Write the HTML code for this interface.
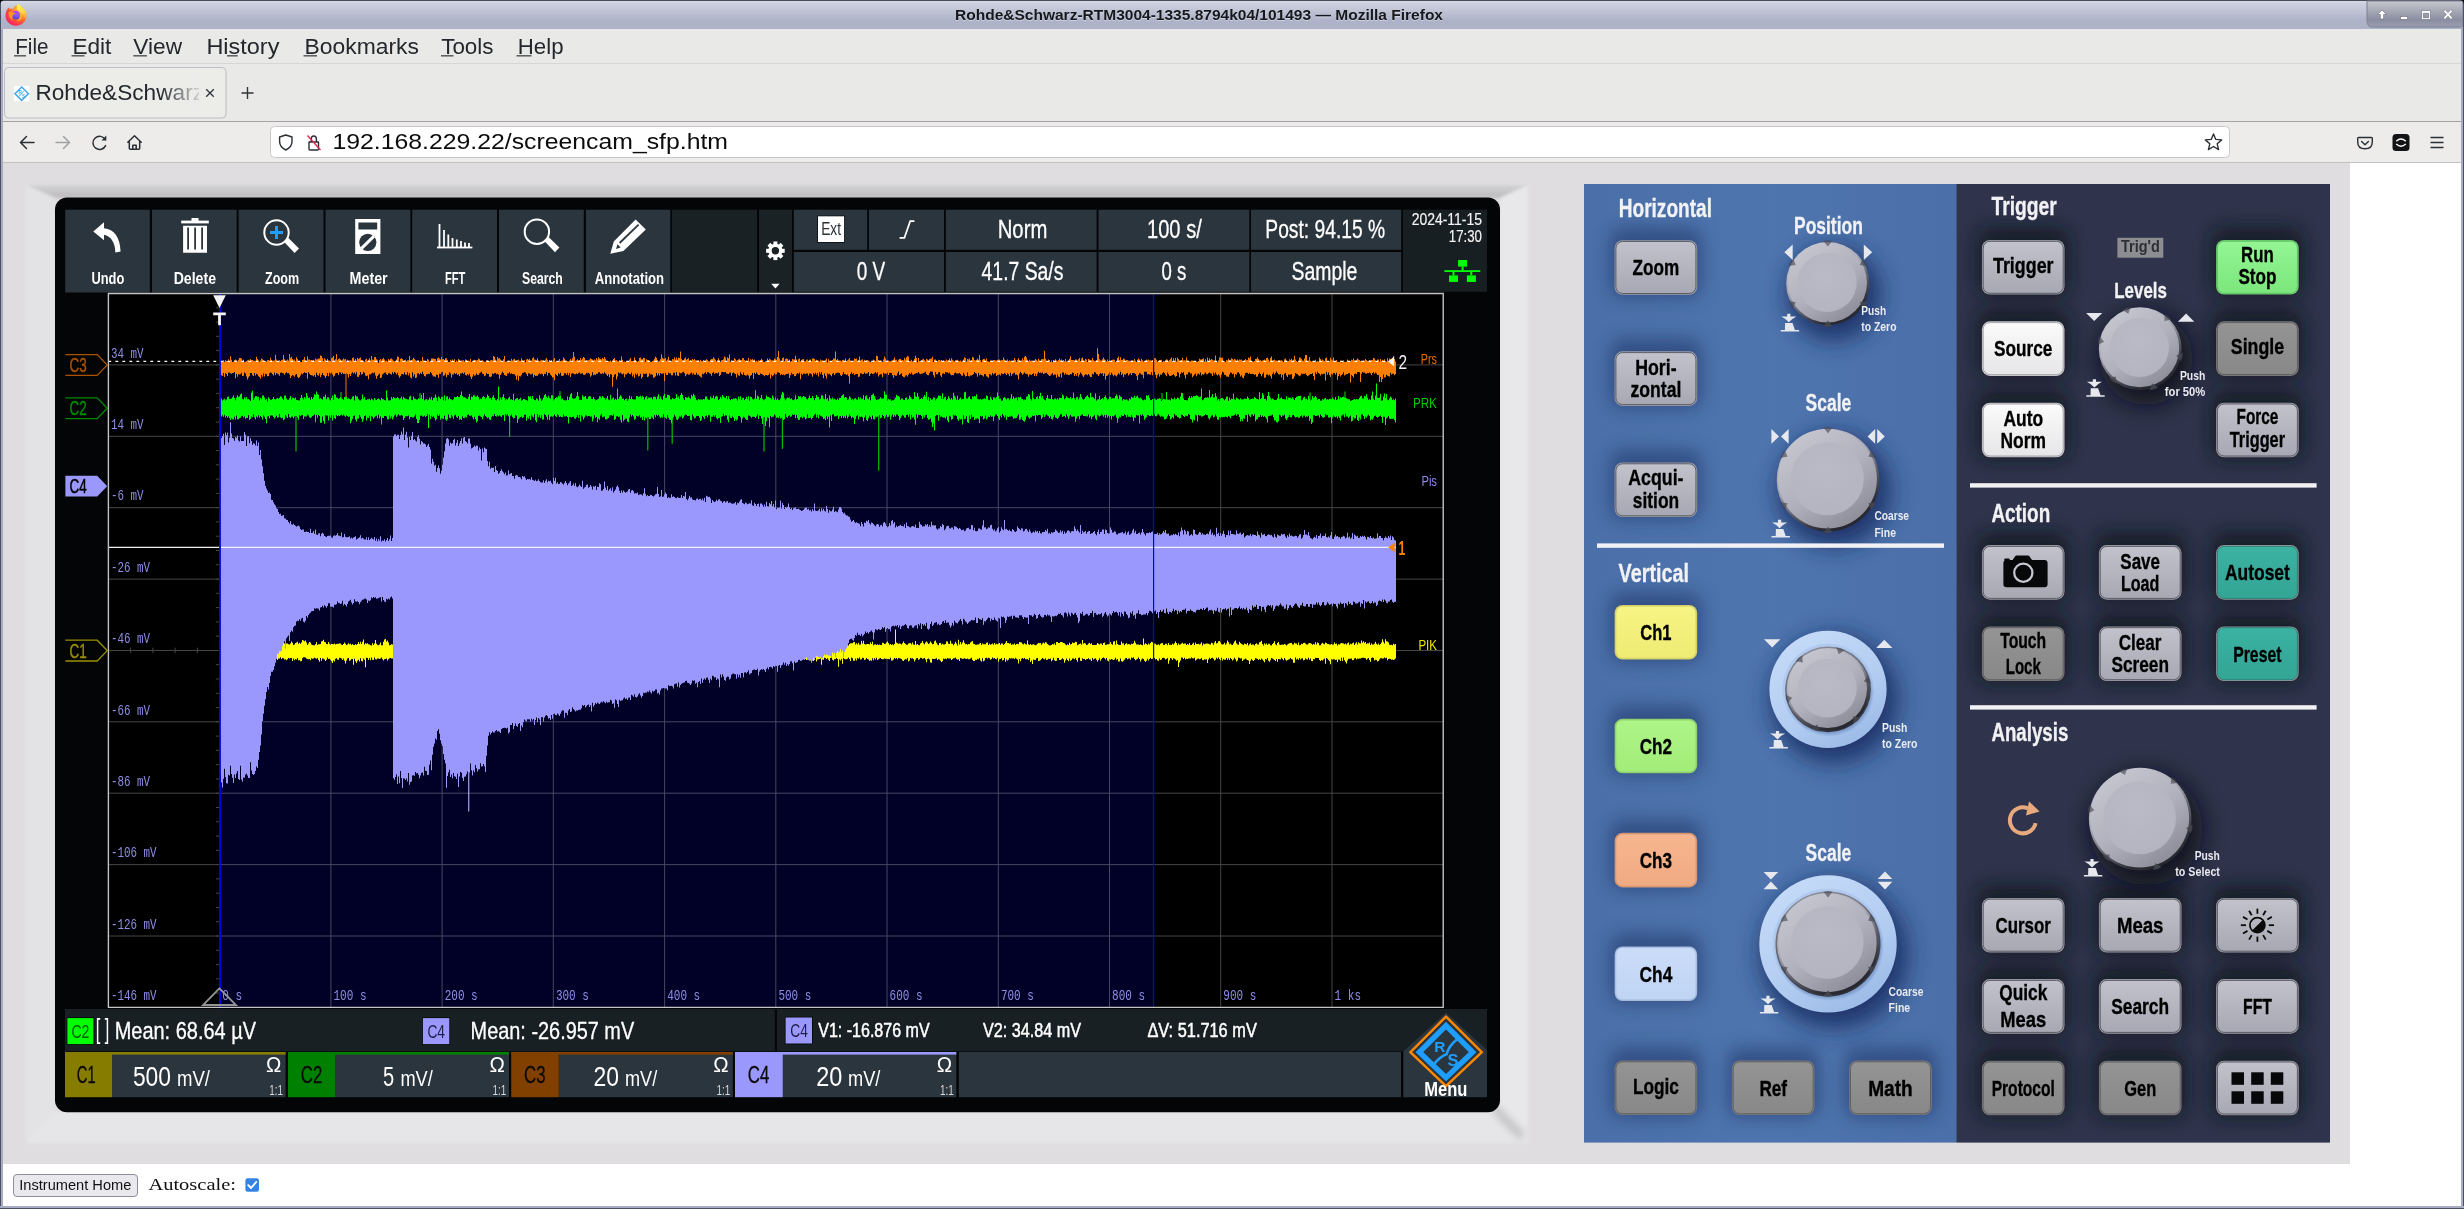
<!DOCTYPE html>
<html lang="en"><head><meta charset="utf-8"><title>Rohde&amp;Schwarz-RTM3004-1335.8794k04/101493</title>
<style>
html,body{margin:0;padding:0;background:#fff;}
body{width:2464px;height:1209px;overflow:hidden;font-family:"Liberation Sans",sans-serif;}
svg{display:block;font-family:"Liberation Sans",sans-serif;will-change:transform;-webkit-font-smoothing:antialiased;}
text{white-space:pre;}
</style></head><body>
<svg width="2464" height="1209" viewBox="0 0 2464 1209">
<defs>
<linearGradient id="gTitle" x1="0" y1="0" x2="0" y2="1"><stop offset="0" stop-color="#d4d7e3"/><stop offset="0.7" stop-color="#aeb3c9"/><stop offset="1" stop-color="#adb2c8"/></linearGradient>
<linearGradient id="gWB" x1="0" y1="0" x2="0" y2="1"><stop offset="0" stop-color="#c6c7ce"/><stop offset="0.72" stop-color="#8b8ea0"/><stop offset="1" stop-color="#9b9eb0"/></linearGradient>
<linearGradient id="gFade" x1="0" y1="0" x2="1" y2="0"><stop offset="0" stop-color="#ebebe9" stop-opacity="0"/><stop offset="1" stop-color="#ebebe9" stop-opacity="1"/></linearGradient>
<radialGradient id="gFx" cx="0.78" cy="0.2" r="1.0"><stop offset="0" stop-color="#ffe14a"/><stop offset="0.3" stop-color="#ffa726"/><stop offset="0.58" stop-color="#ff5a34"/><stop offset="0.8" stop-color="#ff3350"/><stop offset="1" stop-color="#e3107e"/></radialGradient>
<linearGradient id="gFxY" x1="0.3" y1="0" x2="0.7" y2="1"><stop offset="0" stop-color="#fff44f"/><stop offset="0.6" stop-color="#ffd43c"/><stop offset="1" stop-color="#ff9a30"/></linearGradient>
<linearGradient id="gFx2" x1="0.6" y1="0" x2="0.4" y2="1"><stop offset="0" stop-color="#c03ae0"/><stop offset="0.45" stop-color="#8f5af8"/><stop offset="1" stop-color="#5240c4"/></linearGradient>
<filter id="fxb" x="-10%" y="-10%" width="120%" height="120%"><feGaussianBlur stdDeviation="0.35"/></filter>
</defs>
<rect x="0.0" y="0.0" width="2464.0" height="1209.0" fill="#ffffff"/>
<rect x="0.0" y="0.0" width="2464.0" height="29.0" fill="url(#gTitle)"/>
<rect x="0.0" y="0.0" width="2464.0" height="1.2" fill="#4a4d5a"/>
<rect x="3.0" y="1.2" width="2461.0" height="1.0" fill="#dde0ea"/>
<path d="M2367 1 H2463 V27 H2373 Q2367 27 2367 21 Z" fill="url(#gWB)" stroke="#7d8192" stroke-width="1"/>
<path d="M2382 10 L2386.5 14.5 H2383.6 V19 H2380.4 V14.5 H2377.5 Z" fill="#fff" stroke="#6a6d7c" stroke-width="0.6"/>
<rect x="2400.5" y="16.5" width="7.0" height="2.8" fill="#fff" stroke="#6a6d7c" stroke-width="0.6"/>
<path d="M2421.5 10.5 H2430.5 V19.5 H2421.5 Z M2423.3 13.3 V17.7 H2428.7 V13.3 Z" fill="#fff" stroke="#6a6d7c" stroke-width="0.6" fill-rule="evenodd"/>
<path d="M2443.3 11.2 L2445 9.6 L2448 12.7 L2451 9.6 L2452.7 11.2 L2449.6 14.5 L2452.7 17.8 L2451 19.4 L2448 16.3 L2445 19.4 L2443.3 17.8 L2446.4 14.5 Z" fill="#fff" stroke="#6a6d7c" stroke-width="0.6"/>
<g filter="url(#fxb)">
<path d="M16 5.6 C21.8 5.6 26.4 10.2 26.4 15.8 C26.4 21.4 21.8 25.7 16 25.7 C10.2 25.7 5.5 21.4 5.5 15.8 C5.5 12.6 6.6 9.6 8.6 7.4 L9.8 9.4 L11.2 8 L12.4 9.6 C13.4 8.6 14.6 5.6 16 5.6 Z" fill="url(#gFx)"/>
<path d="M18.6 3.8 C20 6.4 24.6 8.6 26 12.6 C26.8 15.4 26.4 18 25.2 20.2 C24.8 14.8 21.6 12.6 19 11.2 C16.6 9.8 15.8 6.6 18.6 3.8 Z" fill="url(#gFxY)"/>
<circle cx="15.9" cy="15.2" r="4.4" fill="url(#gFx2)"/>
<path d="M8.6 12.4 C10.4 11.6 12.2 12 13 12.8 C14.2 12.4 15.4 12.8 15.8 13.6 C14.4 13.8 13.2 14.4 12.6 15.6 C11.8 17.2 12.2 18.8 13.2 19.8 C10.6 19.2 8.4 16.4 8.6 12.4 Z" fill="#ff9a1f"/>
<path d="M19.6 11.4 C22 13 22.6 16.4 21 19 C20 20.6 18 21.4 16.4 21 C19 20.2 20.4 17.6 20 15 C19.8 13.6 19.4 12.4 19.6 11.4 Z" fill="#ffb52e" opacity="0.85"/>
</g>
<text x="955.0" y="21.2" font-size="13.95" font-weight="bold" textLength="488.0" lengthAdjust="spacingAndGlyphs" fill="#e8eaf2" opacity="0.55">Rohde&amp;Schwarz-RTM3004-1335.8794k04/101493 — Mozilla Firefox</text>
<text x="955.0" y="20.2" font-size="13.95" font-weight="bold" textLength="488.0" lengthAdjust="spacingAndGlyphs" fill="#16181c">Rohde&amp;Schwarz-RTM3004-1335.8794k04/101493 — Mozilla Firefox</text>
<rect x="3.0" y="29.0" width="2458.0" height="35.0" fill="#e9e9e7"/>
<rect x="3.0" y="64.0" width="2458.0" height="57.0" fill="#e9e9e7"/>
<rect x="3.0" y="63.0" width="2458.0" height="1.0" fill="#d6d6d4"/>
<rect x="3.0" y="121.0" width="2458.0" height="1.0" fill="#a2a2a2"/>
<rect x="3.0" y="122.0" width="2458.0" height="40.0" fill="#edecea"/>
<rect x="3.0" y="162.0" width="2458.0" height="1.0" fill="#c2c1c1"/>
<text x="15.2" y="53.9" font-size="21.37" textLength="33.3" lengthAdjust="spacingAndGlyphs" fill="#24282d">File</text>
<rect x="14.0" y="55.3" width="12.0" height="1.1" fill="#24282d"/>
<text x="72.4" y="53.9" font-size="21.37" textLength="39.0" lengthAdjust="spacingAndGlyphs" fill="#24282d">Edit</text>
<rect x="71.5" y="55.3" width="13.0" height="1.1" fill="#24282d"/>
<text x="133.3" y="53.9" font-size="21.37" textLength="48.7" lengthAdjust="spacingAndGlyphs" fill="#24282d">View</text>
<rect x="133.3" y="55.3" width="13.7" height="1.1" fill="#24282d"/>
<text x="206.4" y="53.9" font-size="21.37" textLength="73.0" lengthAdjust="spacingAndGlyphs" fill="#24282d">History</text>
<rect x="227.0" y="55.3" width="10.7" height="1.1" fill="#24282d"/>
<text x="304.5" y="53.9" font-size="21.37" textLength="114.5" lengthAdjust="spacingAndGlyphs" fill="#24282d">Bookmarks</text>
<rect x="303.5" y="55.3" width="13.5" height="1.1" fill="#24282d"/>
<text x="441.2" y="53.9" font-size="21.37" textLength="52.3" lengthAdjust="spacingAndGlyphs" fill="#24282d">Tools</text>
<rect x="441.0" y="55.3" width="12.5" height="1.1" fill="#24282d"/>
<text x="517.8" y="53.9" font-size="21.37" textLength="45.7" lengthAdjust="spacingAndGlyphs" fill="#24282d">Help</text>
<rect x="516.5" y="55.3" width="15.0" height="1.1" fill="#24282d"/>
<rect x="4.5" y="67.5" width="221.5" height="50.5" rx="4" fill="#ecece9" stroke="#bdbdc6" stroke-width="1"/>
<rect x="14.0" y="86.0" width="15.4" height="15.4" fill="#ffffff"/>
<path d="M21.7 87 L28.4 93.7 L21.7 100.4 L15 93.7 Z" fill="none" stroke="#3fa9ee" stroke-width="1.5"/>
<path d="M24.2 90.6 Q21.8 92.2 21.6 94 Q20 94.6 18.8 96.6" fill="none" stroke="#3fa9ee" stroke-width="0.9"/>
<text x="18.4" y="94.4" font-size="4.60" font-weight="bold" fill="#3fa9ee">R</text>
<text x="21.9" y="97.6" font-size="4.60" font-weight="bold" fill="#3fa9ee">S</text>
<text x="35.4" y="99.8" font-size="21.22" textLength="168.6" lengthAdjust="spacingAndGlyphs" fill="#24282d">Rohde&amp;Schwarz</text>
<rect x="160.0" y="72.0" width="45.0" height="42.0" fill="url(#gFade)"/>
<rect x="199.0" y="72.0" width="25.0" height="42.0" fill="#ecece9"/>
<path d="M206.2 89.2 L213.8 96.8 M213.8 89.2 L206.2 96.8" fill="none" stroke="#30343a" stroke-width="1.3"/>
<path d="M241.5 93 H253.5 M247.5 87 V99" fill="none" stroke="#30343a" stroke-width="1.4"/>
<path d="M34 142.5 H20.5 M26.5 136.5 L20.5 142.5 L26.5 148.5" fill="none" stroke="#2b2f35" stroke-width="1.5" stroke-linecap="round" stroke-linejoin="round"/>
<path d="M56 142.5 H69.5 M63.5 136.5 L69.5 142.5 L63.5 148.5" fill="none" stroke="#a0a2a5" stroke-width="1.5" stroke-linecap="round" stroke-linejoin="round"/>
<path d="M105.3 139.6 A6.6 6.6 0 1 0 105.6 145.6" fill="none" stroke="#2b2f35" stroke-width="1.5" stroke-linecap="round"/>
<path d="M106.3 135.6 V140.4 H101.5 Z" fill="#2b2f35"/>
<path d="M127.8 142.3 L134.5 135.8 L141.2 142.3 M129.3 141.5 V148.3 Q129.3 149.3 130.3 149.3 H138.7 Q139.7 149.3 139.7 148.3 V141.5 M132.8 149.3 V145.2 H136.2 V149.3" fill="none" stroke="#2b2f35" stroke-width="1.5" stroke-linecap="round" stroke-linejoin="round"/>
<rect x="270.5" y="126.5" width="1959.0" height="31.0" rx="4" fill="#ffffff" stroke="#c9c9cd" stroke-width="1"/>
<path d="M285.8 135 L292 137 V141.5 Q292 147 285.8 150 Q279.6 147 279.6 141.5 V137 Z" fill="none" stroke="#2b2f35" stroke-width="1.4" stroke-linejoin="round"/>
<path d="M309 142 H318.5 V149 Q318.5 150 317.5 150 H310 Q309 150 309 149 Z M311.2 142 V139.5 Q311.2 136 313.8 136 Q316.4 136 316.4 139.5 V142" fill="none" stroke="#2b2f35" stroke-width="1.4" stroke-linejoin="round"/>
<path d="M307.5 135.5 L320.5 150" fill="none" stroke="#e22850" stroke-width="1.4"/>
<text x="332.5" y="148.6" font-size="21.51" textLength="395.5" lengthAdjust="spacingAndGlyphs" fill="#0c0c0d">192.168.229.22/screencam_sfp.htm</text>
<path d="M2213.5 134.0 L2215.8 139.4 L2221.7 139.9 L2217.2 143.8 L2218.6 149.6 L2213.5 146.5 L2208.4 149.6 L2209.8 143.8 L2205.3 139.9 L2211.2 139.4 Z" fill="none" stroke="#2b2f35" stroke-width="1.4" stroke-linejoin="round"/>
<path d="M2358.5 137.5 H2371.5 Q2372.3 137.5 2372.3 138.5 V142 Q2372.3 148.8 2365 148.8 Q2357.7 148.8 2357.7 142 V138.5 Q2357.7 137.5 2358.5 137.5 Z" fill="none" stroke="#2b2f35" stroke-width="1.4"/>
<path d="M2361.6 141.6 L2365 144.8 L2368.4 141.6" fill="none" stroke="#2b2f35" stroke-width="1.4" stroke-linecap="round" stroke-linejoin="round"/>
<rect x="2392.5" y="134.0" width="17.0" height="17.0" rx="3.5" fill="#111315"/>
<path d="M2396.2 141.2 Q2401 136.8 2405.8 141.2 M2396.2 144 Q2401 148.4 2405.8 144" fill="none" stroke="#fff" stroke-width="1.3"/>
<path d="M2430.5 137.5 H2443.5 M2430.5 142.5 H2443.5 M2430.5 147.5 H2443.5" fill="none" stroke="#2b2f35" stroke-width="1.5"/>
<rect x="3.0" y="163.0" width="2347.0" height="1001.0" fill="#dfdde0"/>
<defs>
<filter id="fBlur6" x="-5%" y="-5%" width="110%" height="110%"><feGaussianBlur stdDeviation="3"/></filter>
<filter id="fBlurC" x="-100%" y="-100%" width="300%" height="300%"><feGaussianBlur stdDeviation="3.5"/></filter>
<filter id="fBlurB" x="-5%" y="-5%" width="110%" height="110%"><feGaussianBlur stdDeviation="1.8"/></filter>
<filter id="fBlur2" x="-5%" y="-5%" width="110%" height="110%"><feGaussianBlur stdDeviation="1.2"/></filter>
<linearGradient id="gBezT" x1="0" y1="0" x2="0" y2="1"><stop offset="0" stop-color="#d3d2d5"/><stop offset="1" stop-color="#bbbabd"/></linearGradient>
</defs>
<g filter="url(#fBlurB)"><path d="M26 185 L1528 185 L1500 198 L55 198 Z" fill="url(#gBezT)"/><path d="M26 185 L55 198 L55 1112 L26 1143 Z" fill="#e3e2e5"/><path d="M1528 185 L1528 1143 L1500 1112 L1500 198 Z" fill="#e8e7e9"/><path d="M26 1143 L55 1112 L1500 1112 L1528 1143 Z" fill="#e6e5e7"/></g>
<g filter="url(#fBlurC)" opacity="0.48"><path d="M1498 1112 L1520 1134" fill="none" stroke="#a2a1a4" stroke-width="9" stroke-linecap="round"/></g>
<rect x="55.0" y="197.5" width="1445.0" height="914.8" rx="12" fill="#030507"/>
<rect x="65.2" y="209.7" width="84.6" height="82.8" fill="#2b353d"/>
<text x="91.4" y="284.0" font-size="17.30" font-weight="bold" textLength="32.9" lengthAdjust="spacingAndGlyphs" fill="#ffffff">Undo</text>
<rect x="152.0" y="209.7" width="84.7" height="82.8" fill="#2b353d"/>
<text x="173.7" y="284.0" font-size="17.30" font-weight="bold" textLength="42.3" lengthAdjust="spacingAndGlyphs" fill="#ffffff">Delete</text>
<rect x="238.6" y="209.7" width="84.9" height="82.8" fill="#2b353d"/>
<text x="265.0" y="284.0" font-size="17.30" font-weight="bold" textLength="34.2" lengthAdjust="spacingAndGlyphs" fill="#ffffff">Zoom</text>
<rect x="325.5" y="209.7" width="84.9" height="82.8" fill="#2b353d"/>
<text x="349.5" y="284.0" font-size="17.30" font-weight="bold" textLength="38.2" lengthAdjust="spacingAndGlyphs" fill="#ffffff">Meter</text>
<rect x="412.2" y="209.7" width="84.8" height="82.8" fill="#2b353d"/>
<text x="445.0" y="284.0" font-size="17.30" font-weight="bold" textLength="20.4" lengthAdjust="spacingAndGlyphs" fill="#ffffff">FFT</text>
<rect x="499.0" y="209.7" width="84.8" height="82.8" fill="#2b353d"/>
<text x="522.0" y="284.0" font-size="17.30" font-weight="bold" textLength="40.8" lengthAdjust="spacingAndGlyphs" fill="#ffffff">Search</text>
<rect x="585.9" y="209.7" width="84.4" height="82.8" fill="#2b353d"/>
<text x="594.8" y="284.0" font-size="17.30" font-weight="bold" textLength="69.3" lengthAdjust="spacingAndGlyphs" fill="#ffffff">Annotation</text>
<rect x="672.0" y="209.7" width="85.1" height="82.8" fill="#1a2125"/>
<rect x="759.0" y="209.7" width="33.0" height="82.8" fill="#1a2226"/>
<path d="M93.3 231.4 L104 222.3 V228.3 Q119.5 230 120.6 251.5 L115.4 252.6 Q114.6 237 104 234.8 V240.2 Z" fill="#ffffff"/>
<rect x="181.2" y="220.6" width="27.6" height="2.8" fill="#fff"/>
<rect x="191.5" y="218.0" width="7.0" height="3.0" fill="#fff"/>
<path d="M183.1 225.7 H207 V252.7 H183.1 Z M187.2 227.6 V249.4 H189 V227.6 Z M194.2 227.6 V249.4 H196 V227.6 Z M201.2 227.6 V249.4 H203 V227.6 Z" fill="#fff" fill-rule="evenodd"/>
<circle cx="276.5" cy="232.5" r="12.2" fill="none" stroke="#fff" stroke-width="2"/>
<path d="M284.2 242 L288.4 238 L299 248.4 L294.6 253 Z" fill="#fff"/>
<path d="M270 232.5 H283 M276.5 226 V239" fill="none" stroke="#1e9eff" stroke-width="3"/>
<path d="M355.2 218.9 H380.4 V254.1 H355.2 Z M358.4 222.4 V229.6 H377.2 V222.4 Z" fill="#fff" fill-rule="evenodd"/>
<circle cx="367.8" cy="242.3" r="8.6" fill="#2b353d"/>
<path d="M361.5 248.3 L374 236.2" fill="none" stroke="#fff" stroke-width="3"/>
<rect x="437.0" y="246.6" width="35.4" height="1.8" fill="#fff"/>
<rect x="438.6" y="224.0" width="1.8" height="23.0" fill="#fff"/>
<rect x="443.1" y="230.0" width="1.8" height="17.0" fill="#fff"/>
<rect x="447.4" y="234.5" width="1.8" height="12.5" fill="#fff"/>
<rect x="451.6" y="238.0" width="1.8" height="9.0" fill="#fff"/>
<rect x="455.9" y="239.5" width="1.8" height="7.5" fill="#fff"/>
<rect x="460.1" y="241.0" width="1.8" height="6.0" fill="#fff"/>
<rect x="464.1" y="242.5" width="1.8" height="4.5" fill="#fff"/>
<rect x="468.1" y="243.0" width="1.8" height="4.0" fill="#fff"/>
<circle cx="536.9" cy="231.7" r="12.2" fill="none" stroke="#fff" stroke-width="2"/>
<path d="M544.6 241.2 L548.8 237.2 L559.4 247.6 L555 252.2 Z" fill="#fff"/>
<path d="M610.3 253.8 L613.8 241.4 L635.6 219.4 L645.8 229.6 L623.4 251 Z" fill="#fff"/>
<path d="M617.6 244.2 L616 249 L620.6 247.6 Z" fill="#2b353d"/>
<path d="M619.6 243 L638.6 224.6" fill="none" stroke="#2b353d" stroke-width="1.8"/>
<rect x="-2" y="-9.3" width="4" height="5" fill="#fff" transform="translate(775.4 250.8) rotate(0.0)"/><rect x="-2" y="-9.3" width="4" height="5" fill="#fff" transform="translate(775.4 250.8) rotate(45.0)"/><rect x="-2" y="-9.3" width="4" height="5" fill="#fff" transform="translate(775.4 250.8) rotate(90.0)"/><rect x="-2" y="-9.3" width="4" height="5" fill="#fff" transform="translate(775.4 250.8) rotate(135.0)"/><rect x="-2" y="-9.3" width="4" height="5" fill="#fff" transform="translate(775.4 250.8) rotate(180.0)"/><rect x="-2" y="-9.3" width="4" height="5" fill="#fff" transform="translate(775.4 250.8) rotate(225.0)"/><rect x="-2" y="-9.3" width="4" height="5" fill="#fff" transform="translate(775.4 250.8) rotate(270.0)"/><rect x="-2" y="-9.3" width="4" height="5" fill="#fff" transform="translate(775.4 250.8) rotate(315.0)"/>
<circle cx="775.4" cy="250.8" r="5.4" fill="none" stroke="#fff" stroke-width="3.4"/>
<path d="M771.2 283.8 H779.6 L775.4 288.4 Z" fill="#fff"/>
<rect x="793.8" y="209.7" width="73.4" height="40.1" fill="#2b353d"/>
<rect x="869.0" y="209.7" width="75.0" height="40.1" fill="#2b353d"/>
<rect x="945.8" y="209.7" width="150.8" height="40.1" fill="#2b353d"/>
<rect x="1098.5" y="209.7" width="150.8" height="40.1" fill="#2b353d"/>
<rect x="1251.0" y="209.7" width="150.2" height="40.1" fill="#2b353d"/>
<rect x="793.8" y="252.0" width="150.2" height="39.8" fill="#2b353d"/>
<rect x="945.8" y="252.0" width="150.8" height="39.8" fill="#2b353d"/>
<rect x="1098.5" y="252.0" width="150.8" height="39.8" fill="#2b353d"/>
<rect x="1251.0" y="252.0" width="150.2" height="39.8" fill="#2b353d"/>
<rect x="1403.0" y="209.7" width="84.0" height="82.1" fill="#181f23"/>
<rect x="817.3" y="215.6" width="27.5" height="27.1" fill="#05080a"/>
<rect x="818.0" y="216.3" width="26.1" height="25.7" fill="#ffffff"/>
<text x="821.2" y="235.2" font-size="17.44" textLength="19.8" lengthAdjust="spacingAndGlyphs" fill="#2a3036">Ext</text>
<path d="M899.6 237.8 H904.4 L910.2 221.2 H914.4" fill="none" stroke="#fff" stroke-width="1.7"/>
<text x="997.7" y="237.7" font-size="25.29" textLength="49.6" lengthAdjust="spacingAndGlyphs" fill="#fff" stroke="#fff" stroke-width="0.3">Norm</text>
<text x="1147.0" y="237.7" font-size="25.29" textLength="54.8" lengthAdjust="spacingAndGlyphs" fill="#fff" stroke="#fff" stroke-width="0.3">100 s/</text>
<text x="1265.3" y="237.7" font-size="25.29" textLength="119.8" lengthAdjust="spacingAndGlyphs" fill="#fff" stroke="#fff" stroke-width="0.3">Post: 94.15 %</text>
<text x="856.7" y="279.7" font-size="25.00" textLength="28.5" lengthAdjust="spacingAndGlyphs" fill="#fff" stroke="#fff" stroke-width="0.3">0 V</text>
<text x="981.6" y="279.7" font-size="25.00" textLength="81.8" lengthAdjust="spacingAndGlyphs" fill="#fff" stroke="#fff" stroke-width="0.3">41.7 Sa/s</text>
<text x="1161.6" y="279.7" font-size="25.00" textLength="24.8" lengthAdjust="spacingAndGlyphs" fill="#fff" stroke="#fff" stroke-width="0.3">0 s</text>
<text x="1291.6" y="279.7" font-size="25.00" textLength="65.8" lengthAdjust="spacingAndGlyphs" fill="#fff" stroke="#fff" stroke-width="0.3">Sample</text>
<text x="1411.7" y="224.9" font-size="17.30" textLength="70.3" lengthAdjust="spacingAndGlyphs" fill="#f4f4f4" stroke="#f4f4f4" stroke-width="0.2">2024-11-15</text>
<text x="1448.8" y="242.1" font-size="17.30" textLength="33.2" lengthAdjust="spacingAndGlyphs" fill="#f4f4f4" stroke="#f4f4f4" stroke-width="0.2">17:30</text>
<rect x="1458.1" y="260.0" width="8.9" height="6.6" fill="#00ff00"/>
<rect x="1461.6" y="266.6" width="2.0" height="3.6" fill="#00ff00"/>
<rect x="1444.4" y="270.2" width="35.9" height="1.8" fill="#00ff00"/>
<rect x="1452.5" y="272.0" width="2.0" height="3.4" fill="#00ff00"/>
<rect x="1470.3" y="272.0" width="2.0" height="3.4" fill="#00ff00"/>
<rect x="1449.0" y="275.4" width="9.0" height="6.5" fill="#00ff00"/>
<rect x="1466.9" y="275.4" width="9.0" height="6.5" fill="#00ff00"/>
<rect x="108.4" y="293.5" width="1334.8" height="713.9" fill="#000000"/>
<rect x="220.0" y="293.5" width="933.5" height="713.9" fill="#010127"/>
<g opacity="0.27"><line x1="219.6" y1="293.5" x2="219.6" y2="1007.4" stroke="#fff" stroke-width="1"/><line x1="330.9" y1="293.5" x2="330.9" y2="1007.4" stroke="#fff" stroke-width="1"/><line x1="442.1" y1="293.5" x2="442.1" y2="1007.4" stroke="#fff" stroke-width="1"/><line x1="553.3" y1="293.5" x2="553.3" y2="1007.4" stroke="#fff" stroke-width="1"/><line x1="664.6" y1="293.5" x2="664.6" y2="1007.4" stroke="#fff" stroke-width="1"/><line x1="775.8" y1="293.5" x2="775.8" y2="1007.4" stroke="#fff" stroke-width="1"/><line x1="887.0" y1="293.5" x2="887.0" y2="1007.4" stroke="#fff" stroke-width="1"/><line x1="998.3" y1="293.5" x2="998.3" y2="1007.4" stroke="#fff" stroke-width="1"/><line x1="1109.5" y1="293.5" x2="1109.5" y2="1007.4" stroke="#fff" stroke-width="1"/><line x1="1220.7" y1="293.5" x2="1220.7" y2="1007.4" stroke="#fff" stroke-width="1"/><line x1="1332.0" y1="293.5" x2="1332.0" y2="1007.4" stroke="#fff" stroke-width="1"/><line x1="108.4" y1="364.9" x2="1443.2" y2="364.9" stroke="#fff" stroke-width="1"/><line x1="108.4" y1="436.3" x2="1443.2" y2="436.3" stroke="#fff" stroke-width="1"/><line x1="108.4" y1="507.7" x2="1443.2" y2="507.7" stroke="#fff" stroke-width="1"/><line x1="108.4" y1="579.1" x2="1443.2" y2="579.1" stroke="#fff" stroke-width="1"/><line x1="108.4" y1="650.5" x2="1443.2" y2="650.5" stroke="#fff" stroke-width="1"/><line x1="108.4" y1="721.8" x2="1443.2" y2="721.8" stroke="#fff" stroke-width="1"/><line x1="108.4" y1="793.2" x2="1443.2" y2="793.2" stroke="#fff" stroke-width="1"/><line x1="108.4" y1="864.6" x2="1443.2" y2="864.6" stroke="#fff" stroke-width="1"/><line x1="108.4" y1="936.0" x2="1443.2" y2="936.0" stroke="#fff" stroke-width="1"/><line x1="216.0" y1="293.5" x2="219.0" y2="293.5" stroke="#fff" stroke-width="1"/><line x1="216.0" y1="307.8" x2="219.0" y2="307.8" stroke="#fff" stroke-width="1"/><line x1="216.0" y1="322.1" x2="219.0" y2="322.1" stroke="#fff" stroke-width="1"/><line x1="216.0" y1="336.3" x2="219.0" y2="336.3" stroke="#fff" stroke-width="1"/><line x1="216.0" y1="350.6" x2="219.0" y2="350.6" stroke="#fff" stroke-width="1"/><line x1="216.0" y1="364.9" x2="219.0" y2="364.9" stroke="#fff" stroke-width="1"/><line x1="216.0" y1="379.2" x2="219.0" y2="379.2" stroke="#fff" stroke-width="1"/><line x1="216.0" y1="393.4" x2="219.0" y2="393.4" stroke="#fff" stroke-width="1"/><line x1="216.0" y1="407.7" x2="219.0" y2="407.7" stroke="#fff" stroke-width="1"/><line x1="216.0" y1="422.0" x2="219.0" y2="422.0" stroke="#fff" stroke-width="1"/><line x1="216.0" y1="436.3" x2="219.0" y2="436.3" stroke="#fff" stroke-width="1"/><line x1="216.0" y1="450.6" x2="219.0" y2="450.6" stroke="#fff" stroke-width="1"/><line x1="216.0" y1="464.8" x2="219.0" y2="464.8" stroke="#fff" stroke-width="1"/><line x1="216.0" y1="479.1" x2="219.0" y2="479.1" stroke="#fff" stroke-width="1"/><line x1="216.0" y1="493.4" x2="219.0" y2="493.4" stroke="#fff" stroke-width="1"/><line x1="216.0" y1="507.7" x2="219.0" y2="507.7" stroke="#fff" stroke-width="1"/><line x1="216.0" y1="521.9" x2="219.0" y2="521.9" stroke="#fff" stroke-width="1"/><line x1="216.0" y1="536.2" x2="219.0" y2="536.2" stroke="#fff" stroke-width="1"/><line x1="216.0" y1="550.5" x2="219.0" y2="550.5" stroke="#fff" stroke-width="1"/><line x1="216.0" y1="564.8" x2="219.0" y2="564.8" stroke="#fff" stroke-width="1"/><line x1="216.0" y1="579.1" x2="219.0" y2="579.1" stroke="#fff" stroke-width="1"/><line x1="216.0" y1="593.3" x2="219.0" y2="593.3" stroke="#fff" stroke-width="1"/><line x1="216.0" y1="607.6" x2="219.0" y2="607.6" stroke="#fff" stroke-width="1"/><line x1="216.0" y1="621.9" x2="219.0" y2="621.9" stroke="#fff" stroke-width="1"/><line x1="216.0" y1="636.2" x2="219.0" y2="636.2" stroke="#fff" stroke-width="1"/><line x1="216.0" y1="650.5" x2="219.0" y2="650.5" stroke="#fff" stroke-width="1"/><line x1="216.0" y1="664.7" x2="219.0" y2="664.7" stroke="#fff" stroke-width="1"/><line x1="216.0" y1="679.0" x2="219.0" y2="679.0" stroke="#fff" stroke-width="1"/><line x1="216.0" y1="693.3" x2="219.0" y2="693.3" stroke="#fff" stroke-width="1"/><line x1="216.0" y1="707.6" x2="219.0" y2="707.6" stroke="#fff" stroke-width="1"/><line x1="216.0" y1="721.8" x2="219.0" y2="721.8" stroke="#fff" stroke-width="1"/><line x1="216.0" y1="736.1" x2="219.0" y2="736.1" stroke="#fff" stroke-width="1"/><line x1="216.0" y1="750.4" x2="219.0" y2="750.4" stroke="#fff" stroke-width="1"/><line x1="216.0" y1="764.7" x2="219.0" y2="764.7" stroke="#fff" stroke-width="1"/><line x1="216.0" y1="779.0" x2="219.0" y2="779.0" stroke="#fff" stroke-width="1"/><line x1="216.0" y1="793.2" x2="219.0" y2="793.2" stroke="#fff" stroke-width="1"/><line x1="216.0" y1="807.5" x2="219.0" y2="807.5" stroke="#fff" stroke-width="1"/><line x1="216.0" y1="821.8" x2="219.0" y2="821.8" stroke="#fff" stroke-width="1"/><line x1="216.0" y1="836.1" x2="219.0" y2="836.1" stroke="#fff" stroke-width="1"/><line x1="216.0" y1="850.3" x2="219.0" y2="850.3" stroke="#fff" stroke-width="1"/><line x1="216.0" y1="864.6" x2="219.0" y2="864.6" stroke="#fff" stroke-width="1"/><line x1="216.0" y1="878.9" x2="219.0" y2="878.9" stroke="#fff" stroke-width="1"/><line x1="216.0" y1="893.2" x2="219.0" y2="893.2" stroke="#fff" stroke-width="1"/><line x1="216.0" y1="907.5" x2="219.0" y2="907.5" stroke="#fff" stroke-width="1"/><line x1="216.0" y1="921.7" x2="219.0" y2="921.7" stroke="#fff" stroke-width="1"/><line x1="216.0" y1="936.0" x2="219.0" y2="936.0" stroke="#fff" stroke-width="1"/><line x1="216.0" y1="950.3" x2="219.0" y2="950.3" stroke="#fff" stroke-width="1"/><line x1="216.0" y1="964.6" x2="219.0" y2="964.6" stroke="#fff" stroke-width="1"/><line x1="216.0" y1="978.8" x2="219.0" y2="978.8" stroke="#fff" stroke-width="1"/><line x1="216.0" y1="993.1" x2="219.0" y2="993.1" stroke="#fff" stroke-width="1"/><line x1="130.6" y1="647.7" x2="130.6" y2="653.2" stroke="#fff" stroke-width="1"/><line x1="152.9" y1="647.7" x2="152.9" y2="653.2" stroke="#fff" stroke-width="1"/><line x1="175.1" y1="647.7" x2="175.1" y2="653.2" stroke="#fff" stroke-width="1"/><line x1="197.4" y1="647.7" x2="197.4" y2="653.2" stroke="#fff" stroke-width="1"/></g>
<path d="M220 641.4h1V644.1h1V645.1h1V644.5h1V644.4h1V644.3h1V643.0h1V642.0h1V644.2h1V644.3h1V644.2h1V643.7h1V643.6h1V643.4h1V643.7h1V641.6h1V640.3h1V642.5h1V641.9h1V644.2h1V643.7h1V644.2h1V644.4h1V645.3h1V644.9h1V645.2h1V641.5h1V642.6h1V645.0h1V643.9h1V643.3h1V642.7h1V644.1h1V641.6h1V644.0h1V643.7h1V643.6h1V644.0h1V643.8h1V643.5h1V644.5h1V644.0h1V641.4h1V642.6h1V638.5h1V640.7h1V642.0h1V645.1h1V645.2h1V645.1h1V645.0h1V642.8h1V644.0h1V644.8h1V642.8h1V643.6h1V642.1h1V643.0h1V643.3h1V641.9h1V644.1h1V644.5h1V644.4h1V642.3h1V643.6h1V645.1h1V643.4h1V643.5h1V644.3h1V644.5h1V643.4h1V641.5h1V642.8h1V644.9h1V644.4h1V643.0h1V642.5h1V641.7h1V643.8h1V642.8h1V643.8h1V642.4h1V639.9h1V640.4h1V641.3h1V640.4h1V642.5h1V645.1h1V643.5h1V642.0h1V642.6h1V644.6h1V644.9h1V645.3h1V645.3h1V644.2h1V642.0h1V644.9h1V644.3h1V644.3h1V644.1h1V641.6h1V641.0h1V639.8h1V641.9h1V642.3h1V644.1h1V644.2h1V642.1h1V643.7h1V644.8h1V644.0h1V644.1h1V644.2h1V643.6h1V644.4h1V644.1h1V643.8h1V643.7h1V643.6h1V643.4h1V644.8h1V645.0h1V644.1h1V642.6h1V643.8h1V645.1h1V644.5h1V643.3h1V644.2h1V643.7h1V645.1h1V644.0h1V645.0h1V644.9h1V644.2h1V644.7h1V643.9h1V642.0h1V644.1h1V641.8h1V644.0h1V641.8h1V639.6h1V644.5h1V643.3h1V643.7h1V643.2h1V644.3h1V644.5h1V645.2h1V645.4h1V643.3h1V644.9h1V643.6h1V640.0h1V643.7h1V645.0h1V645.2h1V644.6h1V642.6h1V645.3h1V645.2h1V641.7h1V639.5h1V639.1h1V641.6h1V640.5h1V642.6h1V645.2h1V645.0h1V644.2h1V644.4h1V644.8h1V645.0h1V645.1h1V644.0h1V644.8h1V643.3h1V644.1h1V644.8h1V643.6h1V644.2h1V644.6h1V644.5h1V642.8h1V643.9h1V644.7h1V644.7h1V644.2h1V643.6h1V644.7h1V644.2h1V644.7h1V644.9h1V644.4h1V644.2h1V644.9h1V641.9h1V641.4h1V642.8h1V642.4h1V643.3h1V644.5h1V645.3h1V643.7h1V642.7h1V642.1h1V641.7h1V644.3h1V644.1h1V643.5h1V643.3h1V643.7h1V641.2h1V640.5h1V642.6h1V645.3h1V644.6h1V643.7h1V642.3h1V641.1h1V642.5h1V644.3h1V641.2h1V642.0h1V642.3h1V643.4h1V642.4h1V644.6h1V642.6h1V644.5h1V643.4h1V644.1h1V643.5h1V644.1h1V643.6h1V643.7h1V644.7h1V644.2h1V642.7h1V643.7h1V644.8h1V644.2h1V645.1h1V645.0h1V642.1h1V644.7h1V640.1h1V643.2h1V643.7h1V644.3h1V644.8h1V644.6h1V643.3h1V642.6h1V641.5h1V644.8h1V642.1h1V644.2h1V641.9h1V641.6h1V644.6h1V642.3h1V643.3h1V644.4h1V645.0h1V642.2h1V640.7h1V641.6h1V645.4h1V643.3h1V644.7h1V644.9h1V644.6h1V644.8h1V644.9h1V643.7h1V643.8h1V644.6h1V643.8h1V644.4h1V643.7h1V642.8h1V642.1h1V643.3h1V644.7h1V643.6h1V643.7h1V644.8h1V643.0h1V643.9h1V644.6h1V644.5h1V644.9h1V641.9h1V643.0h1V642.3h1V643.2h1V644.5h1V644.2h1V644.7h1V643.6h1V643.5h1V642.7h1V643.9h1V644.7h1V644.2h1V643.2h1V644.1h1V643.7h1V644.3h1V645.1h1V644.9h1V644.0h1V643.4h1V644.4h1V644.1h1V644.0h1V640.8h1V643.3h1V642.8h1V643.8h1V642.5h1V644.5h1V645.1h1V645.3h1V643.9h1V644.6h1V642.9h1V645.1h1V645.0h1V641.0h1V642.7h1V643.9h1V644.1h1V644.1h1V643.6h1V642.3h1V642.4h1V644.0h1V644.0h1V644.9h1V644.2h1V643.4h1V642.5h1V643.7h1V642.8h1V642.1h1V643.2h1V644.8h1V643.6h1V643.0h1V642.7h1V641.6h1V643.9h1V643.9h1V645.2h1V643.5h1V644.9h1V643.5h1V643.7h1V644.0h1V644.6h1V644.8h1V644.3h1V641.4h1V643.9h1V643.0h1V642.5h1V643.5h1V644.2h1V644.5h1V644.1h1V643.9h1V642.5h1V645.0h1V642.7h1V644.0h1V644.1h1V642.0h1V645.0h1V644.1h1V643.0h1V643.5h1V644.9h1V644.0h1V644.3h1V644.6h1V645.5h1V643.9h1V644.6h1V644.3h1V643.3h1V642.4h1V643.3h1V642.3h1V644.1h1V645.1h1V644.5h1V642.8h1V644.0h1V643.9h1V644.6h1V640.4h1V639.6h1V644.9h1V643.3h1V643.9h1V644.1h1V643.6h1V644.4h1V644.7h1V644.5h1V642.8h1V645.0h1V641.5h1V644.2h1V641.8h1V642.4h1V642.6h1V641.6h1V643.0h1V642.5h1V641.4h1V643.9h1V644.7h1V642.1h1V642.8h1V643.3h1V644.6h1V643.1h1V644.5h1V642.5h1V641.2h1V644.5h1V642.4h1V643.8h1V642.3h1V644.9h1V643.3h1V644.2h1V643.7h1V644.5h1V643.2h1V644.5h1V643.3h1V643.1h1V644.3h1V643.4h1V643.6h1V643.9h1V642.4h1V642.7h1V644.4h1V645.2h1V644.3h1V644.0h1V644.8h1V644.4h1V643.9h1V644.9h1V644.0h1V644.8h1V644.8h1V645.0h1V644.2h1V645.4h1V643.6h1V643.0h1V642.6h1V641.4h1V643.8h1V642.9h1V642.9h1V643.9h1V644.5h1V644.8h1V645.1h1V642.5h1V643.8h1V644.6h1V644.8h1V644.7h1V643.0h1V641.6h1V644.3h1V644.9h1V642.9h1V642.8h1V642.8h1V643.9h1V644.8h1V642.3h1V641.3h1V643.2h1V644.4h1V640.2h1V643.0h1V645.2h1V641.9h1V642.0h1V642.8h1V641.5h1V639.3h1V641.4h1V643.5h1V644.9h1V642.2h1V642.2h1V642.6h1V645.2h1V644.1h1V645.5h1V641.9h1V642.1h1V643.9h1V644.5h1V643.6h1V643.7h1V644.1h1V643.5h1V645.4h1V642.7h1V641.4h1V642.5h1V644.5h1V644.1h1V642.6h1V643.2h1V644.5h1V644.6h1V644.2h1V643.8h1V643.5h1V644.0h1V643.3h1V644.1h1V638.3h1V640.9h1V642.9h1V644.4h1V645.1h1V645.5h1V644.1h1V643.9h1V644.4h1V644.6h1V643.6h1V642.1h1V642.9h1V644.3h1V644.2h1V643.4h1V644.2h1V645.2h1V644.8h1V642.3h1V643.6h1V642.5h1V640.8h1V641.3h1V642.4h1V643.4h1V643.8h1V643.5h1V644.5h1V645.5h1V644.3h1V644.8h1V643.6h1V643.6h1V643.2h1V644.8h1V643.2h1V642.3h1V643.2h1V644.3h1V643.9h1V636.4h1V643.5h1V644.2h1V644.9h1V645.0h1V643.8h1V644.4h1V643.0h1V643.9h1V643.9h1V643.5h1V642.8h1V644.0h1V644.6h1V642.1h1V642.7h1V645.0h1V644.3h1V642.6h1V640.4h1V643.8h1V644.1h1V643.0h1V643.4h1V642.5h1V644.8h1V643.1h1V641.5h1V644.5h1V645.0h1V642.8h1V643.1h1V644.0h1V645.2h1V643.1h1V644.3h1V645.1h1V642.3h1V640.2h1V643.2h1V643.7h1V643.0h1V645.5h1V642.6h1V642.2h1V642.5h1V645.3h1V645.5h1V643.0h1V645.5h1V643.9h1V643.2h1V643.2h1V643.2h1V642.3h1V642.0h1V644.5h1V643.3h1V644.5h1V642.8h1V644.8h1V644.4h1V640.7h1V643.5h1V640.7h1V644.1h1V644.6h1V644.2h1V644.1h1V644.1h1V644.5h1V642.2h1V644.0h1V641.7h1V645.2h1V644.6h1V644.2h1V644.9h1V644.3h1V645.1h1V644.5h1V645.1h1V645.0h1V642.8h1V643.1h1V644.0h1V643.7h1V642.5h1V641.5h1V643.1h1V644.7h1V644.1h1V644.9h1V644.2h1V645.3h1V644.0h1V629.6h1V642.6h1V643.3h1V643.7h1V643.6h1V643.7h1V644.6h1V643.2h1V641.4h1V643.1h1V643.9h1V644.8h1V644.7h1V643.4h1V643.2h1V643.1h1V644.5h1V642.6h1V644.6h1V644.8h1V641.1h1V644.8h1V643.9h1V645.0h1V645.2h1V643.5h1V642.8h1V640.9h1V643.3h1V644.3h1V642.5h1V641.5h1V642.6h1V644.0h1V643.3h1V641.5h1V642.8h1V644.3h1V643.9h1V641.3h1V640.6h1V642.8h1V644.6h1V645.3h1V643.0h1V642.9h1V644.7h1V643.8h1V644.5h1V644.6h1V644.1h1V641.4h1V641.5h1V643.8h1V643.9h1V640.8h1V643.5h1V643.8h1V645.2h1V643.8h1V641.8h1V643.6h1V645.4h1V639.7h1V644.5h1V642.1h1V644.3h1V642.4h1V640.2h1V642.8h1V644.2h1V643.9h1V644.7h1V643.9h1V644.2h1V642.6h1V641.7h1V641.1h1V643.7h1V644.1h1V644.8h1V644.8h1V644.4h1V644.4h1V643.7h1V643.1h1V645.0h1V643.5h1V644.2h1V644.2h1V644.3h1V642.8h1V642.6h1V645.0h1V643.8h1V644.7h1V644.2h1V643.5h1V644.7h1V643.0h1V644.6h1V643.8h1V644.3h1V643.7h1V642.9h1V644.7h1V643.6h1V643.5h1V645.1h1V643.9h1V642.8h1V641.1h1V643.0h1V643.1h1V643.7h1V643.3h1V645.1h1V644.3h1V644.6h1V643.5h1V644.9h1V643.9h1V643.7h1V644.3h1V642.1h1V642.2h1V642.5h1V643.8h1V644.5h1V643.3h1V644.2h1V644.4h1V640.5h1V644.3h1V645.0h1V644.0h1V644.9h1V644.5h1V644.2h1V644.7h1V645.3h1V644.7h1V643.8h1V643.0h1V643.2h1V643.1h1V644.7h1V643.5h1V642.6h1V643.5h1V642.2h1V642.6h1V644.0h1V644.7h1V645.4h1V645.2h1V645.0h1V643.9h1V644.4h1V643.2h1V644.9h1V642.0h1V642.1h1V642.9h1V643.1h1V641.9h1V642.0h1V642.3h1V643.1h1V643.3h1V644.5h1V645.2h1V644.3h1V644.9h1V642.7h1V644.5h1V643.9h1V642.4h1V643.1h1V642.8h1V641.7h1V641.9h1V645.2h1V644.6h1V644.1h1V643.6h1V644.8h1V640.0h1V643.7h1V643.1h1V643.6h1V644.9h1V644.7h1V643.4h1V642.7h1V643.9h1V643.3h1V644.9h1V645.1h1V645.1h1V645.0h1V644.8h1V642.9h1V643.7h1V644.4h1V643.4h1V643.4h1V645.0h1V643.0h1V642.5h1V645.1h1V644.7h1V644.3h1V644.2h1V644.0h1V642.1h1V644.1h1V644.8h1V641.6h1V641.2h1V644.7h1V640.6h1V644.0h1V644.7h1V645.0h1V645.0h1V641.4h1V643.5h1V643.3h1V645.3h1V643.9h1V642.9h1V644.4h1V644.1h1V644.2h1V644.8h1V643.8h1V643.9h1V643.2h1V640.7h1V642.7h1V644.6h1V644.5h1V644.5h1V645.0h1V644.2h1V645.0h1V645.3h1V638.5h1V644.5h1V643.2h1V643.9h1V645.1h1V643.4h1V644.4h1V642.9h1V641.7h1V642.2h1V644.6h1V643.6h1V643.8h1V645.1h1V644.8h1V644.2h1V645.2h1V643.7h1V643.3h1V643.1h1V645.1h1V644.9h1V643.7h1V643.7h1V645.2h1V643.1h1V645.1h1V644.7h1V645.1h1V643.8h1V644.5h1V643.3h1V641.5h1V642.9h1V645.2h1V643.5h1V644.7h1V644.3h1V643.6h1V642.8h1V643.9h1V643.5h1V643.6h1V645.1h1V644.0h1V644.7h1V643.0h1V645.1h1V645.0h1V643.8h1V642.7h1V644.9h1V642.5h1V644.1h1V643.9h1V643.7h1V644.6h1V643.8h1V642.2h1V645.5h1V643.4h1V644.3h1V643.8h1V643.4h1V643.4h1V643.7h1V644.3h1V644.4h1V642.7h1V643.2h1V644.8h1V642.4h1V640.9h1V643.5h1V643.0h1V641.3h1V641.1h1V642.6h1V644.3h1V644.5h1V644.3h1V642.8h1V644.7h1V643.6h1V640.4h1V642.0h1V644.2h1V643.6h1V644.8h1V645.0h1V643.6h1V641.4h1V640.5h1V643.2h1V644.6h1V644.7h1V641.7h1V643.1h1V644.0h1V644.6h1V644.9h1V643.4h1V644.0h1V644.5h1V642.9h1V645.5h1V644.3h1V643.3h1V645.0h1V644.4h1V644.5h1V645.4h1V644.1h1V643.2h1V644.4h1V644.4h1V642.3h1V641.7h1V640.7h1V644.0h1V645.4h1V643.2h1V644.6h1V643.4h1V645.0h1V643.8h1V643.7h1V645.3h1V645.4h1V643.9h1V642.9h1V641.3h1V644.2h1V645.2h1V643.0h1V641.9h1V644.6h1V645.1h1V644.7h1V644.4h1V644.8h1V644.0h1V644.4h1V645.4h1V644.4h1V643.7h1V643.3h1V643.0h1V642.9h1V644.5h1V644.6h1V642.8h1V643.4h1V643.5h1V644.9h1V642.5h1V645.2h1V644.9h1V643.7h1V644.0h1V643.0h1V642.8h1V643.4h1V644.4h1V644.5h1V643.6h1V643.0h1V643.3h1V643.8h1V644.7h1V644.0h1V644.4h1V642.2h1V644.6h1V642.4h1V643.1h1V645.3h1V645.2h1V643.7h1V642.8h1V643.8h1V644.2h1V642.6h1V643.0h1V644.0h1V644.1h1V644.4h1V644.4h1V643.9h1V644.8h1V644.5h1V642.6h1V644.1h1V643.5h1V645.4h1V644.2h1V644.5h1V643.5h1V642.9h1V643.2h1V643.5h1V644.3h1V643.6h1V644.6h1V643.2h1V642.6h1V645.0h1V643.8h1V644.2h1V643.2h1V642.5h1V644.9h1V643.5h1V642.2h1V644.6h1V642.2h1V643.3h1V643.6h1V640.6h1V642.7h1V641.3h1V642.8h1V642.0h1V644.1h1V643.2h1V643.5h1V642.4h1V645.0h1V643.4h1V644.4h1V644.6h1V643.8h1V641.8h1V643.8h1V644.8h1V643.4h1V645.0h1V643.9h1V642.6h1V639.3h1V641.8h1V643.6h1V639.2h1V641.3h1V641.6h1V642.4h1V644.8h1V645.1h1V644.8h1V645.3h1V643.8h1V644.4h1V644.0h1V658.6h-1V659.5h-1V660.1h-1V659.6h-1V659.8h-1V659.0h-1V658.8h-1V658.9h-1V660.2h-1V657.7h-1V658.2h-1V657.5h-1V658.6h-1V658.6h-1V658.3h-1V658.2h-1V659.5h-1V660.9h-1V661.6h-1V660.1h-1V659.7h-1V660.4h-1V658.0h-1V657.4h-1V658.1h-1V661.7h-1V660.0h-1V658.0h-1V658.8h-1V659.7h-1V658.2h-1V658.1h-1V657.8h-1V657.8h-1V657.9h-1V658.5h-1V658.5h-1V658.7h-1V658.6h-1V659.5h-1V658.1h-1V658.5h-1V659.9h-1V660.2h-1V658.5h-1V658.7h-1V658.7h-1V658.7h-1V660.5h-1V663.5h-1V661.7h-1V660.2h-1V657.6h-1V660.9h-1V657.7h-1V661.0h-1V659.8h-1V659.6h-1V662.1h-1V659.8h-1V660.0h-1V659.5h-1V659.3h-1V659.4h-1V659.2h-1V664.3h-1V661.3h-1V660.1h-1V658.8h-1V658.0h-1V663.7h-1V658.4h-1V659.6h-1V660.5h-1V660.1h-1V661.0h-1V659.9h-1V658.0h-1V657.9h-1V658.0h-1V657.8h-1V659.2h-1V659.1h-1V661.2h-1V661.1h-1V658.5h-1V659.7h-1V657.8h-1V659.4h-1V659.2h-1V658.2h-1V660.1h-1V660.2h-1V658.2h-1V658.4h-1V659.5h-1V658.0h-1V659.7h-1V658.7h-1V659.6h-1V657.5h-1V662.7h-1V662.7h-1V659.6h-1V659.3h-1V658.0h-1V659.3h-1V659.4h-1V659.9h-1V660.8h-1V659.4h-1V658.0h-1V660.3h-1V659.0h-1V657.7h-1V659.4h-1V659.2h-1V659.0h-1V661.7h-1V659.0h-1V661.1h-1V660.0h-1V659.3h-1V658.4h-1V657.9h-1V660.3h-1V661.7h-1V660.7h-1V658.1h-1V659.6h-1V658.9h-1V662.3h-1V660.7h-1V659.4h-1V658.4h-1V660.0h-1V659.1h-1V659.9h-1V659.1h-1V658.4h-1V658.2h-1V660.1h-1V660.9h-1V660.2h-1V659.1h-1V660.7h-1V664.1h-1V660.6h-1V660.1h-1V659.6h-1V658.5h-1V659.3h-1V659.7h-1V661.0h-1V658.3h-1V658.4h-1V658.0h-1V657.4h-1V660.6h-1V661.6h-1V659.3h-1V657.8h-1V659.5h-1V660.5h-1V659.1h-1V658.0h-1V660.1h-1V658.2h-1V659.7h-1V658.3h-1V659.7h-1V659.7h-1V659.1h-1V660.6h-1V657.8h-1V660.3h-1V659.3h-1V657.5h-1V658.8h-1V657.8h-1V659.7h-1V660.4h-1V658.8h-1V657.8h-1V658.0h-1V659.0h-1V657.7h-1V659.4h-1V662.9h-1V659.2h-1V659.6h-1V659.2h-1V660.3h-1V660.1h-1V657.9h-1V659.0h-1V659.3h-1V658.4h-1V658.8h-1V659.7h-1V660.6h-1V657.7h-1V658.4h-1V658.2h-1V657.4h-1V658.5h-1V658.5h-1V658.5h-1V659.0h-1V658.8h-1V659.5h-1V657.8h-1V659.0h-1V657.8h-1V657.4h-1V660.5h-1V662.4h-1V667.1h-1V659.9h-1V660.7h-1V659.6h-1V658.8h-1V658.2h-1V660.1h-1V658.5h-1V658.1h-1V660.6h-1V663.7h-1V658.1h-1V659.1h-1V659.5h-1V658.2h-1V657.8h-1V658.0h-1V659.5h-1V659.9h-1V658.6h-1V660.7h-1V660.5h-1V659.0h-1V659.5h-1V658.0h-1V658.0h-1V658.7h-1V659.1h-1V658.0h-1V659.0h-1V660.5h-1V658.8h-1V660.8h-1V661.7h-1V660.8h-1V659.0h-1V658.6h-1V659.5h-1V661.6h-1V659.0h-1V657.4h-1V658.8h-1V659.5h-1V660.2h-1V659.0h-1V657.3h-1V657.9h-1V657.4h-1V659.8h-1V658.4h-1V658.4h-1V659.3h-1V658.0h-1V658.3h-1V659.8h-1V660.8h-1V661.8h-1V661.2h-1V658.6h-1V661.6h-1V661.4h-1V658.9h-1V659.8h-1V657.7h-1V659.6h-1V660.0h-1V659.4h-1V659.1h-1V659.7h-1V659.0h-1V661.3h-1V660.4h-1V658.1h-1V659.4h-1V658.2h-1V657.6h-1V658.0h-1V659.1h-1V660.7h-1V658.3h-1V660.1h-1V661.4h-1V659.8h-1V658.2h-1V658.7h-1V659.4h-1V658.1h-1V660.9h-1V659.6h-1V659.6h-1V658.2h-1V659.1h-1V659.2h-1V659.9h-1V659.1h-1V658.9h-1V658.2h-1V661.1h-1V660.7h-1V657.6h-1V658.1h-1V661.8h-1V660.0h-1V657.9h-1V659.2h-1V658.4h-1V658.4h-1V659.9h-1V660.8h-1V658.6h-1V661.2h-1V660.0h-1V658.5h-1V660.4h-1V662.8h-1V659.3h-1V658.3h-1V659.3h-1V660.1h-1V660.1h-1V658.1h-1V657.9h-1V660.8h-1V661.1h-1V660.2h-1V657.7h-1V660.0h-1V661.3h-1V658.4h-1V659.1h-1V658.7h-1V659.7h-1V659.9h-1V658.2h-1V659.4h-1V658.8h-1V658.0h-1V659.1h-1V660.2h-1V660.8h-1V661.1h-1V657.9h-1V658.3h-1V659.9h-1V660.1h-1V659.6h-1V664.0h-1V660.6h-1V662.0h-1V658.0h-1V660.1h-1V659.0h-1V659.3h-1V659.2h-1V658.0h-1V658.7h-1V658.1h-1V658.8h-1V661.2h-1V659.1h-1V663.4h-1V659.5h-1V658.7h-1V657.8h-1V658.9h-1V658.2h-1V658.5h-1V658.3h-1V658.4h-1V658.0h-1V659.8h-1V660.4h-1V659.4h-1V661.7h-1V658.1h-1V659.9h-1V660.6h-1V658.1h-1V658.9h-1V659.3h-1V661.8h-1V657.8h-1V659.3h-1V658.9h-1V658.1h-1V658.5h-1V657.5h-1V659.1h-1V659.8h-1V658.3h-1V657.7h-1V658.6h-1V657.7h-1V658.0h-1V660.5h-1V661.2h-1V658.2h-1V661.5h-1V660.6h-1V658.1h-1V659.3h-1V658.7h-1V659.9h-1V659.7h-1V660.9h-1V660.9h-1V659.9h-1V657.8h-1V658.6h-1V659.3h-1V659.2h-1V658.5h-1V658.9h-1V658.8h-1V658.2h-1V658.7h-1V658.7h-1V658.6h-1V657.9h-1V661.1h-1V659.2h-1V659.8h-1V658.9h-1V657.4h-1V658.2h-1V658.3h-1V659.2h-1V660.0h-1V658.6h-1V658.6h-1V658.6h-1V658.1h-1V659.2h-1V658.6h-1V659.1h-1V658.4h-1V661.3h-1V662.1h-1V660.7h-1V659.4h-1V659.3h-1V660.0h-1V658.2h-1V658.7h-1V659.0h-1V659.1h-1V658.7h-1V662.7h-1V662.4h-1V659.5h-1V658.4h-1V659.1h-1V662.2h-1V659.6h-1V657.9h-1V658.6h-1V658.7h-1V658.0h-1V657.8h-1V659.3h-1V659.8h-1V658.0h-1V658.2h-1V659.7h-1V661.4h-1V659.1h-1V658.3h-1V658.5h-1V658.1h-1V660.4h-1V661.5h-1V658.1h-1V659.5h-1V659.0h-1V659.7h-1V660.9h-1V660.5h-1V658.9h-1V658.4h-1V658.3h-1V658.1h-1V659.3h-1V657.9h-1V658.7h-1V658.0h-1V659.6h-1V660.5h-1V660.6h-1V657.8h-1V659.3h-1V659.1h-1V659.1h-1V658.8h-1V658.8h-1V658.4h-1V659.3h-1V659.3h-1V659.0h-1V658.0h-1V658.6h-1V659.3h-1V660.0h-1V657.8h-1V659.4h-1V658.3h-1V660.2h-1V658.2h-1V660.7h-1V660.2h-1V660.8h-1V659.5h-1V658.9h-1V658.1h-1V659.5h-1V660.0h-1V658.0h-1V657.7h-1V659.2h-1V659.6h-1V657.5h-1V658.7h-1V658.0h-1V660.6h-1V658.6h-1V660.8h-1V660.7h-1V658.3h-1V657.4h-1V661.0h-1V658.9h-1V657.6h-1V658.8h-1V659.2h-1V659.3h-1V659.0h-1V658.1h-1V663.8h-1V659.0h-1V660.5h-1V659.2h-1V666.7h-1V659.1h-1V657.9h-1V659.0h-1V659.3h-1V660.5h-1V659.8h-1V657.4h-1V657.9h-1V661.0h-1V659.8h-1V658.3h-1V659.2h-1V657.9h-1V657.7h-1V659.8h-1V659.4h-1V664.7h-1V658.5h-1V659.1h-1V659.3h-1V659.4h-1V661.6h-1V658.0h-1V660.0h-1V661.1h-1V660.3h-1V658.4h-1V660.5h-1V660.6h-1V659.3h-1V659.7h-1V660.0h-1V659.1h-1V660.0h-1V658.2h-1V658.6h-1V658.0h-1V658.2h-1V659.6h-1V659.8h-1V661.7h-1V659.5h-1V657.9h-1V658.3h-1V659.4h-1V659.2h-1V658.5h-1V657.6h-1V658.9h-1V660.4h-1V659.4h-1V658.0h-1V657.8h-1V660.6h-1V660.6h-1V658.0h-1V660.1h-1V662.1h-1V660.8h-1V660.3h-1V660.5h-1V659.4h-1V658.9h-1V660.1h-1V659.5h-1V660.3h-1V659.1h-1V658.2h-1V657.5h-1V658.1h-1V659.8h-1V657.6h-1V658.3h-1V658.4h-1V659.9h-1V658.3h-1V658.3h-1V659.2h-1V660.1h-1V659.5h-1V658.3h-1V658.9h-1V659.8h-1V660.7h-1V659.5h-1V660.8h-1V659.9h-1V657.4h-1V657.6h-1V658.2h-1V660.0h-1V657.6h-1V663.4h-1V659.3h-1V658.6h-1V658.2h-1V657.8h-1V658.5h-1V657.9h-1V659.7h-1V658.1h-1V657.9h-1V658.2h-1V659.6h-1V659.1h-1V658.7h-1V660.1h-1V658.2h-1V658.6h-1V657.5h-1V659.9h-1V657.6h-1V661.3h-1V660.7h-1V658.7h-1V657.8h-1V658.8h-1V659.5h-1V657.9h-1V660.6h-1V660.5h-1V658.3h-1V657.2h-1V659.6h-1V660.4h-1V657.6h-1V658.5h-1V659.7h-1V658.3h-1V660.2h-1V659.1h-1V660.2h-1V660.1h-1V657.9h-1V657.7h-1V657.7h-1V658.5h-1V657.5h-1V661.0h-1V661.0h-1V660.6h-1V660.7h-1V659.6h-1V660.4h-1V659.5h-1V658.9h-1V658.5h-1V658.4h-1V657.8h-1V658.5h-1V657.7h-1V658.9h-1V658.8h-1V659.1h-1V658.5h-1V660.4h-1V660.3h-1V658.4h-1V658.0h-1V658.2h-1V661.4h-1V657.5h-1V657.9h-1V658.0h-1V659.6h-1V658.8h-1V657.8h-1V658.4h-1V658.9h-1V658.5h-1V658.3h-1V658.8h-1V658.0h-1V659.4h-1V660.0h-1V661.6h-1V657.6h-1V659.5h-1V657.9h-1V658.2h-1V657.9h-1V658.1h-1V660.1h-1V660.3h-1V657.5h-1V659.6h-1V659.6h-1V658.2h-1V659.0h-1V660.4h-1V658.1h-1V658.1h-1V657.8h-1V658.4h-1V658.1h-1V657.9h-1V658.8h-1V661.0h-1V660.9h-1V659.8h-1V659.9h-1V657.7h-1V659.5h-1V658.4h-1V661.3h-1V663.3h-1V663.2h-1V661.6h-1V661.5h-1V659.3h-1V659.3h-1V659.9h-1V662.0h-1V660.4h-1V661.2h-1V657.8h-1V659.7h-1V660.3h-1V658.7h-1V657.9h-1V659.0h-1V660.4h-1V662.0h-1V664.4h-1V658.0h-1V657.6h-1V658.7h-1V657.5h-1V659.6h-1V659.8h-1V659.1h-1V660.4h-1V661.4h-1V658.8h-1V658.9h-1V658.4h-1V659.3h-1V659.5h-1V658.4h-1V658.0h-1V657.4h-1V660.2h-1V660.9h-1V660.3h-1V658.9h-1V658.9h-1V659.8h-1V659.2h-1V658.9h-1V661.6h-1V660.8h-1V659.4h-1V658.5h-1V657.7h-1V658.2h-1V657.8h-1V658.2h-1V661.0h-1V660.1h-1V661.8h-1V658.4h-1V658.7h-1V659.0h-1V658.1h-1V660.7h-1V657.9h-1V660.3h-1V659.6h-1V659.2h-1V658.7h-1V657.5h-1V659.7h-1V659.7h-1V659.6h-1V658.0h-1V658.2h-1V658.8h-1V660.3h-1V658.6h-1V658.7h-1V659.1h-1V658.9h-1V659.0h-1V659.4h-1V660.0h-1V657.8h-1V660.2h-1V660.9h-1V658.5h-1V659.9h-1V658.8h-1V659.5h-1V659.4h-1V661.0h-1V664.2h-1V659.3h-1V658.6h-1V660.2h-1V660.2h-1V659.8h-1V658.0h-1V659.6h-1V659.4h-1V659.4h-1V661.1h-1V659.5h-1V659.1h-1V658.0h-1V658.6h-1V660.8h-1V661.7h-1V661.2h-1V660.5h-1V660.2h-1V658.5h-1V659.2h-1V659.1h-1V658.9h-1V658.2h-1V658.0h-1V658.5h-1V658.8h-1V658.9h-1V657.9h-1V658.2h-1V658.2h-1V657.7h-1V659.4h-1V658.4h-1V658.5h-1V659.7h-1V658.6h-1V658.8h-1V659.0h-1V658.4h-1V657.8h-1V657.9h-1V658.3h-1V659.1h-1V660.8h-1V659.7h-1V664.8h-1V659.3h-1V661.0h-1V659.2h-1V665.9h-1V660.6h-1V658.5h-1V659.8h-1V659.4h-1V658.9h-1V658.1h-1V661.0h-1V658.9h-1V658.2h-1V664.2h-1V658.2h-1V659.4h-1V658.6h-1V658.4h-1V660.6h-1V660.7h-1V658.0h-1V659.0h-1V659.6h-1V660.1h-1V659.3h-1V658.2h-1V659.5h-1V658.7h-1V658.5h-1V658.5h-1V658.1h-1V659.7h-1V660.3h-1V659.5h-1V658.8h-1V658.6h-1V658.6h-1V658.3h-1V659.2h-1V657.6h-1V658.3h-1V659.9h-1V658.4h-1V658.6h-1V657.9h-1V659.3h-1V659.4h-1V659.1h-1V658.8h-1V658.4h-1V657.9h-1V658.1h-1V659.0h-1V658.0h-1V658.6h-1V660.5h-1V658.6h-1V659.0h-1V659.2h-1V657.9h-1V659.5h-1V662.2h-1V659.1h-1V658.6h-1V659.3h-1V658.1h-1V658.5h-1V658.5h-1V659.3h-1V658.1h-1V658.7h-1V658.2h-1V657.9h-1V658.3h-1V658.2h-1V660.7h-1V659.4h-1V659.6h-1V661.8h-1V661.4h-1V659.2h-1V659.6h-1V660.1h-1V659.3h-1V660.0h-1V659.1h-1V658.2h-1V658.9h-1V659.7h-1V660.7h-1V659.6h-1V659.9h-1V660.7h-1V658.5h-1V658.2h-1V658.1h-1V664.4h-1V659.3h-1V658.3h-1V658.2h-1V658.1h-1V657.6h-1V659.1h-1V658.5h-1V658.5h-1V658.1h-1V658.3h-1V659.3h-1V660.4h-1V658.5h-1V659.1h-1V659.3h-1V660.6h-1V659.3h-1V657.4h-1V658.6h-1V659.1h-1V658.5h-1V658.5h-1V659.5h-1V659.3h-1V657.6h-1V660.1h-1V659.7h-1V657.5h-1V660.3h-1V658.1h-1V660.1h-1V657.9h-1V657.8h-1V667.3h-1V659.8h-1V658.6h-1V661.4h-1V661.0h-1V658.2h-1V661.5h-1V659.7h-1V660.7h-1V662.9h-1V661.2h-1V658.8h-1V664.7h-1V659.1h-1V659.0h-1V660.2h-1V660.7h-1V658.0h-1V658.5h-1V660.4h-1V663.4h-1V660.8h-1V658.4h-1V659.9h-1V658.5h-1V658.1h-1V657.7h-1V659.7h-1V659.6h-1V658.3h-1V658.7h-1V661.6h-1V660.4h-1V662.9h-1V661.2h-1V659.8h-1V658.8h-1V659.1h-1V657.5h-1V659.7h-1V661.1h-1V659.5h-1V658.8h-1V658.4h-1V660.7h-1V657.9h-1V661.8h-1V659.9h-1V658.0h-1V658.8h-1V658.2h-1V657.7h-1V658.5h-1V658.7h-1V658.3h-1V660.3h-1V658.9h-1V659.2h-1V658.9h-1V658.4h-1V657.6h-1V657.3h-1V657.3h-1V658.2h-1V660.9h-1V661.2h-1V660.0h-1V660.3h-1V658.1h-1V659.5h-1V658.9h-1V660.3h-1V658.6h-1V661.0h-1V658.1h-1V658.0h-1V658.4h-1V658.1h-1V659.2h-1V660.2h-1V659.2h-1V659.4h-1V658.3h-1V658.1h-1V659.1h-1V657.3h-1V658.4h-1V658.5h-1V660.1h-1V658.0h-1V658.8h-1V660.3h-1V660.5h-1V660.1h-1V658.8h-1V658.7h-1V658.6h-1V658.7h-1V657.9h-1V659.1h-1V657.6h-1V660.7h-1V659.9h-1V660.7h-1V660.3h-1V658.3h-1V659.1h-1V657.6h-1V658.6h-1V661.6h-1V658.8h-1V657.9h-1V657.8h-1V658.5h-1V658.2h-1V658.0h-1V659.5h-1V659.6h-1V660.0h-1V658.3h-1V659.6h-1V659.4h-1V659.6h-1V658.1h-1V659.3h-1V659.5h-1V660.1h-1V660.4h-1V657.6h-1V658.8h-1V661.7h-1V659.9h-1V658.5h-1V658.9h-1V659.3h-1V661.9h-1V661.5h-1V660.1h-1V659.5h-1V659.9h-1V659.9h-1V658.2h-1V657.7h-1V659.4h-1V658.5h-1V658.8h-1Z" fill="#ffff00"/>
<path d="M220 435.9h1V437.9h1V436.0h1V433.8h1V444.9h1V432.4h1V435.3h1V432.6h1V442.4h1V437.7h1V422.2h1V433.5h1V437.9h1V438.5h1V440.8h1V436.9h1V437.7h1V435.6h1V440.6h1V441.4h1V436.2h1V441.1h1V441.0h1V441.0h1V432.1h1V434.7h1V446.1h1V436.6h1V436.1h1V443.3h1V438.3h1V441.0h1V444.8h1V443.2h1V443.8h1V445.4h1V440.5h1V445.9h1V442.6h1V455.1h1V450.1h1V459.4h1V466.3h1V473.3h1V480.7h1V485.9h1V488.4h1V490.4h1V493.0h1V492.5h1V494.1h1V499.8h1V500.0h1V502.3h1V504.3h1V505.5h1V508.3h1V509.1h1V512.1h1V513.9h1V513.8h1V515.9h1V515.6h1V515.1h1V518.3h1V518.4h1V519.8h1V520.0h1V521.9h1V523.4h1V520.9h1V524.2h1V524.7h1V523.8h1V524.9h1V525.8h1V526.7h1V525.9h1V525.4h1V526.5h1V529.0h1V530.0h1V529.4h1V529.4h1V531.9h1V531.7h1V531.5h1V532.0h1V532.0h1V533.0h1V528.7h1V532.9h1V532.8h1V531.0h1V533.7h1V529.5h1V534.6h1V534.9h1V533.5h1V533.2h1V536.3h1V533.8h1V532.7h1V533.7h1V536.0h1V536.4h1V537.0h1V536.0h1V535.7h1V535.7h1V535.4h1V537.5h1V537.8h1V535.8h1V535.3h1V535.8h1V535.1h1V533.1h1V535.5h1V535.7h1V536.3h1V532.6h1V537.4h1V537.1h1V533.9h1V536.8h1V537.2h1V537.2h1V537.0h1V536.3h1V538.6h1V537.4h1V538.5h1V537.6h1V536.9h1V536.3h1V539.4h1V538.8h1V538.0h1V537.3h1V535.2h1V538.6h1V537.7h1V538.6h1V539.6h1V539.4h1V537.3h1V540.1h1V537.3h1V539.9h1V538.9h1V537.8h1V538.7h1V539.5h1V537.1h1V540.8h1V538.4h1V541.2h1V539.0h1V540.4h1V536.3h1V541.4h1V540.4h1V540.7h1V539.3h1V541.4h1V540.1h1V538.1h1V541.0h1V539.2h1V535.5h1V541.1h1V538.1h1V436.3h1V434.4h1V434.3h1V436.1h1V434.8h1V434.8h1V439.0h1V435.1h1V431.4h1V434.6h1V427.5h1V440.0h1V434.7h1V431.8h1V437.5h1V447.5h1V436.9h1V439.9h1V435.8h1V432.1h1V440.1h1V439.1h1V440.4h1V441.6h1V436.9h1V435.3h1V438.7h1V444.6h1V441.1h1V442.1h1V443.6h1V443.6h1V444.2h1V446.9h1V445.4h1V443.8h1V446.9h1V449.4h1V463.4h1V458.8h1V461.7h1V465.6h1V464.8h1V471.8h1V468.0h1V465.5h1V468.2h1V473.7h1V470.8h1V464.8h1V457.8h1V451.2h1V443.4h1V438.8h1V438.0h1V439.2h1V445.8h1V442.6h1V443.7h1V443.2h1V439.9h1V438.7h1V445.5h1V442.7h1V439.9h1V445.9h1V443.2h1V441.0h1V438.3h1V443.4h1V437.7h1V437.1h1V441.0h1V442.0h1V443.6h1V438.4h1V438.5h1V443.8h1V448.5h1V447.8h1V447.0h1V445.5h1V446.5h1V445.5h1V445.7h1V450.4h1V447.4h1V448.9h1V460.5h1V448.4h1V452.2h1V447.6h1V448.5h1V449.1h1V461.1h1V466.2h1V461.8h1V468.7h1V467.5h1V468.0h1V467.6h1V471.9h1V466.1h1V469.9h1V471.1h1V473.8h1V472.8h1V471.0h1V469.2h1V471.3h1V472.5h1V474.2h1V472.4h1V475.5h1V475.2h1V470.6h1V474.2h1V473.5h1V473.0h1V475.9h1V476.0h1V478.7h1V475.5h1V475.1h1V475.6h1V477.1h1V476.9h1V477.4h1V479.3h1V476.0h1V476.7h1V476.2h1V478.3h1V480.1h1V479.0h1V479.3h1V478.9h1V479.7h1V477.3h1V479.7h1V480.2h1V481.1h1V479.7h1V481.2h1V480.8h1V479.3h1V481.1h1V482.2h1V482.5h1V482.4h1V480.3h1V482.8h1V480.7h1V479.2h1V482.2h1V480.7h1V481.3h1V480.7h1V482.7h1V484.3h1V477.7h1V480.7h1V477.8h1V483.6h1V482.2h1V483.9h1V483.7h1V482.1h1V482.6h1V483.8h1V484.6h1V483.0h1V481.1h1V482.9h1V485.3h1V483.6h1V482.5h1V480.9h1V485.9h1V485.3h1V483.5h1V485.8h1V483.1h1V486.4h1V487.2h1V486.2h1V484.6h1V486.1h1V487.1h1V480.8h1V488.8h1V487.4h1V486.7h1V484.8h1V484.5h1V487.7h1V487.1h1V484.9h1V486.5h1V489.5h1V486.2h1V486.7h1V485.7h1V490.1h1V486.7h1V487.1h1V483.2h1V484.3h1V490.7h1V490.5h1V488.9h1V481.4h1V487.6h1V490.1h1V486.0h1V490.7h1V489.2h1V488.2h1V490.8h1V487.2h1V492.6h1V491.0h1V489.4h1V486.7h1V485.5h1V487.3h1V490.7h1V493.0h1V490.2h1V492.4h1V490.5h1V491.8h1V492.7h1V492.1h1V491.4h1V489.5h1V489.1h1V492.7h1V490.4h1V490.0h1V491.3h1V493.6h1V493.3h1V493.2h1V492.6h1V495.0h1V494.4h1V494.2h1V494.4h1V495.5h1V493.2h1V488.2h1V493.7h1V496.2h1V494.9h1V496.1h1V496.1h1V494.8h1V494.9h1V496.1h1V496.6h1V495.5h1V494.2h1V493.7h1V487.0h1V494.0h1V497.1h1V496.3h1V490.0h1V496.9h1V496.6h1V494.5h1V492.5h1V493.9h1V497.9h1V497.2h1V497.7h1V497.7h1V494.2h1V497.1h1V496.3h1V497.1h1V498.1h1V498.2h1V496.9h1V497.7h1V498.1h1V497.7h1V495.0h1V498.0h1V495.9h1V496.4h1V492.1h1V499.0h1V500.2h1V498.4h1V495.7h1V497.4h1V497.3h1V499.2h1V499.9h1V500.0h1V500.4h1V498.8h1V498.5h1V499.7h1V498.9h1V498.8h1V500.3h1V498.6h1V500.6h1V497.8h1V502.0h1V495.8h1V496.5h1V497.0h1V496.8h1V498.5h1V503.1h1V500.1h1V501.3h1V501.9h1V501.4h1V499.7h1V500.9h1V499.6h1V499.2h1V500.8h1V501.2h1V502.9h1V501.5h1V501.0h1V502.6h1V501.5h1V500.9h1V502.9h1V502.5h1V502.7h1V503.6h1V503.7h1V503.6h1V503.3h1V502.1h1V504.8h1V502.8h1V503.2h1V501.4h1V499.7h1V499.2h1V503.0h1V503.4h1V504.2h1V502.5h1V503.3h1V504.2h1V503.8h1V503.3h1V503.6h1V500.2h1V505.3h1V506.0h1V502.8h1V504.0h1V506.0h1V503.9h1V503.6h1V506.8h1V503.5h1V503.4h1V504.8h1V506.7h1V504.4h1V506.6h1V501.7h1V506.3h1V506.6h1V503.1h1V504.2h1V501.1h1V506.2h1V504.1h1V507.3h1V500.4h1V509.2h1V507.8h1V508.0h1V507.5h1V500.6h1V508.5h1V502.9h1V504.9h1V508.9h1V506.9h1V507.5h1V506.8h1V503.4h1V507.2h1V509.1h1V508.0h1V510.1h1V508.2h1V507.7h1V507.6h1V509.1h1V509.0h1V508.8h1V509.5h1V510.0h1V511.0h1V510.6h1V509.7h1V508.4h1V507.7h1V507.5h1V509.4h1V508.7h1V510.6h1V509.8h1V511.5h1V509.2h1V510.8h1V503.4h1V510.5h1V510.9h1V510.9h1V510.2h1V508.7h1V511.4h1V508.2h1V510.6h1V508.7h1V510.8h1V511.4h1V506.1h1V508.9h1V512.7h1V509.9h1V511.3h1V511.2h1V509.6h1V506.7h1V512.0h1V511.0h1V511.4h1V512.3h1V509.5h1V506.9h1V507.0h1V508.4h1V512.1h1V513.4h1V512.8h1V514.6h1V515.4h1V515.4h1V516.4h1V517.0h1V519.6h1V521.7h1V521.1h1V519.9h1V521.8h1V523.0h1V522.2h1V523.0h1V523.3h1V523.8h1V526.3h1V521.9h1V524.2h1V526.4h1V522.5h1V522.9h1V520.7h1V521.5h1V520.0h1V523.3h1V524.5h1V522.5h1V522.9h1V523.9h1V525.2h1V526.3h1V524.6h1V523.9h1V524.5h1V526.8h1V525.2h1V524.7h1V526.4h1V522.8h1V522.0h1V523.5h1V526.0h1V527.2h1V526.2h1V523.1h1V525.6h1V521.0h1V520.1h1V523.6h1V522.1h1V527.4h1V525.6h1V526.9h1V526.0h1V525.7h1V524.7h1V525.9h1V526.1h1V526.4h1V524.2h1V528.0h1V522.5h1V526.1h1V526.3h1V527.3h1V527.4h1V526.4h1V526.1h1V526.3h1V527.0h1V524.5h1V528.1h1V527.8h1V527.9h1V521.8h1V524.2h1V525.0h1V526.5h1V526.2h1V526.3h1V524.3h1V525.3h1V524.1h1V526.7h1V525.1h1V526.7h1V521.8h1V525.2h1V525.2h1V525.6h1V525.2h1V528.5h1V529.8h1V528.5h1V528.6h1V525.9h1V527.1h1V524.1h1V524.9h1V530.3h1V528.8h1V526.6h1V525.7h1V525.9h1V528.3h1V528.6h1V527.5h1V527.4h1V529.6h1V526.1h1V526.5h1V526.9h1V528.0h1V528.9h1V527.9h1V528.8h1V530.2h1V530.0h1V529.5h1V531.3h1V530.5h1V528.6h1V527.9h1V527.8h1V529.2h1V529.2h1V525.0h1V525.2h1V530.3h1V527.8h1V530.9h1V531.3h1V530.9h1V528.4h1V528.5h1V529.3h1V529.8h1V525.4h1V520.3h1V527.4h1V527.2h1V529.2h1V528.6h1V527.2h1V527.8h1V525.2h1V524.8h1V528.7h1V530.4h1V529.3h1V531.6h1V530.5h1V528.2h1V527.0h1V532.4h1V530.9h1V527.2h1V529.2h1V530.2h1V520.1h1V529.2h1V528.7h1V530.0h1V530.7h1V529.7h1V530.9h1V531.5h1V529.1h1V530.0h1V531.4h1V532.1h1V531.0h1V526.4h1V528.0h1V529.1h1V530.3h1V528.3h1V528.5h1V531.4h1V530.7h1V528.9h1V528.8h1V530.4h1V532.1h1V529.6h1V531.4h1V533.3h1V532.6h1V531.6h1V532.5h1V530.4h1V531.7h1V530.9h1V532.9h1V531.1h1V533.2h1V533.6h1V532.0h1V532.1h1V532.0h1V530.1h1V531.2h1V528.7h1V533.4h1V532.8h1V534.0h1V532.2h1V532.8h1V532.3h1V532.1h1V529.6h1V530.4h1V531.6h1V532.9h1V532.5h1V530.3h1V532.2h1V530.7h1V534.1h1V531.5h1V533.4h1V532.6h1V530.6h1V530.4h1V531.2h1V532.7h1V531.3h1V531.0h1V531.3h1V526.2h1V528.8h1V531.1h1V529.5h1V531.3h1V532.5h1V525.0h1V534.1h1V530.8h1V532.5h1V531.7h1V531.0h1V533.7h1V532.1h1V531.3h1V531.0h1V533.9h1V533.2h1V533.3h1V532.0h1V531.1h1V533.8h1V535.3h1V531.9h1V529.6h1V534.0h1V532.0h1V531.8h1V529.5h1V529.4h1V534.1h1V529.4h1V529.9h1V532.9h1V533.4h1V533.6h1V527.4h1V529.7h1V532.4h1V532.6h1V531.3h1V531.7h1V534.2h1V534.4h1V533.2h1V533.3h1V532.8h1V532.4h1V532.0h1V533.5h1V533.2h1V531.5h1V534.8h1V532.4h1V531.3h1V534.7h1V534.2h1V533.3h1V530.4h1V528.7h1V532.7h1V530.7h1V533.9h1V533.9h1V533.0h1V532.5h1V534.4h1V532.4h1V528.9h1V532.2h1V533.8h1V535.5h1V533.1h1V533.0h1V533.3h1V532.2h1V532.9h1V532.0h1V531.6h1V532.2h1V534.0h1V533.9h1V533.9h1V532.7h1V535.0h1V533.3h1V534.4h1V534.0h1V532.7h1V530.9h1V532.4h1V530.0h1V533.6h1V533.7h1V533.4h1V535.8h1V535.5h1V534.8h1V535.2h1V533.9h1V534.8h1V533.8h1V534.7h1V535.3h1V532.5h1V536.2h1V531.5h1V527.4h1V530.3h1V534.5h1V529.7h1V531.2h1V534.2h1V530.9h1V531.5h1V535.7h1V535.1h1V534.0h1V535.5h1V529.4h1V530.0h1V534.0h1V534.4h1V535.1h1V533.6h1V532.0h1V532.6h1V534.8h1V533.3h1V534.5h1V534.6h1V535.1h1V534.0h1V533.4h1V534.2h1V531.5h1V529.5h1V534.5h1V532.8h1V535.2h1V534.6h1V536.5h1V527.8h1V533.9h1V532.7h1V536.0h1V533.0h1V535.8h1V533.7h1V530.8h1V533.9h1V537.2h1V534.9h1V534.9h1V530.5h1V535.6h1V530.7h1V534.1h1V534.1h1V534.3h1V534.5h1V534.7h1V530.5h1V533.4h1V534.1h1V533.3h1V532.4h1V534.7h1V533.9h1V532.8h1V537.4h1V536.3h1V535.4h1V535.0h1V535.6h1V535.5h1V534.1h1V536.3h1V534.4h1V534.5h1V534.9h1V535.0h1V536.0h1V531.6h1V534.6h1V535.2h1V537.7h1V532.8h1V534.7h1V534.5h1V534.1h1V535.9h1V536.3h1V534.9h1V534.3h1V534.8h1V535.3h1V534.7h1V536.4h1V537.5h1V534.0h1V536.8h1V537.8h1V534.6h1V535.3h1V535.7h1V535.7h1V533.8h1V534.4h1V534.2h1V534.1h1V536.5h1V537.9h1V535.2h1V536.7h1V533.6h1V535.8h1V535.6h1V536.3h1V536.5h1V536.2h1V535.8h1V535.9h1V537.8h1V536.2h1V534.5h1V534.1h1V538.8h1V537.6h1V534.9h1V529.9h1V534.5h1V534.4h1V535.3h1V531.9h1V535.8h1V537.9h1V538.5h1V539.2h1V537.7h1V536.7h1V537.7h1V535.0h1V538.6h1V536.0h1V535.8h1V533.5h1V537.8h1V536.1h1V535.8h1V536.0h1V533.5h1V536.9h1V537.6h1V536.5h1V537.5h1V535.3h1V531.9h1V538.8h1V539.1h1V536.8h1V534.5h1V536.6h1V536.1h1V537.3h1V537.1h1V538.8h1V537.0h1V536.8h1V535.7h1V536.5h1V538.5h1V537.5h1V532.8h1V537.5h1V536.4h1V538.7h1V537.4h1V533.0h1V538.9h1V534.6h1V535.4h1V536.4h1V535.8h1V537.9h1V537.7h1V536.1h1V537.1h1V535.7h1V536.7h1V535.7h1V537.2h1V539.4h1V536.8h1V536.9h1V537.7h1V536.0h1V538.0h1V538.3h1V537.6h1V538.7h1V538.4h1V538.2h1V533.2h1V537.8h1V536.1h1V536.0h1V538.1h1V538.0h1V540.3h1V538.1h1V536.6h1V537.8h1V538.3h1V536.0h1V537.6h1V535.4h1V539.9h1V536.3h1V537.6h1V540.0h1V540.6h1V601.8h-1V602.1h-1V602.8h-1V601.7h-1V599.6h-1V600.0h-1V601.6h-1V601.4h-1V603.2h-1V602.7h-1V600.8h-1V599.5h-1V601.9h-1V599.4h-1V601.8h-1V600.9h-1V600.6h-1V601.2h-1V604.8h-1V606.0h-1V602.5h-1V602.5h-1V603.5h-1V601.3h-1V603.0h-1V603.6h-1V602.9h-1V601.2h-1V601.8h-1V602.7h-1V601.4h-1V608.4h-1V599.9h-1V604.0h-1V603.3h-1V606.8h-1V601.8h-1V602.5h-1V603.6h-1V603.5h-1V603.4h-1V601.9h-1V601.4h-1V605.0h-1V604.9h-1V603.3h-1V603.9h-1V601.4h-1V605.4h-1V603.8h-1V603.1h-1V607.4h-1V603.3h-1V604.0h-1V603.8h-1V602.5h-1V604.5h-1V603.6h-1V608.6h-1V606.5h-1V604.1h-1V604.1h-1V603.5h-1V606.3h-1V603.7h-1V604.2h-1V605.0h-1V603.4h-1V602.2h-1V604.6h-1V605.4h-1V605.3h-1V602.1h-1V602.6h-1V605.0h-1V606.3h-1V605.0h-1V602.6h-1V604.6h-1V602.6h-1V604.5h-1V604.7h-1V604.4h-1V607.7h-1V604.1h-1V604.1h-1V606.7h-1V606.8h-1V603.9h-1V603.9h-1V606.2h-1V606.5h-1V606.0h-1V602.7h-1V605.3h-1V605.4h-1V608.1h-1V607.3h-1V605.7h-1V603.8h-1V603.4h-1V604.5h-1V606.1h-1V607.7h-1V607.2h-1V605.3h-1V605.6h-1V608.3h-1V610.0h-1V604.6h-1V608.5h-1V608.8h-1V606.3h-1V606.6h-1V605.3h-1V603.4h-1V604.9h-1V606.6h-1V605.8h-1V605.5h-1V606.4h-1V608.9h-1V610.9h-1V605.3h-1V607.4h-1V605.3h-1V606.0h-1V605.0h-1V605.6h-1V606.7h-1V611.9h-1V609.4h-1V606.8h-1V606.9h-1V611.3h-1V606.2h-1V606.0h-1V609.1h-1V609.0h-1V604.8h-1V607.0h-1V606.5h-1V607.8h-1V605.4h-1V610.4h-1V610.1h-1V609.1h-1V613.1h-1V610.4h-1V607.6h-1V609.4h-1V609.3h-1V608.1h-1V609.6h-1V608.0h-1V608.9h-1V606.5h-1V608.0h-1V609.1h-1V608.1h-1V608.1h-1V608.3h-1V609.5h-1V609.8h-1V614.9h-1V607.2h-1V616.5h-1V608.4h-1V609.1h-1V610.3h-1V608.3h-1V609.2h-1V608.9h-1V609.7h-1V612.4h-1V608.0h-1V612.6h-1V611.8h-1V607.7h-1V610.7h-1V611.2h-1V610.0h-1V613.7h-1V610.8h-1V609.7h-1V610.2h-1V609.9h-1V611.3h-1V607.5h-1V607.7h-1V608.9h-1V609.9h-1V607.9h-1V610.0h-1V609.1h-1V608.8h-1V609.9h-1V609.7h-1V609.8h-1V610.3h-1V612.5h-1V611.9h-1V612.3h-1V610.9h-1V610.7h-1V609.4h-1V610.9h-1V610.8h-1V611.0h-1V613.5h-1V608.4h-1V609.7h-1V609.8h-1V610.1h-1V611.9h-1V610.9h-1V612.5h-1V610.7h-1V614.2h-1V610.4h-1V609.9h-1V611.5h-1V608.7h-1V611.0h-1V612.7h-1V611.9h-1V611.8h-1V613.9h-1V612.3h-1V608.5h-1V613.2h-1V612.9h-1V609.5h-1V611.2h-1V612.1h-1V610.1h-1V611.9h-1V618.0h-1V612.3h-1V613.9h-1V610.5h-1V611.3h-1V610.7h-1V613.2h-1V611.8h-1V611.1h-1V610.7h-1V612.9h-1V615.2h-1V612.9h-1V614.6h-1V614.6h-1V614.4h-1V615.0h-1V615.2h-1V613.9h-1V614.1h-1V610.2h-1V613.3h-1V613.6h-1V618.7h-1V615.1h-1V615.8h-1V611.3h-1V613.7h-1V612.5h-1V617.5h-1V618.3h-1V615.2h-1V613.9h-1V611.7h-1V611.4h-1V616.2h-1V614.0h-1V612.6h-1V616.7h-1V612.1h-1V615.6h-1V613.0h-1V611.7h-1V612.0h-1V612.4h-1V610.9h-1V613.0h-1V615.4h-1V614.6h-1V613.3h-1V615.5h-1V616.4h-1V614.5h-1V612.1h-1V613.5h-1V615.7h-1V617.1h-1V612.9h-1V614.0h-1V614.6h-1V614.1h-1V615.1h-1V614.4h-1V612.7h-1V613.0h-1V616.9h-1V610.8h-1V613.2h-1V613.0h-1V615.2h-1V615.7h-1V614.3h-1V613.7h-1V614.6h-1V615.6h-1V615.7h-1V611.7h-1V614.0h-1V613.2h-1V621.2h-1V623.3h-1V617.6h-1V615.0h-1V612.7h-1V613.6h-1V614.9h-1V613.5h-1V612.7h-1V616.3h-1V614.4h-1V612.4h-1V616.4h-1V613.4h-1V612.5h-1V612.7h-1V617.6h-1V615.4h-1V615.0h-1V613.2h-1V614.1h-1V613.8h-1V614.9h-1V616.3h-1V615.8h-1V616.3h-1V616.6h-1V616.3h-1V622.1h-1V616.7h-1V615.2h-1V615.5h-1V614.6h-1V616.2h-1V614.9h-1V614.9h-1V617.3h-1V617.6h-1V616.9h-1V615.7h-1V614.0h-1V615.1h-1V617.9h-1V618.8h-1V614.9h-1V613.8h-1V615.8h-1V617.1h-1V615.5h-1V615.3h-1V615.0h-1V624.0h-1V617.5h-1V617.7h-1V617.6h-1V617.1h-1V619.1h-1V616.9h-1V615.2h-1V615.5h-1V615.3h-1V618.0h-1V617.6h-1V617.6h-1V617.2h-1V615.8h-1V615.7h-1V618.9h-1V615.7h-1V616.5h-1V616.5h-1V617.1h-1V616.6h-1V620.3h-1V623.0h-1V617.9h-1V616.7h-1V617.1h-1V616.6h-1V628.1h-1V618.5h-1V617.7h-1V621.5h-1V620.7h-1V619.8h-1V617.6h-1V620.1h-1V619.9h-1V618.8h-1V621.3h-1V618.0h-1V617.4h-1V618.7h-1V620.0h-1V621.5h-1V621.3h-1V624.8h-1V618.3h-1V620.1h-1V619.5h-1V619.2h-1V617.9h-1V623.0h-1V623.1h-1V617.6h-1V620.1h-1V620.4h-1V620.3h-1V620.0h-1V621.3h-1V621.4h-1V622.8h-1V624.0h-1V622.6h-1V621.4h-1V619.7h-1V618.8h-1V624.4h-1V621.0h-1V619.0h-1V620.6h-1V621.7h-1V623.6h-1V623.1h-1V622.6h-1V620.7h-1V625.6h-1V622.9h-1V625.7h-1V627.6h-1V625.3h-1V622.5h-1V622.5h-1V623.1h-1V620.2h-1V623.0h-1V621.1h-1V621.7h-1V624.0h-1V624.7h-1V625.3h-1V623.7h-1V624.8h-1V622.0h-1V622.6h-1V623.1h-1V624.7h-1V626.0h-1V621.7h-1V624.0h-1V628.4h-1V629.8h-1V628.7h-1V622.7h-1V625.9h-1V624.6h-1V625.4h-1V623.9h-1V629.0h-1V623.2h-1V625.5h-1V624.0h-1V628.6h-1V625.3h-1V625.4h-1V626.2h-1V627.7h-1V627.7h-1V625.6h-1V625.3h-1V625.7h-1V628.5h-1V628.0h-1V625.2h-1V624.1h-1V624.9h-1V625.7h-1V625.8h-1V626.4h-1V628.9h-1V625.6h-1V627.5h-1V625.1h-1V626.2h-1V625.6h-1V626.5h-1V625.8h-1V625.9h-1V626.8h-1V631.5h-1V629.0h-1V629.2h-1V627.9h-1V628.9h-1V631.8h-1V627.2h-1V628.2h-1V627.2h-1V629.3h-1V629.9h-1V629.5h-1V628.9h-1V630.2h-1V629.8h-1V629.2h-1V632.6h-1V639.4h-1V632.3h-1V630.6h-1V631.5h-1V632.2h-1V633.8h-1V632.2h-1V633.1h-1V631.4h-1V634.1h-1V635.3h-1V636.4h-1V633.9h-1V635.9h-1V634.8h-1V635.0h-1V632.8h-1V635.8h-1V635.0h-1V637.9h-1V640.8h-1V639.7h-1V638.4h-1V639.0h-1V639.8h-1V643.2h-1V646.0h-1V648.3h-1V649.7h-1V651.9h-1V656.9h-1V650.5h-1V652.3h-1V649.2h-1V651.7h-1V652.4h-1V651.0h-1V653.1h-1V657.3h-1V653.0h-1V654.4h-1V652.4h-1V657.8h-1V656.1h-1V655.4h-1V655.6h-1V654.9h-1V654.6h-1V655.4h-1V654.5h-1V656.3h-1V658.1h-1V658.3h-1V656.8h-1V657.4h-1V657.1h-1V655.7h-1V656.5h-1V657.8h-1V659.3h-1V657.7h-1V660.8h-1V662.7h-1V659.4h-1V659.9h-1V660.0h-1V659.1h-1V657.5h-1V658.2h-1V659.7h-1V659.6h-1V660.1h-1V660.7h-1V661.1h-1V659.3h-1V660.1h-1V661.4h-1V662.6h-1V663.1h-1V661.6h-1V670.5h-1V663.3h-1V661.3h-1V661.4h-1V664.0h-1V665.8h-1V664.3h-1V666.0h-1V662.8h-1V664.7h-1V662.4h-1V664.7h-1V665.4h-1V667.9h-1V665.0h-1V665.7h-1V671.8h-1V665.9h-1V665.7h-1V666.8h-1V666.2h-1V668.5h-1V667.2h-1V666.7h-1V667.1h-1V669.4h-1V667.5h-1V669.0h-1V672.1h-1V670.3h-1V669.0h-1V669.7h-1V669.2h-1V669.9h-1V671.5h-1V675.6h-1V668.8h-1V669.9h-1V669.9h-1V669.5h-1V669.8h-1V670.2h-1V673.0h-1V673.4h-1V674.5h-1V670.2h-1V672.1h-1V673.2h-1V672.2h-1V672.5h-1V677.3h-1V673.0h-1V672.9h-1V677.8h-1V674.7h-1V677.2h-1V674.3h-1V678.7h-1V674.2h-1V674.3h-1V673.4h-1V673.7h-1V674.8h-1V678.4h-1V679.6h-1V676.8h-1V676.4h-1V677.6h-1V680.7h-1V679.9h-1V676.5h-1V674.2h-1V677.4h-1V674.5h-1V687.2h-1V679.6h-1V678.6h-1V680.0h-1V677.3h-1V677.4h-1V676.3h-1V675.7h-1V680.2h-1V678.7h-1V682.9h-1V679.8h-1V677.4h-1V677.8h-1V679.7h-1V678.5h-1V679.7h-1V682.8h-1V678.6h-1V683.7h-1V681.0h-1V682.1h-1V687.3h-1V682.8h-1V683.7h-1V680.5h-1V680.7h-1V680.4h-1V683.4h-1V685.0h-1V683.8h-1V683.0h-1V682.8h-1V680.8h-1V681.1h-1V682.4h-1V682.7h-1V683.3h-1V683.7h-1V684.9h-1V687.5h-1V682.5h-1V686.8h-1V683.5h-1V683.7h-1V684.2h-1V688.4h-1V686.6h-1V685.8h-1V685.9h-1V686.1h-1V685.2h-1V690.2h-1V688.6h-1V688.4h-1V688.2h-1V688.1h-1V688.4h-1V688.6h-1V690.6h-1V694.6h-1V692.8h-1V693.6h-1V689.5h-1V689.4h-1V691.1h-1V691.7h-1V690.8h-1V693.5h-1V692.2h-1V690.5h-1V692.2h-1V691.6h-1V692.7h-1V692.6h-1V693.3h-1V692.8h-1V696.0h-1V697.7h-1V695.5h-1V693.3h-1V694.5h-1V696.4h-1V697.5h-1V697.0h-1V694.3h-1V696.7h-1V695.6h-1V694.8h-1V700.1h-1V697.6h-1V697.8h-1V699.9h-1V698.6h-1V699.0h-1V697.4h-1V698.5h-1V700.3h-1V700.5h-1V700.9h-1V699.8h-1V707.0h-1V704.1h-1V700.2h-1V699.6h-1V707.7h-1V703.3h-1V704.1h-1V700.4h-1V699.7h-1V702.2h-1V702.2h-1V702.8h-1V701.8h-1V703.3h-1V702.2h-1V701.3h-1V702.6h-1V701.7h-1V702.7h-1V704.0h-1V703.6h-1V702.6h-1V704.1h-1V703.1h-1V704.9h-1V706.6h-1V702.8h-1V711.5h-1V705.2h-1V707.1h-1V704.5h-1V705.0h-1V706.2h-1V707.4h-1V705.1h-1V705.9h-1V705.1h-1V708.3h-1V709.7h-1V709.8h-1V710.0h-1V710.6h-1V710.6h-1V711.6h-1V710.3h-1V709.0h-1V707.2h-1V711.5h-1V711.9h-1V709.1h-1V710.6h-1V715.2h-1V713.1h-1V712.8h-1V717.8h-1V710.6h-1V710.3h-1V711.6h-1V713.8h-1V716.1h-1V714.6h-1V713.5h-1V715.3h-1V715.0h-1V713.7h-1V714.1h-1V718.7h-1V715.0h-1V720.1h-1V718.1h-1V718.7h-1V716.2h-1V715.1h-1V715.8h-1V717.5h-1V721.5h-1V717.2h-1V717.3h-1V725.2h-1V719.6h-1V717.9h-1V722.1h-1V717.5h-1V720.1h-1V724.9h-1V719.0h-1V720.4h-1V718.7h-1V721.5h-1V719.5h-1V719.2h-1V719.2h-1V721.3h-1V720.8h-1V719.6h-1V721.9h-1V727.3h-1V725.5h-1V731.0h-1V723.1h-1V724.1h-1V726.8h-1V726.0h-1V723.6h-1V725.9h-1V728.9h-1V722.9h-1V724.9h-1V724.9h-1V732.3h-1V733.6h-1V727.8h-1V728.5h-1V728.1h-1V727.7h-1V728.1h-1V728.3h-1V729.1h-1V732.9h-1V731.8h-1V731.2h-1V731.6h-1V730.0h-1V730.9h-1V732.4h-1V732.6h-1V731.4h-1V733.1h-1V734.6h-1V732.2h-1V735.7h-1V745.4h-1V755.7h-1V771.9h-1V766.2h-1V764.0h-1V766.3h-1V766.4h-1V763.2h-1V769.2h-1V769.6h-1V771.6h-1V768.2h-1V764.9h-1V772.3h-1V770.5h-1V775.6h-1V770.2h-1V763.5h-1V772.4h-1V771.7h-1V771.6h-1V774.3h-1V776.6h-1V776.8h-1V781.0h-1V777.9h-1V772.8h-1V772.1h-1V776.4h-1V787.1h-1V773.7h-1V779.0h-1V776.7h-1V776.2h-1V772.9h-1V778.2h-1V774.4h-1V776.9h-1V769.8h-1V772.3h-1V775.9h-1V787.7h-1V763.5h-1V759.7h-1V754.0h-1V746.1h-1V743.5h-1V740.3h-1V733.8h-1V729.2h-1V730.9h-1V739.8h-1V738.4h-1V743.4h-1V746.8h-1V754.8h-1V770.2h-1V760.4h-1V764.7h-1V774.7h-1V775.1h-1V771.1h-1V770.8h-1V766.7h-1V775.4h-1V772.4h-1V773.0h-1V775.6h-1V778.3h-1V774.7h-1V773.1h-1V773.6h-1V772.1h-1V775.7h-1V775.3h-1V775.5h-1V781.5h-1V782.1h-1V784.7h-1V773.1h-1V781.6h-1V778.4h-1V780.0h-1V778.5h-1V778.4h-1V788.1h-1V778.0h-1V771.1h-1V783.2h-1V776.6h-1V783.9h-1V774.3h-1V777.1h-1V779.8h-1V778.2h-1V598.4h-1V596.4h-1V597.5h-1V599.4h-1V598.6h-1V599.6h-1V598.8h-1V601.9h-1V601.5h-1V600.1h-1V596.9h-1V601.6h-1V597.2h-1V597.5h-1V598.2h-1V598.4h-1V598.7h-1V597.2h-1V597.7h-1V597.1h-1V598.2h-1V597.5h-1V600.3h-1V601.2h-1V600.5h-1V603.1h-1V599.5h-1V598.4h-1V598.8h-1V599.4h-1V599.8h-1V600.8h-1V602.3h-1V604.2h-1V602.1h-1V601.2h-1V601.7h-1V601.4h-1V599.3h-1V603.1h-1V604.6h-1V602.6h-1V599.8h-1V600.8h-1V601.6h-1V604.1h-1V606.5h-1V604.9h-1V604.1h-1V605.6h-1V600.7h-1V603.6h-1V604.0h-1V603.3h-1V602.9h-1V601.6h-1V604.2h-1V604.7h-1V604.7h-1V607.5h-1V606.7h-1V606.8h-1V606.6h-1V603.2h-1V603.3h-1V605.9h-1V607.8h-1V606.3h-1V605.2h-1V607.5h-1V605.7h-1V606.9h-1V607.4h-1V610.5h-1V608.7h-1V608.4h-1V608.3h-1V608.8h-1V608.3h-1V611.0h-1V611.0h-1V611.2h-1V612.8h-1V613.5h-1V614.9h-1V617.7h-1V615.9h-1V620.7h-1V622.4h-1V621.7h-1V617.8h-1V618.4h-1V620.7h-1V619.2h-1V621.3h-1V620.8h-1V621.6h-1V625.4h-1V625.9h-1V627.2h-1V631.8h-1V630.5h-1V632.3h-1V641.0h-1V635.6h-1V636.8h-1V638.2h-1V648.5h-1V641.3h-1V643.3h-1V646.1h-1V650.7h-1V651.4h-1V651.3h-1V653.8h-1V653.8h-1V659.1h-1V662.7h-1V666.3h-1V670.1h-1V671.8h-1V671.7h-1V675.9h-1V682.9h-1V689.4h-1V687.0h-1V691.9h-1V699.2h-1V705.7h-1V713.8h-1V720.9h-1V734.4h-1V745.6h-1V752.0h-1V759.7h-1V767.9h-1V766.4h-1V770.9h-1V774.1h-1V774.8h-1V774.0h-1V770.5h-1V762.2h-1V778.1h-1V778.1h-1V775.5h-1V773.8h-1V774.4h-1V777.7h-1V777.4h-1V781.8h-1V779.4h-1V765.7h-1V780.1h-1V778.9h-1V771.1h-1V773.5h-1V778.0h-1V774.5h-1V783.0h-1V777.8h-1V774.1h-1V765.8h-1V775.6h-1V774.7h-1V783.4h-1V783.3h-1V777.0h-1V768.8h-1V778.8h-1V787.5h-1V782.4h-1V774.7h-1Z" fill="#9a98fc"/>
<rect x="468.2" y="770.0" width="1.1" height="41.5" fill="#b4b2ff"/>
<rect x="295.4" y="414.0" width="1.2" height="37.5" fill="#00c000"/>
<rect x="509.0" y="414.0" width="1.2" height="23.0" fill="#00c000"/>
<rect x="647.2" y="414.0" width="1.2" height="36.5" fill="#00c000"/>
<rect x="671.6" y="414.0" width="1.2" height="29.7" fill="#00c000"/>
<rect x="763.4" y="414.0" width="1.2" height="37.5" fill="#00c000"/>
<rect x="781.8" y="414.0" width="1.2" height="34.8" fill="#00c000"/>
<rect x="878.1" y="414.0" width="1.2" height="56.6" fill="#00c000"/>
<rect x="340.4" y="392.0" width="1.2" height="8.0" fill="#00c000"/>
<rect x="559.4" y="391.0" width="1.2" height="9.0" fill="#00c000"/>
<rect x="1344.4" y="391.5" width="1.2" height="8.5" fill="#00c000"/>
<rect x="1309.4" y="392.5" width="1.2" height="7.5" fill="#00c000"/>
<rect x="1161.4" y="393.0" width="1.2" height="7.0" fill="#00c000"/>
<rect x="419.4" y="393.0" width="1.2" height="7.0" fill="#00c000"/>
<path d="M220 397.9h1V398.5h1V400.5h1V399.4h1V398.8h1V400.5h1V399.5h1V397.0h1V396.6h1V399.1h1V398.7h1V398.4h1V397.3h1V395.5h1V398.1h1V400.2h1V397.6h1V395.3h1V396.8h1V396.5h1V394.3h1V393.6h1V398.7h1V399.4h1V397.3h1V398.6h1V397.1h1V399.2h1V398.9h1V399.9h1V401.1h1V392.4h1V390.8h1V400.1h1V397.8h1V396.3h1V396.1h1V397.2h1V396.7h1V400.4h1V397.7h1V399.3h1V395.6h1V395.6h1V397.5h1V399.9h1V399.1h1V401.4h1V397.2h1V398.7h1V399.7h1V399.7h1V398.9h1V396.9h1V399.1h1V399.5h1V398.4h1V398.0h1V398.8h1V397.8h1V396.2h1V396.7h1V398.6h1V400.1h1V395.7h1V395.5h1V398.4h1V400.0h1V399.8h1V398.3h1V396.0h1V399.4h1V397.8h1V397.7h1V398.5h1V397.5h1V400.1h1V399.9h1V400.4h1V400.4h1V398.1h1V394.9h1V397.8h1V399.6h1V397.1h1V398.6h1V393.1h1V395.8h1V397.9h1V397.4h1V399.8h1V397.1h1V398.9h1V397.2h1V394.2h1V395.0h1V391.5h1V394.1h1V394.8h1V398.7h1V398.3h1V398.7h1V399.4h1V396.4h1V396.9h1V394.8h1V399.3h1V397.3h1V397.3h1V399.6h1V400.4h1V398.0h1V395.5h1V399.7h1V394.3h1V394.7h1V397.5h1V397.8h1V398.8h1V398.3h1V397.0h1V398.3h1V398.8h1V400.0h1V397.1h1V397.3h1V396.4h1V399.1h1V398.2h1V398.8h1V399.5h1V398.7h1V396.6h1V396.3h1V400.5h1V395.3h1V396.4h1V396.6h1V398.9h1V400.2h1V400.4h1V399.3h1V394.6h1V398.7h1V397.0h1V399.7h1V400.0h1V399.2h1V399.3h1V398.7h1V400.2h1V398.6h1V399.5h1V400.6h1V398.0h1V399.4h1V400.1h1V399.0h1V398.6h1V399.2h1V400.5h1V398.1h1V399.1h1V399.3h1V400.0h1V400.6h1V390.5h1V397.5h1V400.5h1V400.4h1V400.2h1V397.1h1V398.8h1V397.1h1V397.8h1V398.5h1V398.1h1V396.9h1V398.0h1V399.5h1V398.2h1V396.6h1V399.5h1V396.8h1V398.1h1V398.7h1V399.0h1V399.5h1V399.5h1V396.7h1V395.8h1V400.1h1V400.2h1V396.5h1V398.5h1V398.7h1V399.6h1V399.6h1V398.2h1V399.1h1V398.1h1V394.9h1V398.9h1V392.9h1V400.5h1V399.5h1V399.1h1V400.6h1V399.7h1V397.6h1V399.3h1V397.1h1V400.3h1V398.1h1V397.4h1V394.5h1V397.5h1V400.9h1V396.3h1V397.4h1V399.1h1V397.2h1V396.8h1V400.2h1V395.2h1V400.4h1V396.6h1V396.2h1V399.3h1V397.4h1V399.1h1V399.3h1V400.3h1V399.2h1V397.0h1V397.2h1V397.0h1V396.1h1V397.0h1V397.2h1V394.9h1V391.6h1V395.9h1V397.6h1V397.3h1V397.8h1V398.6h1V399.1h1V396.8h1V394.0h1V399.7h1V396.4h1V397.0h1V395.3h1V395.4h1V397.1h1V396.4h1V395.6h1V397.1h1V399.6h1V398.6h1V399.1h1V397.0h1V396.2h1V397.1h1V399.0h1V397.6h1V394.5h1V395.9h1V398.3h1V397.9h1V399.7h1V397.1h1V395.2h1V397.9h1V399.9h1V400.5h1V399.1h1V386.6h1V400.6h1V397.4h1V399.5h1V396.9h1V394.2h1V397.9h1V400.2h1V399.1h1V400.0h1V397.7h1V396.8h1V399.6h1V399.2h1V400.0h1V393.8h1V400.7h1V399.0h1V398.3h1V398.0h1V399.7h1V399.0h1V397.8h1V400.8h1V400.1h1V399.1h1V399.1h1V400.1h1V400.0h1V401.0h1V396.0h1V397.2h1V396.2h1V398.8h1V396.1h1V399.1h1V400.1h1V400.2h1V398.2h1V398.7h1V400.6h1V395.6h1V398.3h1V401.0h1V399.6h1V397.4h1V395.1h1V394.1h1V396.7h1V398.0h1V395.7h1V398.0h1V398.6h1V395.3h1V395.2h1V400.4h1V399.2h1V397.9h1V397.2h1V397.8h1V395.7h1V397.2h1V396.1h1V399.2h1V398.5h1V399.9h1V400.3h1V400.4h1V400.2h1V396.4h1V400.1h1V397.1h1V394.3h1V393.0h1V398.0h1V399.1h1V398.4h1V398.3h1V396.2h1V391.9h1V396.2h1V400.1h1V399.8h1V400.0h1V395.3h1V396.8h1V396.7h1V396.0h1V398.8h1V399.0h1V396.4h1V396.0h1V396.4h1V398.9h1V399.0h1V397.1h1V399.1h1V400.4h1V400.1h1V399.3h1V398.7h1V396.2h1V396.6h1V398.2h1V396.1h1V397.3h1V397.9h1V399.8h1V398.3h1V396.1h1V399.4h1V400.2h1V395.0h1V399.8h1V398.2h1V397.4h1V399.8h1V398.8h1V399.7h1V388.4h1V398.9h1V396.8h1V395.3h1V396.4h1V398.8h1V398.6h1V400.3h1V399.0h1V398.5h1V400.9h1V399.2h1V395.7h1V399.0h1V396.4h1V398.9h1V399.6h1V399.5h1V399.6h1V396.0h1V396.0h1V397.2h1V396.5h1V395.7h1V397.7h1V395.7h1V397.1h1V399.6h1V397.3h1V396.0h1V399.1h1V397.4h1V397.7h1V397.4h1V397.6h1V399.2h1V396.7h1V396.4h1V397.1h1V399.3h1V396.4h1V394.2h1V398.7h1V396.6h1V398.7h1V399.8h1V395.8h1V394.1h1V398.0h1V397.8h1V394.7h1V394.9h1V395.4h1V399.2h1V399.5h1V398.1h1V399.0h1V399.0h1V398.3h1V394.2h1V397.7h1V396.5h1V398.7h1V394.9h1V392.9h1V394.8h1V398.3h1V399.9h1V397.0h1V397.4h1V397.9h1V396.4h1V398.0h1V398.7h1V394.7h1V396.2h1V393.8h1V395.3h1V397.8h1V400.0h1V400.6h1V398.9h1V400.1h1V399.3h1V399.6h1V399.7h1V399.0h1V399.3h1V396.6h1V396.6h1V399.1h1V399.7h1V399.7h1V396.6h1V398.2h1V398.0h1V395.5h1V398.7h1V396.5h1V395.8h1V396.7h1V399.9h1V399.0h1V396.7h1V398.4h1V394.9h1V396.5h1V397.5h1V398.2h1V395.9h1V399.3h1V396.2h1V399.1h1V400.2h1V399.1h1V399.3h1V398.4h1V398.4h1V398.3h1V398.7h1V400.5h1V396.6h1V399.1h1V396.3h1V399.9h1V398.3h1V397.8h1V399.9h1V398.7h1V396.7h1V399.1h1V396.2h1V400.7h1V396.7h1V397.0h1V398.7h1V399.8h1V398.5h1V390.3h1V398.9h1V395.5h1V396.4h1V400.1h1V397.9h1V395.0h1V398.7h1V400.3h1V399.5h1V398.7h1V395.5h1V397.0h1V397.1h1V397.6h1V398.0h1V399.5h1V395.5h1V397.5h1V399.7h1V397.5h1V399.9h1V398.5h1V399.8h1V400.2h1V398.6h1V394.4h1V391.8h1V393.1h1V398.2h1V400.2h1V398.4h1V397.6h1V398.0h1V397.5h1V398.9h1V398.2h1V399.8h1V400.2h1V399.2h1V395.2h1V399.5h1V399.0h1V396.0h1V397.1h1V396.2h1V398.3h1V397.1h1V396.1h1V396.7h1V396.9h1V398.8h1V399.5h1V397.8h1V395.6h1V398.1h1V398.3h1V395.9h1V397.9h1V400.2h1V398.0h1V394.9h1V397.0h1V396.8h1V399.4h1V398.7h1V395.2h1V395.6h1V398.4h1V399.3h1V393.9h1V399.3h1V398.1h1V400.9h1V395.4h1V398.5h1V399.6h1V397.4h1V399.6h1V398.8h1V399.4h1V400.1h1V398.5h1V399.8h1V398.1h1V398.0h1V396.3h1V395.1h1V394.2h1V397.4h1V396.9h1V397.5h1V400.0h1V399.2h1V396.3h1V397.4h1V400.0h1V399.1h1V400.2h1V398.5h1V398.3h1V399.5h1V399.9h1V397.0h1V399.3h1V397.6h1V399.2h1V398.8h1V395.2h1V399.9h1V396.2h1V395.2h1V398.6h1V399.2h1V397.1h1V400.6h1V395.2h1V394.6h1V393.6h1V395.9h1V398.4h1V400.1h1V399.5h1V399.5h1V398.7h1V397.2h1V398.8h1V398.5h1V398.6h1V391.3h1V394.7h1V394.8h1V400.5h1V399.1h1V400.1h1V399.2h1V400.9h1V400.2h1V400.3h1V399.2h1V397.8h1V394.7h1V396.3h1V396.1h1V397.1h1V399.7h1V398.4h1V398.6h1V400.1h1V399.9h1V398.1h1V397.5h1V400.0h1V399.0h1V395.5h1V397.0h1V398.6h1V399.2h1V399.1h1V392.3h1V396.3h1V396.9h1V393.1h1V396.6h1V399.4h1V399.0h1V397.9h1V398.7h1V396.7h1V394.9h1V396.9h1V391.7h1V399.4h1V397.0h1V401.0h1V398.3h1V400.0h1V399.2h1V397.4h1V397.6h1V400.3h1V398.7h1V397.8h1V395.4h1V395.7h1V395.7h1V398.8h1V393.3h1V399.1h1V397.3h1V396.8h1V400.2h1V399.0h1V396.2h1V398.1h1V399.5h1V398.1h1V399.6h1V392.8h1V395.8h1V397.6h1V399.7h1V395.7h1V399.9h1V398.8h1V397.5h1V399.8h1V399.1h1V398.9h1V392.2h1V391.8h1V398.4h1V398.8h1V397.3h1V396.3h1V399.0h1V399.4h1V396.3h1V397.2h1V396.0h1V396.8h1V394.3h1V398.7h1V399.2h1V399.5h1V399.0h1V399.9h1V399.3h1V398.8h1V398.2h1V399.1h1V395.6h1V396.1h1V399.7h1V400.2h1V396.8h1V398.5h1V399.9h1V397.4h1V397.4h1V398.4h1V397.0h1V392.4h1V396.1h1V398.7h1V398.5h1V401.1h1V400.5h1V397.9h1V397.1h1V398.3h1V399.4h1V398.3h1V398.2h1V400.3h1V398.3h1V394.2h1V399.0h1V396.4h1V398.6h1V397.8h1V397.5h1V400.3h1V396.9h1V398.1h1V396.8h1V398.6h1V399.0h1V400.2h1V399.4h1V400.0h1V396.7h1V396.2h1V394.1h1V394.6h1V398.7h1V400.5h1V391.1h1V398.1h1V399.3h1V399.0h1V396.9h1V396.2h1V398.7h1V396.1h1V392.8h1V397.2h1V395.8h1V398.7h1V399.7h1V400.6h1V398.0h1V395.1h1V398.5h1V398.8h1V399.1h1V395.0h1V399.1h1V399.9h1V398.4h1V398.5h1V399.6h1V398.2h1V399.5h1V397.7h1V397.9h1V398.1h1V394.5h1V395.7h1V399.3h1V398.2h1V396.2h1V397.5h1V397.9h1V398.5h1V396.9h1V399.1h1V398.0h1V392.6h1V398.3h1V399.9h1V397.2h1V397.0h1V399.2h1V397.5h1V394.1h1V397.1h1V398.7h1V400.0h1V398.7h1V397.2h1V396.1h1V395.3h1V397.1h1V398.2h1V392.8h1V397.2h1V396.9h1V397.6h1V398.7h1V393.5h1V400.8h1V399.5h1V399.3h1V396.1h1V399.8h1V398.9h1V398.0h1V399.4h1V396.9h1V395.6h1V397.9h1V400.2h1V399.0h1V397.1h1V397.0h1V398.9h1V398.2h1V398.3h1V398.3h1V396.1h1V394.5h1V396.3h1V398.9h1V395.2h1V396.5h1V397.0h1V400.4h1V399.0h1V399.5h1V399.7h1V399.6h1V400.2h1V400.8h1V398.6h1V399.3h1V396.7h1V397.7h1V397.6h1V395.7h1V397.9h1V396.6h1V395.8h1V397.7h1V398.8h1V397.6h1V398.8h1V399.7h1V400.4h1V399.5h1V399.9h1V395.3h1V396.1h1V395.3h1V397.9h1V400.2h1V400.1h1V398.9h1V397.2h1V398.2h1V399.3h1V400.1h1V398.7h1V398.8h1V398.3h1V398.7h1V401.1h1V399.9h1V398.7h1V399.2h1V399.6h1V392.1h1V399.4h1V399.8h1V399.4h1V400.4h1V398.0h1V399.0h1V399.4h1V397.4h1V399.5h1V398.9h1V397.5h1V398.1h1V399.4h1V396.4h1V392.7h1V393.3h1V398.3h1V399.9h1V399.9h1V400.3h1V400.5h1V397.8h1V396.0h1V398.0h1V396.3h1V397.3h1V396.1h1V396.3h1V396.1h1V395.2h1V395.8h1V396.4h1V397.3h1V396.4h1V388.4h1V400.2h1V399.6h1V398.0h1V397.6h1V397.7h1V397.2h1V397.7h1V389.9h1V397.6h1V396.4h1V394.0h1V397.7h1V397.2h1V393.3h1V396.6h1V400.2h1V399.0h1V400.7h1V398.7h1V397.9h1V398.0h1V398.9h1V400.2h1V398.9h1V396.8h1V396.4h1V400.9h1V397.6h1V399.8h1V398.4h1V399.1h1V393.5h1V399.3h1V400.0h1V397.6h1V398.2h1V398.9h1V400.0h1V398.2h1V399.6h1V399.5h1V399.2h1V398.6h1V398.8h1V399.0h1V396.5h1V397.9h1V399.9h1V399.3h1V399.0h1V398.6h1V398.9h1V396.9h1V398.1h1V398.8h1V399.0h1V399.5h1V392.3h1V398.9h1V398.1h1V392.9h1V395.0h1V398.9h1V398.7h1V400.7h1V396.0h1V391.9h1V396.1h1V397.7h1V399.5h1V398.5h1V399.2h1V399.9h1V400.1h1V399.8h1V398.3h1V394.1h1V398.9h1V398.3h1V397.5h1V398.9h1V399.1h1V399.2h1V399.7h1V396.2h1V399.5h1V397.4h1V397.8h1V397.8h1V398.9h1V397.2h1V398.8h1V399.9h1V398.0h1V396.8h1V396.6h1V395.9h1V395.9h1V395.8h1V400.4h1V399.5h1V397.4h1V396.8h1V399.1h1V398.8h1V400.1h1V395.8h1V398.4h1V400.5h1V399.6h1V396.0h1V397.9h1V397.2h1V395.9h1V397.5h1V400.1h1V399.0h1V398.9h1V400.7h1V400.7h1V399.0h1V400.1h1V398.5h1V398.1h1V399.5h1V399.2h1V399.5h1V398.8h1V398.7h1V399.3h1V397.5h1V399.0h1V399.8h1V397.1h1V400.0h1V399.3h1V396.1h1V399.2h1V397.2h1V397.7h1V397.0h1V396.8h1V397.4h1V397.7h1V398.3h1V398.7h1V399.2h1V399.3h1V400.9h1V400.4h1V400.0h1V399.4h1V398.9h1V400.0h1V398.9h1V399.6h1V399.2h1V397.8h1V396.3h1V395.7h1V398.5h1V398.4h1V395.9h1V396.6h1V394.3h1V397.4h1V399.7h1V399.3h1V399.8h1V395.4h1V391.6h1V398.6h1V400.0h1V395.5h1V383.6h1V397.7h1V398.0h1V397.5h1V393.7h1V400.7h1V400.4h1V396.4h1V393.6h1V398.0h1V393.9h1V399.6h1V400.2h1V398.3h1V396.6h1V397.8h1V399.7h1V399.3h1V400.3h1V398.5h1V422.6h-1V420.3h-1V418.5h-1V419.1h-1V418.7h-1V419.1h-1V418.5h-1V415.9h-1V417.5h-1V418.5h-1V425.1h-1V416.7h-1V416.4h-1V423.0h-1V416.9h-1V415.5h-1V416.1h-1V417.0h-1V417.7h-1V417.0h-1V415.4h-1V416.0h-1V417.7h-1V419.7h-1V419.0h-1V420.2h-1V415.9h-1V414.7h-1V415.7h-1V417.7h-1V416.4h-1V419.0h-1V415.9h-1V414.6h-1V414.6h-1V419.6h-1V417.6h-1V420.9h-1V420.0h-1V414.9h-1V418.6h-1V418.5h-1V416.9h-1V420.7h-1V421.5h-1V415.7h-1V416.8h-1V417.9h-1V416.5h-1V416.6h-1V413.7h-1V417.3h-1V414.5h-1V415.3h-1V415.7h-1V420.5h-1V418.0h-1V416.5h-1V418.5h-1V416.6h-1V417.3h-1V416.7h-1V415.4h-1V417.8h-1V423.3h-1V417.1h-1V417.7h-1V417.6h-1V415.1h-1V415.2h-1V414.0h-1V417.0h-1V417.8h-1V417.4h-1V415.9h-1V414.6h-1V417.6h-1V415.4h-1V415.3h-1V416.0h-1V416.1h-1V415.3h-1V415.2h-1V422.6h-1V424.1h-1V418.7h-1V421.0h-1V415.7h-1V416.7h-1V416.3h-1V417.2h-1V415.4h-1V415.7h-1V417.5h-1V415.3h-1V416.2h-1V417.7h-1V417.8h-1V416.7h-1V416.9h-1V417.6h-1V416.5h-1V414.9h-1V415.2h-1V417.6h-1V417.3h-1V415.1h-1V417.1h-1V418.3h-1V420.0h-1V418.6h-1V414.7h-1V415.7h-1V415.5h-1V417.0h-1V415.6h-1V414.8h-1V421.3h-1V422.6h-1V422.2h-1V420.3h-1V420.6h-1V417.3h-1V414.7h-1V415.4h-1V415.5h-1V416.1h-1V416.2h-1V422.5h-1V418.8h-1V417.2h-1V416.2h-1V416.9h-1V415.8h-1V417.1h-1V415.1h-1V417.0h-1V417.3h-1V419.2h-1V419.6h-1V421.3h-1V414.3h-1V416.1h-1V414.6h-1V414.5h-1V417.1h-1V415.7h-1V414.2h-1V421.8h-1V415.0h-1V415.2h-1V418.7h-1V418.3h-1V421.2h-1V418.9h-1V421.6h-1V417.0h-1V414.4h-1V413.9h-1V415.7h-1V413.8h-1V415.1h-1V415.8h-1V415.8h-1V415.8h-1V418.3h-1V416.7h-1V415.9h-1V417.5h-1V417.1h-1V416.3h-1V417.3h-1V416.9h-1V417.2h-1V416.8h-1V417.8h-1V417.0h-1V419.8h-1V419.4h-1V416.6h-1V414.5h-1V416.7h-1V417.5h-1V415.2h-1V415.8h-1V417.5h-1V419.6h-1V418.3h-1V415.3h-1V415.1h-1V414.1h-1V415.5h-1V415.7h-1V416.4h-1V416.5h-1V415.5h-1V415.4h-1V414.9h-1V421.4h-1V415.6h-1V414.8h-1V420.3h-1V419.4h-1V422.4h-1V419.5h-1V418.9h-1V414.7h-1V413.9h-1V416.2h-1V415.7h-1V415.6h-1V416.9h-1V415.9h-1V415.0h-1V414.8h-1V418.0h-1V418.6h-1V417.5h-1V417.1h-1V415.4h-1V415.5h-1V413.9h-1V418.5h-1V417.0h-1V418.4h-1V419.6h-1V415.9h-1V414.5h-1V416.2h-1V418.5h-1V419.2h-1V419.3h-1V416.8h-1V416.4h-1V415.7h-1V416.8h-1V415.6h-1V414.2h-1V414.4h-1V416.3h-1V416.3h-1V414.4h-1V416.5h-1V416.0h-1V414.7h-1V415.9h-1V416.1h-1V415.3h-1V415.0h-1V417.3h-1V418.3h-1V419.8h-1V415.8h-1V414.3h-1V415.8h-1V414.8h-1V423.2h-1V415.4h-1V415.4h-1V414.9h-1V417.7h-1V417.5h-1V421.0h-1V417.3h-1V414.9h-1V417.3h-1V416.7h-1V416.8h-1V414.8h-1V417.3h-1V415.2h-1V414.3h-1V415.9h-1V416.1h-1V415.0h-1V417.2h-1V416.5h-1V418.4h-1V422.8h-1V417.8h-1V414.7h-1V415.4h-1V416.6h-1V416.0h-1V419.4h-1V416.1h-1V417.4h-1V415.8h-1V417.4h-1V414.7h-1V418.1h-1V414.9h-1V416.7h-1V415.3h-1V414.5h-1V415.8h-1V416.6h-1V415.7h-1V414.7h-1V420.2h-1V418.7h-1V415.3h-1V416.0h-1V417.1h-1V419.2h-1V416.2h-1V417.7h-1V414.5h-1V416.6h-1V416.2h-1V416.2h-1V416.1h-1V416.0h-1V414.4h-1V414.8h-1V415.8h-1V419.2h-1V416.2h-1V416.3h-1V418.4h-1V421.8h-1V416.6h-1V416.4h-1V416.8h-1V416.6h-1V414.9h-1V416.5h-1V418.9h-1V416.4h-1V414.2h-1V417.4h-1V416.1h-1V416.0h-1V416.9h-1V414.3h-1V414.5h-1V415.7h-1V417.8h-1V419.0h-1V418.1h-1V417.4h-1V415.0h-1V417.1h-1V419.4h-1V418.9h-1V416.6h-1V418.0h-1V416.3h-1V415.4h-1V414.6h-1V415.4h-1V417.1h-1V414.2h-1V417.4h-1V419.0h-1V415.3h-1V415.0h-1V415.1h-1V415.7h-1V414.9h-1V421.5h-1V415.7h-1V416.0h-1V415.8h-1V417.3h-1V417.6h-1V418.7h-1V417.4h-1V415.1h-1V416.6h-1V419.7h-1V421.8h-1V421.1h-1V420.0h-1V417.0h-1V419.6h-1V419.7h-1V414.6h-1V416.0h-1V418.0h-1V418.2h-1V418.3h-1V418.8h-1V416.7h-1V415.8h-1V416.5h-1V416.6h-1V416.9h-1V416.4h-1V419.9h-1V415.3h-1V417.4h-1V415.4h-1V414.0h-1V417.6h-1V415.8h-1V420.0h-1V418.5h-1V416.0h-1V414.7h-1V414.2h-1V416.5h-1V421.0h-1V416.5h-1V416.8h-1V415.4h-1V417.0h-1V416.7h-1V418.1h-1V419.5h-1V415.6h-1V418.4h-1V419.6h-1V416.3h-1V416.5h-1V415.9h-1V423.0h-1V419.2h-1V417.9h-1V418.7h-1V418.5h-1V419.9h-1V416.8h-1V417.3h-1V414.7h-1V418.9h-1V415.4h-1V423.1h-1V422.2h-1V416.2h-1V418.7h-1V419.2h-1V415.2h-1V424.5h-1V418.9h-1V419.5h-1V418.6h-1V420.7h-1V419.2h-1V415.9h-1V415.1h-1V415.5h-1V414.7h-1V418.9h-1V419.7h-1V416.6h-1V415.8h-1V422.3h-1V420.5h-1V416.6h-1V418.5h-1V417.4h-1V417.5h-1V417.4h-1V416.6h-1V416.8h-1V414.9h-1V420.8h-1V414.9h-1V415.1h-1V416.1h-1V430.5h-1V423.4h-1V427.1h-1V422.1h-1V418.4h-1V419.6h-1V419.8h-1V417.9h-1V414.8h-1V415.2h-1V417.5h-1V415.6h-1V419.0h-1V416.0h-1V415.1h-1V415.1h-1V414.8h-1V418.1h-1V414.3h-1V424.7h-1V419.5h-1V416.8h-1V417.8h-1V414.8h-1V419.6h-1V414.2h-1V416.8h-1V414.6h-1V415.1h-1V417.7h-1V417.4h-1V415.7h-1V415.1h-1V416.3h-1V418.2h-1V419.9h-1V416.1h-1V414.5h-1V414.6h-1V416.5h-1V415.2h-1V417.1h-1V414.6h-1V416.5h-1V419.7h-1V414.8h-1V416.7h-1V417.0h-1V414.8h-1V416.8h-1V418.6h-1V416.0h-1V414.9h-1V417.6h-1V418.3h-1V415.0h-1V416.2h-1V416.4h-1V417.2h-1V416.6h-1V419.6h-1V419.0h-1V415.6h-1V419.3h-1V417.0h-1V415.7h-1V418.2h-1V421.1h-1V419.9h-1V415.3h-1V417.5h-1V421.2h-1V417.4h-1V416.3h-1V417.1h-1V416.4h-1V419.6h-1V415.0h-1V416.2h-1V419.0h-1V423.9h-1V417.7h-1V416.9h-1V418.2h-1V416.1h-1V414.3h-1V416.7h-1V418.4h-1V415.2h-1V418.2h-1V416.5h-1V417.9h-1V415.8h-1V417.9h-1V415.9h-1V416.6h-1V418.9h-1V415.3h-1V416.3h-1V416.2h-1V416.4h-1V414.0h-1V414.5h-1V421.1h-1V415.3h-1V427.4h-1V416.8h-1V419.0h-1V416.3h-1V420.0h-1V418.5h-1V419.0h-1V416.9h-1V416.2h-1V415.8h-1V414.8h-1V418.2h-1V414.8h-1V417.5h-1V413.7h-1V414.7h-1V415.9h-1V418.1h-1V419.3h-1V417.5h-1V418.0h-1V418.0h-1V414.5h-1V418.5h-1V419.3h-1V417.3h-1V416.5h-1V418.2h-1V416.8h-1V417.3h-1V419.7h-1V420.0h-1V418.3h-1V415.1h-1V418.2h-1V414.6h-1V415.1h-1V414.5h-1V416.3h-1V416.9h-1V414.9h-1V416.0h-1V417.7h-1V417.0h-1V414.1h-1V419.2h-1V419.9h-1V417.3h-1V417.7h-1V418.5h-1V416.2h-1V418.3h-1V417.2h-1V417.8h-1V415.6h-1V414.6h-1V416.8h-1V416.8h-1V417.5h-1V415.9h-1V427.2h-1V418.1h-1V417.2h-1V421.2h-1V426.1h-1V416.9h-1V417.6h-1V424.1h-1V418.6h-1V416.0h-1V415.5h-1V418.9h-1V414.2h-1V416.6h-1V417.9h-1V416.9h-1V416.8h-1V416.8h-1V417.7h-1V416.5h-1V415.7h-1V415.3h-1V420.1h-1V419.9h-1V418.8h-1V417.6h-1V416.4h-1V418.4h-1V422.7h-1V417.3h-1V415.9h-1V416.1h-1V419.4h-1V420.6h-1V419.0h-1V421.1h-1V417.4h-1V416.5h-1V418.0h-1V417.8h-1V415.4h-1V422.2h-1V419.8h-1V415.6h-1V415.1h-1V416.3h-1V413.7h-1V416.2h-1V416.7h-1V422.9h-1V417.7h-1V418.3h-1V419.2h-1V418.2h-1V415.1h-1V416.8h-1V415.1h-1V416.7h-1V416.7h-1V421.8h-1V415.2h-1V415.3h-1V417.3h-1V415.4h-1V416.0h-1V419.1h-1V417.2h-1V416.1h-1V419.8h-1V421.0h-1V417.8h-1V415.9h-1V415.9h-1V415.9h-1V417.7h-1V418.5h-1V416.6h-1V414.8h-1V420.6h-1V420.0h-1V415.7h-1V416.1h-1V415.9h-1V415.0h-1V414.6h-1V415.6h-1V417.4h-1V418.4h-1V415.5h-1V416.7h-1V416.2h-1V418.4h-1V419.9h-1V419.5h-1V416.4h-1V414.7h-1V417.3h-1V419.5h-1V423.2h-1V419.9h-1V419.8h-1V417.7h-1V415.1h-1V418.8h-1V417.8h-1V416.9h-1V414.3h-1V417.7h-1V416.8h-1V417.9h-1V416.6h-1V415.0h-1V415.7h-1V414.7h-1V417.3h-1V415.0h-1V419.2h-1V417.7h-1V416.6h-1V419.0h-1V418.9h-1V417.2h-1V416.8h-1V418.2h-1V417.5h-1V420.4h-1V416.6h-1V420.0h-1V416.7h-1V417.7h-1V415.1h-1V416.5h-1V416.2h-1V415.8h-1V418.9h-1V419.8h-1V416.6h-1V414.9h-1V416.4h-1V414.5h-1V417.4h-1V422.3h-1V421.6h-1V418.6h-1V418.5h-1V419.8h-1V421.2h-1V415.0h-1V422.7h-1V419.7h-1V416.5h-1V417.0h-1V415.9h-1V416.4h-1V419.0h-1V420.1h-1V414.2h-1V415.7h-1V415.2h-1V415.2h-1V415.6h-1V418.1h-1V418.7h-1V419.4h-1V419.3h-1V416.4h-1V416.7h-1V417.2h-1V414.0h-1V415.4h-1V419.8h-1V418.6h-1V422.3h-1V416.9h-1V417.7h-1V414.9h-1V418.7h-1V421.4h-1V416.5h-1V416.7h-1V415.9h-1V415.9h-1V416.5h-1V415.4h-1V415.4h-1V417.4h-1V419.4h-1V416.6h-1V415.3h-1V421.5h-1V415.0h-1V418.1h-1V415.0h-1V417.2h-1V418.8h-1V418.6h-1V416.6h-1V416.9h-1V417.4h-1V416.9h-1V417.0h-1V423.4h-1V417.1h-1V415.9h-1V416.6h-1V416.6h-1V414.6h-1V417.2h-1V417.0h-1V416.6h-1V416.9h-1V415.3h-1V414.0h-1V417.1h-1V416.0h-1V414.5h-1V415.9h-1V416.8h-1V416.3h-1V416.7h-1V420.1h-1V414.7h-1V419.8h-1V416.8h-1V415.1h-1V414.3h-1V419.5h-1V419.4h-1V415.3h-1V418.0h-1V415.0h-1V417.3h-1V414.1h-1V422.2h-1V420.6h-1V414.3h-1V417.6h-1V416.5h-1V414.7h-1V419.9h-1V416.0h-1V418.7h-1V417.4h-1V420.7h-1V414.7h-1V414.7h-1V417.3h-1V418.1h-1V416.6h-1V417.0h-1V417.7h-1V419.3h-1V422.9h-1V415.8h-1V415.1h-1V417.9h-1V418.6h-1V416.9h-1V414.4h-1V415.7h-1V422.4h-1V416.3h-1V414.2h-1V415.4h-1V414.0h-1V421.0h-1V415.1h-1V415.2h-1V417.1h-1V416.2h-1V415.3h-1V416.3h-1V415.0h-1V416.6h-1V416.1h-1V414.1h-1V416.2h-1V415.7h-1V417.0h-1V420.1h-1V419.4h-1V417.5h-1V418.2h-1V416.9h-1V415.9h-1V414.5h-1V416.5h-1V419.2h-1V416.9h-1V416.5h-1V415.5h-1V415.9h-1V421.1h-1V422.6h-1V419.2h-1V416.7h-1V419.3h-1V417.2h-1V415.2h-1V415.7h-1V415.8h-1V414.6h-1V415.1h-1V417.6h-1V416.8h-1V418.1h-1V418.0h-1V416.2h-1V420.0h-1V419.0h-1V419.8h-1V416.1h-1V417.9h-1V416.9h-1V414.8h-1V415.5h-1V418.7h-1V416.4h-1V415.0h-1V418.3h-1V417.8h-1V414.5h-1V419.3h-1V420.8h-1V419.5h-1V415.5h-1V419.0h-1V418.5h-1V417.9h-1V419.7h-1V414.4h-1V415.9h-1V414.6h-1V419.2h-1V420.5h-1V418.1h-1V416.0h-1V417.1h-1V415.7h-1V418.9h-1V414.7h-1V427.9h-1V414.1h-1V416.0h-1V416.9h-1V415.6h-1V416.4h-1V416.6h-1V415.4h-1V415.7h-1V420.1h-1V422.9h-1V423.0h-1V419.0h-1V414.5h-1V416.6h-1V417.6h-1V417.4h-1V417.0h-1V417.0h-1V419.3h-1V415.5h-1V416.3h-1V416.2h-1V415.9h-1V418.1h-1V419.9h-1V415.7h-1V414.9h-1V415.5h-1V415.4h-1V414.2h-1V415.6h-1V417.0h-1V414.2h-1V415.5h-1V417.4h-1V419.4h-1V416.2h-1V418.2h-1V415.5h-1V419.5h-1V419.3h-1V416.6h-1V416.0h-1V416.0h-1V418.1h-1V417.9h-1V424.6h-1V416.4h-1V418.6h-1V414.8h-1V418.2h-1V415.7h-1V416.1h-1V417.6h-1V418.7h-1V416.7h-1V415.9h-1V421.2h-1V415.7h-1V417.9h-1V417.5h-1V420.4h-1V415.3h-1V416.0h-1V419.4h-1V422.0h-1V418.7h-1V416.8h-1V414.9h-1V418.5h-1V418.8h-1V421.4h-1V419.7h-1V415.5h-1V416.0h-1V419.1h-1V421.0h-1V423.2h-1V416.3h-1V417.1h-1V416.0h-1V415.3h-1V416.7h-1V415.8h-1V414.5h-1V415.8h-1V414.4h-1V415.2h-1V416.0h-1V415.4h-1V416.2h-1V415.2h-1V418.9h-1V418.0h-1V415.6h-1V420.5h-1V414.9h-1V417.8h-1V415.8h-1V420.4h-1V415.4h-1V415.4h-1V415.2h-1V423.8h-1V420.9h-1V416.6h-1V422.7h-1V422.7h-1V415.9h-1V415.1h-1V417.7h-1V415.1h-1V422.2h-1V414.4h-1V415.4h-1V416.1h-1V417.2h-1V418.1h-1V417.5h-1V415.4h-1V414.6h-1V416.4h-1V416.4h-1V416.6h-1V418.9h-1V415.1h-1V415.0h-1V415.9h-1V415.1h-1V419.8h-1V417.5h-1V416.0h-1V415.9h-1V416.6h-1V418.4h-1V416.7h-1V416.6h-1V417.9h-1V417.2h-1V413.9h-1V418.0h-1V416.8h-1V415.1h-1V419.2h-1V420.3h-1V417.8h-1V418.3h-1V417.4h-1V414.1h-1V417.2h-1V417.7h-1V415.8h-1V417.0h-1V418.5h-1V417.1h-1V415.6h-1V415.3h-1V415.5h-1V418.2h-1V416.2h-1V416.4h-1V423.3h-1V419.0h-1V416.8h-1V415.3h-1V419.4h-1V417.1h-1V415.9h-1V417.8h-1V415.2h-1V417.4h-1V416.5h-1V419.5h-1V417.5h-1V414.3h-1V417.3h-1V416.4h-1V419.0h-1V419.9h-1V414.9h-1V418.1h-1V417.9h-1V418.7h-1V416.5h-1V417.4h-1V415.8h-1V415.9h-1V417.8h-1V418.1h-1V419.3h-1V419.3h-1V415.4h-1V419.4h-1V416.8h-1V419.5h-1V419.2h-1V418.0h-1V419.9h-1V418.3h-1V416.5h-1V417.7h-1V416.1h-1V417.6h-1V414.7h-1V416.8h-1V415.3h-1V416.5h-1V414.4h-1Z" fill="#00ff00"/>
<rect x="345.4" y="372.0" width="1.2" height="25.0" fill="#c86400"/>
<path d="M220 360.7h1V360.9h1V361.7h1V360.3h1V361.8h1V360.0h1V361.0h1V361.2h1V359.2h1V361.7h1V356.2h1V359.8h1V362.0h1V361.8h1V360.2h1V359.4h1V360.6h1V361.6h1V359.8h1V357.9h1V358.0h1V358.6h1V361.2h1V359.7h1V362.2h1V361.7h1V361.0h1V360.2h1V359.7h1V361.6h1V359.1h1V360.0h1V360.1h1V360.8h1V360.8h1V362.0h1V356.7h1V358.9h1V360.2h1V361.8h1V360.5h1V358.4h1V359.3h1V360.3h1V362.0h1V361.0h1V361.5h1V360.1h1V359.9h1V361.0h1V357.8h1V359.9h1V360.7h1V360.5h1V360.5h1V354.8h1V359.6h1V360.9h1V361.1h1V360.2h1V361.0h1V360.1h1V359.7h1V355.0h1V359.3h1V361.7h1V360.5h1V359.4h1V360.6h1V354.1h1V357.8h1V356.7h1V359.0h1V360.2h1V359.6h1V360.9h1V357.3h1V359.0h1V361.1h1V361.1h1V361.9h1V362.1h1V359.9h1V359.4h1V356.9h1V360.0h1V361.9h1V356.2h1V359.6h1V359.6h1V360.3h1V359.9h1V360.6h1V359.8h1V360.7h1V358.6h1V359.6h1V359.3h1V358.5h1V358.6h1V355.5h1V356.1h1V358.1h1V361.1h1V358.3h1V359.4h1V362.3h1V358.8h1V360.5h1V360.4h1V360.9h1V357.9h1V357.5h1V355.9h1V360.8h1V359.2h1V353.9h1V360.2h1V358.9h1V358.6h1V359.6h1V361.0h1V359.7h1V358.4h1V359.6h1V358.9h1V361.8h1V359.7h1V360.8h1V360.6h1V360.2h1V360.8h1V357.9h1V357.4h1V361.2h1V359.1h1V360.7h1V357.7h1V359.0h1V358.2h1V357.6h1V360.0h1V360.3h1V360.7h1V361.7h1V359.4h1V358.8h1V361.2h1V359.7h1V358.3h1V360.4h1V356.1h1V359.4h1V360.1h1V357.2h1V357.0h1V359.2h1V360.3h1V362.7h1V359.9h1V359.1h1V360.7h1V358.9h1V358.0h1V359.6h1V361.3h1V360.5h1V361.4h1V359.1h1V360.6h1V358.7h1V358.5h1V359.6h1V360.7h1V361.3h1V360.9h1V359.4h1V356.4h1V357.1h1V361.5h1V358.8h1V358.2h1V359.0h1V360.9h1V360.2h1V359.8h1V361.1h1V360.2h1V360.2h1V356.0h1V360.7h1V360.1h1V359.6h1V357.8h1V359.0h1V360.2h1V361.8h1V360.4h1V360.5h1V362.0h1V360.8h1V360.9h1V357.1h1V360.5h1V361.8h1V362.0h1V360.9h1V359.0h1V359.7h1V361.8h1V360.9h1V358.4h1V358.5h1V358.4h1V359.1h1V359.1h1V361.1h1V358.3h1V357.5h1V358.5h1V359.4h1V356.9h1V359.2h1V359.1h1V359.9h1V358.2h1V358.3h1V359.9h1V361.8h1V361.9h1V359.7h1V361.1h1V359.5h1V361.5h1V359.2h1V362.0h1V360.4h1V361.5h1V359.1h1V359.7h1V361.1h1V360.6h1V360.5h1V360.2h1V361.5h1V359.4h1V359.7h1V361.5h1V360.5h1V361.1h1V358.7h1V362.0h1V361.5h1V360.4h1V359.8h1V360.0h1V360.4h1V359.9h1V358.4h1V359.3h1V361.6h1V360.8h1V360.2h1V361.0h1V361.8h1V361.8h1V360.2h1V360.2h1V361.4h1V361.2h1V360.2h1V360.0h1V360.4h1V356.0h1V356.7h1V359.5h1V360.8h1V357.1h1V358.5h1V358.3h1V359.6h1V361.8h1V361.3h1V359.2h1V356.0h1V361.7h1V361.6h1V360.9h1V360.5h1V362.3h1V360.9h1V358.7h1V360.6h1V359.4h1V358.8h1V360.7h1V360.6h1V360.1h1V359.5h1V360.8h1V360.8h1V358.3h1V360.3h1V361.6h1V360.3h1V362.2h1V359.5h1V358.9h1V359.8h1V358.7h1V361.0h1V360.4h1V358.3h1V357.3h1V359.5h1V359.7h1V360.6h1V358.3h1V360.4h1V361.0h1V360.5h1V359.9h1V360.6h1V360.3h1V361.3h1V359.4h1V357.9h1V360.3h1V361.6h1V360.1h1V361.7h1V360.2h1V361.4h1V359.5h1V357.9h1V361.4h1V361.1h1V362.1h1V361.6h1V359.0h1V360.9h1V360.8h1V360.4h1V357.4h1V358.8h1V360.7h1V360.5h1V361.0h1V361.3h1V360.5h1V359.0h1V362.3h1V358.2h1V352.0h1V356.7h1V360.7h1V360.2h1V359.2h1V360.7h1V359.9h1V358.0h1V360.0h1V358.6h1V357.1h1V357.7h1V360.7h1V360.1h1V360.2h1V360.3h1V359.4h1V358.3h1V359.1h1V359.5h1V360.8h1V359.4h1V360.3h1V357.9h1V359.4h1V357.2h1V358.6h1V358.9h1V359.6h1V357.9h1V358.9h1V356.9h1V358.7h1V361.5h1V362.3h1V361.2h1V361.2h1V360.4h1V361.8h1V360.6h1V358.9h1V358.1h1V360.6h1V360.0h1V360.9h1V361.4h1V360.3h1V361.5h1V356.6h1V359.7h1V361.7h1V361.5h1V361.9h1V361.0h1V361.6h1V361.2h1V359.4h1V357.9h1V361.1h1V361.1h1V360.9h1V357.5h1V360.1h1V360.9h1V361.7h1V360.9h1V358.1h1V357.5h1V359.2h1V359.3h1V357.7h1V358.1h1V361.8h1V359.3h1V359.9h1V359.9h1V362.2h1V361.9h1V362.1h1V361.0h1V360.5h1V358.8h1V356.7h1V357.7h1V360.1h1V361.6h1V360.7h1V359.2h1V354.3h1V357.7h1V358.8h1V358.8h1V357.9h1V360.7h1V359.5h1V356.8h1V360.5h1V361.2h1V360.7h1V359.0h1V359.6h1V357.2h1V359.4h1V357.4h1V359.6h1V357.6h1V358.1h1V351.6h1V358.8h1V360.2h1V360.3h1V358.5h1V357.6h1V359.8h1V359.1h1V358.3h1V361.1h1V359.9h1V360.8h1V358.9h1V360.1h1V359.1h1V360.2h1V360.5h1V360.4h1V360.3h1V361.4h1V359.8h1V361.0h1V361.3h1V360.1h1V361.0h1V360.4h1V359.2h1V359.9h1V361.1h1V361.6h1V359.7h1V358.9h1V359.0h1V357.3h1V358.6h1V359.8h1V361.5h1V360.2h1V358.2h1V360.4h1V362.1h1V360.3h1V360.1h1V359.3h1V356.6h1V357.5h1V361.4h1V357.3h1V358.3h1V354.4h1V361.7h1V360.3h1V360.9h1V361.1h1V358.3h1V359.3h1V360.8h1V359.9h1V359.4h1V358.7h1V359.9h1V360.3h1V358.1h1V358.2h1V360.1h1V361.6h1V360.7h1V361.1h1V358.0h1V361.2h1V359.3h1V359.7h1V359.0h1V359.9h1V359.6h1V361.7h1V360.7h1V361.6h1V360.2h1V360.9h1V360.3h1V358.8h1V359.9h1V361.8h1V362.1h1V361.2h1V361.5h1V358.6h1V359.9h1V358.7h1V359.6h1V360.5h1V360.2h1V360.5h1V358.4h1V359.2h1V359.7h1V357.0h1V350.9h1V358.4h1V362.0h1V361.0h1V358.0h1V357.4h1V360.9h1V359.0h1V358.6h1V358.8h1V361.0h1V359.4h1V362.1h1V361.0h1V359.0h1V359.4h1V359.5h1V355.7h1V359.5h1V361.9h1V359.3h1V358.4h1V361.2h1V360.1h1V359.3h1V359.1h1V361.4h1V361.3h1V359.8h1V359.4h1V361.3h1V359.8h1V359.4h1V361.2h1V358.6h1V358.3h1V358.9h1V361.0h1V359.7h1V360.3h1V360.7h1V361.5h1V359.5h1V360.4h1V360.4h1V361.2h1V361.7h1V359.8h1V358.5h1V362.4h1V359.3h1V361.7h1V361.5h1V361.7h1V359.9h1V358.6h1V358.4h1V351.6h1V360.0h1V359.0h1V361.9h1V360.6h1V360.6h1V361.3h1V360.0h1V359.7h1V361.6h1V358.5h1V361.1h1V360.2h1V359.5h1V358.1h1V360.8h1V361.2h1V361.7h1V360.4h1V358.6h1V358.9h1V358.6h1V361.1h1V359.8h1V356.4h1V360.6h1V359.8h1V359.2h1V361.3h1V359.8h1V360.9h1V360.2h1V359.9h1V360.4h1V361.3h1V362.1h1V361.3h1V362.2h1V359.5h1V360.3h1V361.1h1V355.7h1V356.3h1V360.0h1V360.7h1V360.4h1V360.8h1V361.7h1V359.6h1V356.5h1V358.4h1V362.0h1V360.5h1V360.5h1V361.2h1V361.2h1V360.5h1V360.4h1V359.6h1V357.5h1V359.7h1V359.8h1V361.6h1V359.8h1V359.0h1V359.1h1V360.8h1V360.0h1V360.6h1V357.7h1V359.4h1V357.2h1V356.3h1V356.4h1V361.1h1V360.7h1V359.7h1V361.4h1V361.4h1V358.7h1V355.8h1V358.0h1V362.2h1V358.0h1V360.9h1V361.3h1V359.9h1V359.5h1V358.7h1V360.1h1V361.2h1V358.8h1V359.6h1V360.4h1V358.9h1V358.8h1V358.6h1V356.8h1V362.0h1V359.4h1V359.6h1V361.0h1V361.5h1V359.7h1V359.9h1V360.7h1V359.9h1V361.1h1V360.6h1V360.7h1V360.7h1V359.4h1V360.6h1V360.0h1V358.4h1V361.6h1V358.2h1V359.8h1V360.7h1V361.5h1V360.3h1V360.6h1V359.8h1V360.7h1V361.2h1V360.4h1V361.8h1V361.4h1V359.4h1V357.3h1V358.1h1V361.6h1V359.0h1V359.6h1V358.4h1V361.1h1V360.1h1V357.0h1V357.4h1V360.1h1V360.4h1V359.7h1V358.4h1V359.8h1V354.9h1V360.3h1V362.1h1V359.8h1V359.1h1V359.0h1V360.8h1V358.5h1V360.9h1V361.6h1V361.8h1V360.5h1V360.7h1V361.9h1V360.0h1V360.0h1V360.4h1V360.5h1V359.8h1V360.2h1V359.6h1V360.6h1V360.2h1V360.1h1V357.6h1V359.6h1V360.5h1V360.9h1V359.6h1V361.0h1V360.3h1V360.7h1V360.7h1V361.9h1V360.5h1V358.1h1V360.1h1V361.7h1V359.8h1V358.2h1V359.9h1V361.0h1V360.6h1V358.2h1V360.2h1V356.7h1V356.0h1V357.5h1V360.3h1V361.3h1V359.8h1V360.7h1V360.5h1V360.8h1V361.2h1V360.8h1V358.9h1V359.7h1V360.7h1V358.8h1V360.4h1V360.9h1V359.3h1V359.1h1V359.2h1V350.8h1V358.7h1V360.7h1V361.1h1V359.4h1V360.0h1V361.9h1V360.6h1V362.3h1V359.9h1V361.1h1V359.2h1V360.5h1V361.2h1V360.1h1V358.4h1V360.5h1V359.6h1V362.0h1V359.9h1V361.3h1V358.9h1V361.4h1V362.1h1V360.6h1V358.7h1V356.2h1V360.1h1V360.1h1V359.9h1V360.8h1V359.5h1V359.6h1V360.5h1V359.3h1V358.0h1V361.1h1V358.4h1V357.4h1V360.6h1V360.8h1V358.9h1V359.6h1V362.0h1V359.0h1V359.5h1V360.2h1V360.3h1V357.9h1V360.1h1V361.0h1V361.9h1V360.0h1V348.3h1V354.1h1V359.2h1V360.4h1V360.5h1V359.3h1V357.6h1V359.2h1V360.2h1V361.4h1V359.6h1V361.1h1V360.6h1V361.9h1V360.3h1V359.8h1V359.6h1V359.7h1V362.1h1V361.0h1V358.1h1V356.4h1V360.0h1V357.3h1V359.9h1V359.8h1V358.5h1V359.1h1V360.9h1V359.9h1V359.9h1V360.6h1V360.8h1V361.5h1V360.5h1V360.4h1V360.7h1V358.9h1V360.7h1V362.1h1V359.7h1V358.5h1V359.6h1V360.9h1V358.8h1V360.2h1V361.6h1V361.3h1V360.5h1V359.5h1V360.3h1V359.4h1V360.4h1V360.3h1V360.7h1V359.9h1V360.7h1V357.9h1V358.2h1V359.7h1V361.7h1V360.9h1V359.9h1V360.0h1V359.8h1V362.1h1V361.0h1V361.2h1V360.2h1V359.2h1V359.8h1V361.2h1V360.1h1V359.1h1V357.5h1V361.7h1V358.3h1V361.7h1V358.1h1V361.6h1V357.4h1V359.1h1V360.7h1V360.5h1V360.1h1V357.7h1V360.5h1V360.2h1V360.6h1V357.6h1V360.6h1V361.6h1V361.5h1V361.3h1V360.6h1V360.5h1V361.1h1V361.3h1V361.6h1V361.7h1V361.8h1V361.1h1V358.8h1V359.5h1V359.4h1V358.9h1V358.2h1V361.5h1V359.3h1V361.5h1V357.6h1V361.0h1V358.3h1V359.9h1V359.0h1V359.8h1V360.4h1V360.6h1V355.4h1V360.9h1V362.3h1V360.2h1V357.4h1V357.6h1V357.8h1V357.7h1V361.1h1V361.2h1V361.9h1V360.1h1V360.6h1V358.7h1V360.1h1V359.7h1V358.2h1V359.1h1V360.2h1V358.7h1V359.4h1V361.0h1V359.5h1V360.4h1V359.4h1V359.8h1V359.4h1V361.6h1V361.1h1V360.1h1V358.9h1V360.3h1V360.0h1V357.4h1V358.2h1V356.4h1V360.8h1V361.6h1V361.5h1V361.0h1V358.9h1V358.8h1V357.2h1V358.9h1V360.4h1V360.1h1V361.1h1V360.4h1V360.2h1V359.4h1V360.8h1V358.1h1V357.7h1V359.4h1V361.4h1V358.1h1V356.5h1V360.7h1V359.9h1V359.5h1V360.4h1V360.6h1V361.7h1V360.3h1V360.2h1V360.5h1V360.3h1V360.7h1V361.9h1V359.3h1V358.6h1V360.3h1V360.9h1V360.9h1V359.3h1V360.0h1V358.7h1V360.8h1V359.8h1V355.7h1V359.4h1V361.1h1V361.9h1V360.7h1V357.6h1V357.7h1V359.1h1V360.6h1V360.8h1V358.4h1V355.1h1V355.0h1V361.0h1V360.4h1V357.2h1V360.7h1V361.5h1V361.8h1V361.4h1V361.0h1V359.8h1V361.5h1V360.9h1V361.5h1V357.4h1V359.0h1V361.4h1V359.4h1V360.5h1V361.1h1V358.2h1V357.4h1V361.7h1V361.6h1V361.2h1V357.7h1V359.4h1V360.5h1V357.4h1V361.6h1V361.2h1V360.1h1V361.8h1V361.8h1V362.0h1V360.8h1V362.4h1V361.7h1V360.5h1V361.8h1V361.9h1V361.6h1V359.5h1V360.7h1V361.9h1V361.2h1V359.8h1V360.3h1V358.4h1V360.6h1V360.6h1V359.7h1V358.6h1V359.6h1V360.0h1V360.9h1V360.8h1V361.3h1V360.5h1V360.7h1V359.0h1V360.1h1V360.9h1V361.5h1V359.9h1V360.6h1V359.9h1V360.0h1V357.9h1V358.4h1V360.6h1V361.0h1V359.5h1V359.4h1V361.6h1V359.1h1V360.9h1V359.7h1V360.8h1V359.3h1V361.0h1V361.8h1V358.3h1V360.8h1V358.5h1V359.3h1V362.1h1V360.5h1V355.9h1V358.9h1V361.5h1V373.9h-1V375.3h-1V373.8h-1V373.8h-1V374.4h-1V372.7h-1V376.5h-1V376.2h-1V375.7h-1V374.8h-1V377.3h-1V377.6h-1V374.6h-1V378.9h-1V382.1h-1V377.1h-1V382.0h-1V375.1h-1V375.1h-1V373.6h-1V372.6h-1V373.7h-1V372.3h-1V373.1h-1V375.0h-1V373.3h-1V372.6h-1V373.2h-1V373.1h-1V373.7h-1V373.6h-1V372.5h-1V372.4h-1V371.9h-1V373.8h-1V382.0h-1V372.2h-1V372.1h-1V371.9h-1V374.2h-1V373.5h-1V373.9h-1V377.5h-1V376.0h-1V375.1h-1V382.5h-1V373.2h-1V373.3h-1V374.1h-1V374.1h-1V374.8h-1V375.6h-1V372.2h-1V374.3h-1V375.1h-1V376.4h-1V373.9h-1V376.1h-1V379.8h-1V372.8h-1V374.8h-1V373.0h-1V373.0h-1V374.6h-1V373.8h-1V376.9h-1V374.9h-1V372.4h-1V374.7h-1V372.0h-1V380.5h-1V373.7h-1V373.7h-1V374.3h-1V373.7h-1V375.4h-1V373.8h-1V373.0h-1V371.7h-1V374.1h-1V372.2h-1V380.0h-1V376.0h-1V373.3h-1V373.9h-1V374.1h-1V374.7h-1V375.5h-1V376.2h-1V374.9h-1V373.2h-1V374.1h-1V373.8h-1V374.0h-1V373.6h-1V375.5h-1V376.3h-1V375.3h-1V374.3h-1V373.7h-1V373.1h-1V376.4h-1V378.4h-1V379.0h-1V374.3h-1V374.4h-1V374.8h-1V374.5h-1V377.0h-1V375.6h-1V373.0h-1V373.7h-1V380.1h-1V374.8h-1V377.6h-1V373.9h-1V374.6h-1V374.2h-1V372.7h-1V371.6h-1V373.0h-1V374.6h-1V372.3h-1V374.0h-1V378.5h-1V376.2h-1V374.7h-1V375.4h-1V374.2h-1V374.7h-1V377.6h-1V377.8h-1V372.4h-1V374.3h-1V376.2h-1V374.0h-1V372.6h-1V374.0h-1V376.5h-1V376.8h-1V374.3h-1V374.7h-1V374.3h-1V373.7h-1V374.1h-1V373.9h-1V372.7h-1V374.1h-1V372.8h-1V372.8h-1V372.9h-1V375.4h-1V378.3h-1V377.6h-1V375.3h-1V376.6h-1V373.7h-1V372.2h-1V372.5h-1V374.8h-1V374.0h-1V377.4h-1V373.6h-1V374.2h-1V372.7h-1V372.5h-1V374.4h-1V377.1h-1V376.5h-1V376.5h-1V375.1h-1V374.7h-1V372.5h-1V371.7h-1V374.5h-1V377.8h-1V375.5h-1V374.2h-1V375.5h-1V374.6h-1V372.5h-1V374.6h-1V372.5h-1V376.0h-1V373.7h-1V373.3h-1V372.4h-1V373.2h-1V374.1h-1V374.3h-1V372.4h-1V373.6h-1V374.8h-1V374.3h-1V375.6h-1V372.6h-1V374.6h-1V373.4h-1V374.3h-1V376.2h-1V373.6h-1V374.5h-1V375.8h-1V377.2h-1V373.5h-1V373.4h-1V372.2h-1V372.3h-1V374.4h-1V374.6h-1V378.6h-1V375.3h-1V372.0h-1V373.0h-1V372.3h-1V374.0h-1V377.3h-1V372.7h-1V372.0h-1V375.9h-1V376.8h-1V375.6h-1V374.1h-1V375.1h-1V375.6h-1V375.9h-1V375.7h-1V374.3h-1V372.4h-1V376.3h-1V374.5h-1V373.2h-1V371.9h-1V373.2h-1V374.8h-1V374.6h-1V376.4h-1V373.7h-1V375.3h-1V378.3h-1V374.8h-1V371.9h-1V374.3h-1V375.3h-1V372.3h-1V374.7h-1V374.5h-1V374.1h-1V374.6h-1V371.9h-1V371.8h-1V371.8h-1V378.3h-1V374.7h-1V374.4h-1V373.6h-1V373.1h-1V374.9h-1V380.1h-1V375.8h-1V373.9h-1V373.2h-1V373.0h-1V373.1h-1V375.1h-1V373.2h-1V374.3h-1V375.4h-1V373.0h-1V373.4h-1V374.6h-1V374.6h-1V377.1h-1V373.8h-1V375.1h-1V371.7h-1V374.4h-1V373.2h-1V374.7h-1V376.4h-1V375.6h-1V374.8h-1V376.2h-1V374.4h-1V372.8h-1V374.9h-1V372.2h-1V374.3h-1V375.4h-1V376.0h-1V379.5h-1V373.5h-1V376.1h-1V373.3h-1V373.7h-1V372.9h-1V374.2h-1V375.9h-1V374.6h-1V374.0h-1V372.6h-1V372.0h-1V374.5h-1V373.8h-1V377.0h-1V377.0h-1V375.5h-1V374.0h-1V375.3h-1V374.6h-1V374.2h-1V375.3h-1V377.0h-1V375.5h-1V373.7h-1V372.6h-1V374.4h-1V376.8h-1V372.9h-1V375.8h-1V373.9h-1V376.0h-1V373.0h-1V372.6h-1V374.2h-1V374.0h-1V375.0h-1V375.0h-1V374.4h-1V374.4h-1V373.2h-1V374.7h-1V372.4h-1V372.4h-1V377.6h-1V373.7h-1V377.0h-1V376.4h-1V374.6h-1V377.6h-1V374.6h-1V374.5h-1V375.3h-1V373.2h-1V374.3h-1V375.4h-1V375.9h-1V375.1h-1V374.0h-1V372.7h-1V372.9h-1V373.4h-1V373.9h-1V372.6h-1V373.2h-1V372.4h-1V372.9h-1V371.8h-1V373.6h-1V376.3h-1V373.8h-1V376.1h-1V373.2h-1V373.9h-1V375.0h-1V374.5h-1V374.5h-1V376.7h-1V374.3h-1V374.1h-1V373.4h-1V372.6h-1V373.8h-1V374.7h-1V373.3h-1V372.1h-1V373.8h-1V379.4h-1V375.2h-1V374.6h-1V374.8h-1V372.7h-1V373.2h-1V374.0h-1V375.8h-1V372.8h-1V376.2h-1V374.3h-1V373.3h-1V375.0h-1V373.7h-1V372.9h-1V374.1h-1V374.0h-1V373.3h-1V375.6h-1V374.4h-1V374.6h-1V374.9h-1V376.1h-1V373.0h-1V373.4h-1V374.5h-1V373.0h-1V375.4h-1V374.4h-1V374.1h-1V377.7h-1V376.7h-1V376.2h-1V374.2h-1V374.0h-1V376.4h-1V375.5h-1V374.9h-1V374.4h-1V375.3h-1V372.9h-1V376.7h-1V373.8h-1V373.2h-1V372.1h-1V373.9h-1V374.9h-1V375.6h-1V375.5h-1V376.6h-1V376.1h-1V372.4h-1V376.1h-1V376.5h-1V374.5h-1V372.8h-1V375.8h-1V375.6h-1V374.1h-1V373.1h-1V373.4h-1V373.4h-1V373.4h-1V372.6h-1V373.2h-1V375.2h-1V375.0h-1V375.3h-1V374.5h-1V372.6h-1V373.2h-1V372.5h-1V372.3h-1V371.9h-1V374.0h-1V373.2h-1V373.8h-1V377.0h-1V375.6h-1V372.1h-1V372.5h-1V374.2h-1V374.3h-1V372.1h-1V377.5h-1V375.3h-1V371.8h-1V371.5h-1V371.6h-1V372.9h-1V375.3h-1V375.0h-1V373.9h-1V371.7h-1V372.6h-1V373.1h-1V373.4h-1V373.8h-1V374.0h-1V373.5h-1V372.0h-1V373.3h-1V372.9h-1V373.4h-1V374.1h-1V374.8h-1V374.5h-1V372.4h-1V373.9h-1V373.0h-1V374.7h-1V376.6h-1V375.2h-1V375.5h-1V377.2h-1V376.9h-1V376.0h-1V373.3h-1V374.2h-1V374.9h-1V371.6h-1V373.5h-1V375.8h-1V375.8h-1V375.0h-1V377.8h-1V375.3h-1V373.0h-1V373.1h-1V372.7h-1V375.0h-1V372.6h-1V373.7h-1V373.5h-1V373.8h-1V372.7h-1V377.2h-1V374.3h-1V374.3h-1V374.7h-1V376.4h-1V372.6h-1V373.5h-1V372.0h-1V373.3h-1V373.7h-1V374.0h-1V372.9h-1V373.9h-1V375.9h-1V372.1h-1V373.4h-1V373.4h-1V373.8h-1V372.6h-1V374.1h-1V374.3h-1V373.5h-1V373.2h-1V376.6h-1V376.9h-1V374.1h-1V374.0h-1V374.3h-1V375.1h-1V373.1h-1V373.9h-1V372.2h-1V373.9h-1V383.4h-1V376.2h-1V374.3h-1V375.1h-1V374.3h-1V374.1h-1V372.1h-1V374.5h-1V376.0h-1V375.2h-1V373.0h-1V372.7h-1V372.5h-1V372.9h-1V373.4h-1V374.9h-1V373.0h-1V373.7h-1V376.3h-1V374.9h-1V373.7h-1V374.2h-1V373.6h-1V378.4h-1V375.8h-1V373.5h-1V378.3h-1V375.0h-1V372.1h-1V374.1h-1V372.3h-1V376.5h-1V373.1h-1V374.8h-1V372.8h-1V374.2h-1V373.0h-1V376.8h-1V374.3h-1V373.4h-1V373.5h-1V375.4h-1V373.6h-1V373.4h-1V374.0h-1V373.8h-1V373.6h-1V374.7h-1V373.7h-1V379.2h-1V372.5h-1V373.7h-1V373.1h-1V374.2h-1V375.9h-1V376.3h-1V374.0h-1V374.3h-1V372.7h-1V374.9h-1V377.9h-1V373.6h-1V373.9h-1V374.1h-1V374.6h-1V375.2h-1V374.6h-1V374.9h-1V374.0h-1V375.2h-1V372.9h-1V372.6h-1V372.2h-1V374.2h-1V374.5h-1V373.6h-1V375.2h-1V376.3h-1V374.8h-1V378.6h-1V373.4h-1V374.9h-1V375.4h-1V375.0h-1V375.1h-1V376.2h-1V374.9h-1V374.4h-1V373.9h-1V373.4h-1V375.1h-1V375.0h-1V373.7h-1V372.5h-1V374.1h-1V372.7h-1V379.0h-1V373.0h-1V375.0h-1V375.8h-1V378.5h-1V375.6h-1V374.4h-1V375.6h-1V375.5h-1V375.0h-1V372.5h-1V375.1h-1V374.1h-1V372.3h-1V375.8h-1V375.4h-1V373.4h-1V377.6h-1V374.0h-1V373.4h-1V372.6h-1V373.3h-1V375.8h-1V372.4h-1V372.7h-1V374.1h-1V373.7h-1V373.6h-1V372.0h-1V372.3h-1V372.3h-1V372.1h-1V372.2h-1V375.1h-1V375.9h-1V372.6h-1V373.4h-1V373.0h-1V373.3h-1V373.7h-1V372.0h-1V373.0h-1V375.8h-1V373.7h-1V373.3h-1V372.2h-1V372.2h-1V374.0h-1V372.0h-1V373.2h-1V374.2h-1V373.8h-1V377.6h-1V376.7h-1V375.8h-1V374.6h-1V374.8h-1V372.7h-1V374.8h-1V374.8h-1V373.2h-1V374.4h-1V372.5h-1V373.4h-1V374.4h-1V374.8h-1V373.7h-1V374.6h-1V376.3h-1V373.3h-1V371.8h-1V372.3h-1V373.2h-1V373.2h-1V372.6h-1V376.0h-1V375.5h-1V372.1h-1V375.4h-1V372.8h-1V372.7h-1V375.2h-1V375.2h-1V373.3h-1V373.6h-1V372.7h-1V375.0h-1V375.0h-1V373.0h-1V381.1h-1V373.2h-1V373.7h-1V373.8h-1V373.1h-1V375.4h-1V373.4h-1V375.6h-1V372.9h-1V376.3h-1V377.5h-1V377.8h-1V374.7h-1V374.2h-1V374.6h-1V373.4h-1V376.4h-1V377.3h-1V373.4h-1V373.7h-1V374.0h-1V373.5h-1V377.1h-1V378.6h-1V373.8h-1V375.7h-1V376.4h-1V373.5h-1V374.9h-1V373.5h-1V377.7h-1V374.5h-1V376.5h-1V372.6h-1V374.3h-1V373.9h-1V372.8h-1V373.2h-1V374.5h-1V374.3h-1V377.3h-1V373.5h-1V374.3h-1V373.8h-1V372.5h-1V373.3h-1V372.6h-1V376.5h-1V379.4h-1V374.0h-1V374.8h-1V377.1h-1V386.8h-1V374.6h-1V374.3h-1V377.2h-1V374.2h-1V376.0h-1V374.4h-1V373.4h-1V372.2h-1V373.7h-1V373.3h-1V373.7h-1V373.8h-1V372.2h-1V372.3h-1V373.7h-1V373.8h-1V375.1h-1V374.6h-1V375.3h-1V372.2h-1V375.4h-1V376.7h-1V373.7h-1V372.8h-1V373.3h-1V373.0h-1V374.3h-1V374.9h-1V374.8h-1V373.3h-1V373.6h-1V373.8h-1V372.5h-1V372.9h-1V374.1h-1V373.4h-1V374.3h-1V374.2h-1V373.6h-1V373.3h-1V373.8h-1V376.9h-1V373.0h-1V375.3h-1V372.7h-1V374.8h-1V373.2h-1V373.3h-1V375.6h-1V375.9h-1V375.8h-1V372.8h-1V374.3h-1V373.3h-1V375.9h-1V375.1h-1V374.0h-1V380.2h-1V377.3h-1V377.5h-1V375.7h-1V374.7h-1V372.8h-1V372.9h-1V375.4h-1V371.9h-1V374.1h-1V373.8h-1V376.3h-1V374.3h-1V373.7h-1V374.3h-1V373.3h-1V374.2h-1V375.7h-1V375.8h-1V375.9h-1V375.0h-1V377.2h-1V373.4h-1V374.3h-1V374.5h-1V373.6h-1V373.2h-1V376.1h-1V374.1h-1V372.6h-1V372.2h-1V372.8h-1V372.9h-1V374.9h-1V376.5h-1V376.1h-1V380.7h-1V375.5h-1V379.8h-1V375.8h-1V374.3h-1V374.2h-1V373.9h-1V373.3h-1V374.0h-1V372.3h-1V373.4h-1V373.5h-1V376.1h-1V375.6h-1V374.9h-1V373.1h-1V371.8h-1V373.6h-1V375.0h-1V378.7h-1V374.4h-1V373.8h-1V374.2h-1V373.1h-1V373.2h-1V373.9h-1V373.5h-1V376.3h-1V376.9h-1V376.8h-1V374.1h-1V373.9h-1V372.9h-1V375.5h-1V376.3h-1V374.0h-1V373.8h-1V371.8h-1V372.6h-1V373.2h-1V375.0h-1V374.7h-1V373.4h-1V375.2h-1V375.8h-1V374.2h-1V376.7h-1V378.9h-1V376.8h-1V373.7h-1V375.3h-1V374.1h-1V375.5h-1V375.0h-1V372.6h-1V373.7h-1V372.7h-1V373.4h-1V373.5h-1V376.2h-1V374.3h-1V375.1h-1V373.2h-1V373.9h-1V372.9h-1V374.5h-1V374.5h-1V377.5h-1V373.5h-1V372.3h-1V374.8h-1V374.8h-1V377.3h-1V373.4h-1V375.3h-1V375.8h-1V371.8h-1V372.2h-1V373.9h-1V373.7h-1V377.7h-1V375.0h-1V374.6h-1V376.7h-1V376.6h-1V376.4h-1V375.3h-1V373.2h-1V371.9h-1V373.9h-1V373.7h-1V374.2h-1V374.2h-1V376.6h-1V375.9h-1V374.2h-1V371.8h-1V374.0h-1V373.0h-1V374.5h-1V373.4h-1V373.6h-1V377.4h-1V377.9h-1V374.3h-1V376.4h-1V372.3h-1V378.6h-1V377.5h-1V373.2h-1V375.6h-1V372.2h-1V374.7h-1V374.4h-1V372.3h-1V374.4h-1V374.1h-1V374.3h-1V376.3h-1V377.8h-1V375.5h-1V372.7h-1V374.4h-1V372.7h-1V371.9h-1V373.7h-1V372.2h-1V374.5h-1V374.0h-1V373.3h-1V373.2h-1V375.1h-1V374.2h-1V372.6h-1V372.8h-1V373.4h-1V374.6h-1V377.4h-1V378.1h-1V373.7h-1V374.7h-1V376.0h-1V378.8h-1V375.4h-1V372.4h-1V373.3h-1V372.7h-1V373.5h-1V374.6h-1V374.2h-1V379.2h-1V375.6h-1V376.2h-1V375.5h-1V372.7h-1V371.8h-1V374.0h-1V374.6h-1V372.1h-1V375.1h-1V377.1h-1V376.7h-1V372.2h-1V374.3h-1V372.4h-1V373.6h-1V372.3h-1V373.6h-1V376.1h-1V373.9h-1V377.4h-1V374.2h-1V373.3h-1V373.8h-1V373.7h-1V373.9h-1V372.8h-1V374.1h-1V372.4h-1V372.2h-1V375.1h-1V373.1h-1V373.0h-1V373.4h-1V375.8h-1V376.7h-1V374.6h-1V372.6h-1V373.6h-1V372.7h-1V376.3h-1V373.0h-1V375.9h-1V378.0h-1V375.8h-1V375.2h-1V372.9h-1V375.1h-1V377.3h-1V373.4h-1V375.8h-1V374.9h-1V372.7h-1V377.0h-1V375.1h-1V376.3h-1V375.4h-1V375.2h-1V375.0h-1V373.8h-1V372.3h-1V378.7h-1V373.0h-1V373.1h-1V372.2h-1V372.9h-1V374.3h-1V373.6h-1V375.6h-1V377.4h-1V378.1h-1V376.7h-1V373.9h-1V374.8h-1V376.8h-1V375.6h-1V375.3h-1V375.9h-1V377.9h-1V374.4h-1V373.0h-1V373.2h-1V372.2h-1V372.9h-1V374.7h-1V373.3h-1V373.3h-1V372.5h-1V372.7h-1V375.8h-1V374.2h-1V373.7h-1V373.0h-1V374.9h-1V372.6h-1V375.6h-1V374.3h-1V372.7h-1V372.5h-1V373.2h-1V376.0h-1V376.2h-1V374.3h-1V373.7h-1V376.5h-1V373.5h-1V376.7h-1V374.9h-1V378.7h-1V377.0h-1V376.3h-1V374.6h-1V373.8h-1V375.6h-1V372.9h-1V376.1h-1V375.2h-1V373.0h-1V372.9h-1V376.0h-1V377.4h-1V379.6h-1V376.6h-1V373.5h-1V372.5h-1V375.7h-1V375.9h-1V372.7h-1V374.3h-1V374.5h-1V374.2h-1V376.7h-1V374.0h-1V378.2h-1V372.1h-1V372.9h-1V373.0h-1V373.7h-1V373.2h-1V372.8h-1V372.4h-1V375.9h-1V374.0h-1V373.1h-1V376.9h-1V372.9h-1V376.0h-1V375.3h-1V372.7h-1Z" fill="#ff8000"/>
<line x1="108.4" y1="361.4" x2="1390.0" y2="361.4" stroke="#ffffff" stroke-width="1.1" stroke-dasharray="2.8 4.2"/>
<line x1="108.4" y1="547.4" x2="1396.0" y2="547.4" stroke="#f0f0f0" stroke-width="1.3"/>
<rect x="219.1" y="293.5" width="1.8" height="714.7" fill="#0000f0"/>
<rect x="1153.0" y="293.5" width="1.2" height="713.9" fill="#0000e0"/>
<path d="M213.2 295.3 H225.8 L219.5 308 Z" fill="#f4f4f4"/>
<path d="M213.2 313.8 H225.8 M219.5 313.8 V325.2" fill="none" stroke="#f4f4f4" stroke-width="2.8"/>
<path d="M219.4 988.4 L203 1005 H236 Z" fill="none" stroke="#949494" stroke-width="1.8"/>
<text x="111.0" y="357.6" font-size="14.57" font-family="Liberation Mono" textLength="32.6" lengthAdjust="spacingAndGlyphs" fill="#8f8fe6">34 mV</text>
<text x="111.0" y="429.0" font-size="14.57" font-family="Liberation Mono" textLength="32.6" lengthAdjust="spacingAndGlyphs" fill="#8f8fe6">14 mV</text>
<text x="111.0" y="500.4" font-size="14.57" font-family="Liberation Mono" textLength="32.6" lengthAdjust="spacingAndGlyphs" fill="#8f8fe6">-6 mV</text>
<text x="111.0" y="571.8" font-size="14.57" font-family="Liberation Mono" textLength="39.1" lengthAdjust="spacingAndGlyphs" fill="#8f8fe6">-26 mV</text>
<text x="111.0" y="643.2" font-size="14.57" font-family="Liberation Mono" textLength="39.1" lengthAdjust="spacingAndGlyphs" fill="#8f8fe6">-46 mV</text>
<text x="111.0" y="714.5" font-size="14.57" font-family="Liberation Mono" textLength="39.1" lengthAdjust="spacingAndGlyphs" fill="#8f8fe6">-66 mV</text>
<text x="111.0" y="785.9" font-size="14.57" font-family="Liberation Mono" textLength="39.1" lengthAdjust="spacingAndGlyphs" fill="#8f8fe6">-86 mV</text>
<text x="111.0" y="857.3" font-size="14.57" font-family="Liberation Mono" textLength="45.6" lengthAdjust="spacingAndGlyphs" fill="#8f8fe6">-106 mV</text>
<text x="111.0" y="928.7" font-size="14.57" font-family="Liberation Mono" textLength="45.6" lengthAdjust="spacingAndGlyphs" fill="#8f8fe6">-126 mV</text>
<text x="111.0" y="1000.1" font-size="14.57" font-family="Liberation Mono" textLength="45.6" lengthAdjust="spacingAndGlyphs" fill="#8f8fe6">-146 mV</text>
<text x="222.2" y="1000.2" font-size="13.96" font-family="Liberation Mono" textLength="19.8" lengthAdjust="spacingAndGlyphs" fill="#8f8fe6">0 s</text>
<text x="333.5" y="1000.2" font-size="13.96" font-family="Liberation Mono" textLength="33.0" lengthAdjust="spacingAndGlyphs" fill="#8f8fe6">100 s</text>
<text x="444.7" y="1000.2" font-size="13.96" font-family="Liberation Mono" textLength="33.0" lengthAdjust="spacingAndGlyphs" fill="#8f8fe6">200 s</text>
<text x="555.9" y="1000.2" font-size="13.96" font-family="Liberation Mono" textLength="33.0" lengthAdjust="spacingAndGlyphs" fill="#8f8fe6">300 s</text>
<text x="667.2" y="1000.2" font-size="13.96" font-family="Liberation Mono" textLength="33.0" lengthAdjust="spacingAndGlyphs" fill="#8f8fe6">400 s</text>
<text x="778.4" y="1000.2" font-size="13.96" font-family="Liberation Mono" textLength="33.0" lengthAdjust="spacingAndGlyphs" fill="#8f8fe6">500 s</text>
<text x="889.6" y="1000.2" font-size="13.96" font-family="Liberation Mono" textLength="33.0" lengthAdjust="spacingAndGlyphs" fill="#8f8fe6">600 s</text>
<text x="1000.9" y="1000.2" font-size="13.96" font-family="Liberation Mono" textLength="33.0" lengthAdjust="spacingAndGlyphs" fill="#8f8fe6">700 s</text>
<text x="1112.1" y="1000.2" font-size="13.96" font-family="Liberation Mono" textLength="33.0" lengthAdjust="spacingAndGlyphs" fill="#8f8fe6">800 s</text>
<text x="1223.3" y="1000.2" font-size="13.96" font-family="Liberation Mono" textLength="33.0" lengthAdjust="spacingAndGlyphs" fill="#8f8fe6">900 s</text>
<text x="1334.6" y="1000.2" font-size="13.96" font-family="Liberation Mono" textLength="26.4" lengthAdjust="spacingAndGlyphs" fill="#8f8fe6">1 ks</text>
<path d="M1388 361.4 L1394.2 356.4 V366.4 Z" fill="#f4f4f4"/>
<text x="1398.6" y="368.5" font-size="20.06" textLength="8.6" lengthAdjust="spacingAndGlyphs" fill="#f4f4f4">2</text>
<path d="M1388.4 547.4 L1394.6 542.6 V552.2 Z" fill="#ff8000"/>
<text x="1398.4" y="554.8" font-size="20.93" font-weight="bold" textLength="6.8" lengthAdjust="spacingAndGlyphs" fill="#ff8000">1</text>
<text x="1420.8" y="364.3" font-size="13.95" textLength="16.2" lengthAdjust="spacingAndGlyphs" fill="#e07000">Prs</text>
<text x="1412.9" y="407.8" font-size="13.81" textLength="24.0" lengthAdjust="spacingAndGlyphs" fill="#00c800">PRK</text>
<text x="1421.4" y="485.6" font-size="13.81" textLength="15.6" lengthAdjust="spacingAndGlyphs" fill="#8a88ee">Pis</text>
<text x="1418.4" y="650.2" font-size="13.81" textLength="18.6" lengthAdjust="spacingAndGlyphs" fill="#e6e600">PIK</text>
<path d="M108.4 293.5 H1443.2 V1007.4 H108.4 Z" fill="none" stroke="#c4c4c4" stroke-width="1.4"/>
<path d="M65.4 354.6 H97.2 L107.2 365.0 L97.2 375.4 H65.4" fill="none" stroke="#a85400" stroke-width="1.3"/><text x="69.6" y="371.9" font-size="20.06" textLength="17.2" lengthAdjust="spacingAndGlyphs" fill="#a85400" stroke="#a85400" stroke-width="0.4">C3</text>
<path d="M65.4 397.9 H97.2 L107.2 408.3 L97.2 418.7 H65.4" fill="none" stroke="#008c00" stroke-width="1.3"/><text x="69.6" y="415.2" font-size="20.06" textLength="17.2" lengthAdjust="spacingAndGlyphs" fill="#008c00" stroke="#008c00" stroke-width="0.4">C2</text>
<path d="M65.4 475.8 H97.2 L107.2 486.2 L97.2 496.6 H65.4 Z" fill="#9a98fc"/><text x="69.6" y="493.1" font-size="20.06" textLength="17.2" lengthAdjust="spacingAndGlyphs" fill="#000" stroke="#000" stroke-width="0.5">C4</text>
<path d="M65.4 640.2 H97.2 L107.2 650.6 L97.2 661.0 H65.4" fill="none" stroke="#9a9000" stroke-width="1.3"/><text x="69.6" y="657.5" font-size="20.06" textLength="17.2" lengthAdjust="spacingAndGlyphs" fill="#9a9000" stroke="#9a9000" stroke-width="0.4">C1</text>
<rect x="65.0" y="1009.0" width="1422.0" height="42.4" fill="#192024"/>
<rect x="774.8" y="1009.0" width="2.2" height="42.4" fill="#05080a"/>
<rect x="66.6" y="1017.3" width="27.6" height="27.6" fill="#05080a"/>
<rect x="67.4" y="1018.1" width="26.0" height="26.0" fill="#00ff00"/>
<text x="71.4" y="1037.6" font-size="17.73" textLength="18.0" lengthAdjust="spacingAndGlyphs" fill="#005a00">C2</text>
<text x="95.8" y="1038.4" font-size="27.62" textLength="13.6" lengthAdjust="spacingAndGlyphs" fill="#fff">[ ]</text>
<text x="114.7" y="1039.3" font-size="24.13" textLength="141.3" lengthAdjust="spacingAndGlyphs" fill="#fff" stroke="#fff" stroke-width="0.3">Mean: 68.64 µV</text>
<rect x="422.1" y="1017.3" width="28.0" height="27.6" fill="#05080a"/>
<rect x="422.9" y="1018.1" width="26.4" height="26.0" fill="#9a98fc"/>
<text x="427.4" y="1037.6" font-size="17.73" textLength="17.6" lengthAdjust="spacingAndGlyphs" fill="#1e1e44">C4</text>
<text x="470.6" y="1039.3" font-size="24.13" textLength="163.6" lengthAdjust="spacingAndGlyphs" fill="#fff" stroke="#fff" stroke-width="0.3">Mean: -26.957 mV</text>
<rect x="784.8" y="1016.7" width="28.0" height="27.6" fill="#05080a"/>
<rect x="785.6" y="1017.5" width="26.4" height="26.0" fill="#9a98fc"/>
<text x="790.2" y="1037.0" font-size="17.73" textLength="17.6" lengthAdjust="spacingAndGlyphs" fill="#1e1e44">C4</text>
<text x="818.2" y="1037.2" font-size="19.77" textLength="111.4" lengthAdjust="spacingAndGlyphs" fill="#fff" stroke="#fff" stroke-width="0.5">V1: -16.876 mV</text>
<text x="983.0" y="1037.2" font-size="19.77" textLength="98.0" lengthAdjust="spacingAndGlyphs" fill="#fff" stroke="#fff" stroke-width="0.5">V2: 34.84 mV</text>
<text x="1147.4" y="1037.2" font-size="19.77" textLength="109.4" lengthAdjust="spacingAndGlyphs" fill="#fff" stroke="#fff" stroke-width="0.5">ΔV: 51.716 mV</text>
<rect x="112.1" y="1052.0" width="173.5" height="45.2" fill="#2b353d"/>
<rect x="65.0" y="1052.0" width="220.6" height="2.6" fill="#857c00"/>
<rect x="65.0" y="1052.0" width="47.1" height="45.2" fill="#857c00"/>
<text x="76.8" y="1082.8" font-size="24.71" textLength="18.8" lengthAdjust="spacingAndGlyphs" fill="#0a0a0a" stroke="#0a0a0a" stroke-width="0.3">C1</text>
<text x="132.9" y="1086.0" font-size="27.91" textLength="38.1" lengthAdjust="spacingAndGlyphs" fill="#fff">500</text>
<text x="177.0" y="1086.0" font-size="21.22" textLength="33.0" lengthAdjust="spacingAndGlyphs" fill="#fff">mV/</text>
<text x="266.0" y="1072.2" font-size="22.38" textLength="15.4" lengthAdjust="spacingAndGlyphs" fill="#fff">Ω</text>
<text x="269.2" y="1094.5" font-size="13.95" textLength="13.8" lengthAdjust="spacingAndGlyphs" fill="#d8d8d8">1:1</text>
<rect x="335.6" y="1052.0" width="173.4" height="45.2" fill="#2b353d"/>
<rect x="288.0" y="1052.0" width="221.0" height="2.6" fill="#008000"/>
<rect x="288.0" y="1052.0" width="47.6" height="45.2" fill="#008000"/>
<text x="300.8" y="1082.8" font-size="24.71" textLength="21.5" lengthAdjust="spacingAndGlyphs" fill="#0a0a0a" stroke="#0a0a0a" stroke-width="0.3">C2</text>
<text x="383.0" y="1086.0" font-size="27.91" textLength="11.2" lengthAdjust="spacingAndGlyphs" fill="#fff">5</text>
<text x="400.4" y="1086.0" font-size="21.22" textLength="32.4" lengthAdjust="spacingAndGlyphs" fill="#fff">mV/</text>
<text x="489.4" y="1072.2" font-size="22.38" textLength="15.4" lengthAdjust="spacingAndGlyphs" fill="#fff">Ω</text>
<text x="492.6" y="1094.5" font-size="13.95" textLength="13.8" lengthAdjust="spacingAndGlyphs" fill="#d8d8d8">1:1</text>
<rect x="558.8" y="1052.0" width="174.0" height="45.2" fill="#2b353d"/>
<rect x="511.2" y="1052.0" width="221.6" height="2.6" fill="#824000"/>
<rect x="511.2" y="1052.0" width="47.6" height="45.2" fill="#824000"/>
<text x="524.0" y="1082.8" font-size="24.71" textLength="21.5" lengthAdjust="spacingAndGlyphs" fill="#0a0a0a" stroke="#0a0a0a" stroke-width="0.3">C3</text>
<text x="593.5" y="1086.0" font-size="27.91" textLength="25.5" lengthAdjust="spacingAndGlyphs" fill="#fff">20</text>
<text x="625.0" y="1086.0" font-size="21.22" textLength="32.2" lengthAdjust="spacingAndGlyphs" fill="#fff">mV/</text>
<text x="713.2" y="1072.2" font-size="22.38" textLength="15.4" lengthAdjust="spacingAndGlyphs" fill="#fff">Ω</text>
<text x="716.4" y="1094.5" font-size="13.95" textLength="13.8" lengthAdjust="spacingAndGlyphs" fill="#d8d8d8">1:1</text>
<rect x="782.8" y="1052.0" width="173.5" height="45.2" fill="#2b353d"/>
<rect x="735.0" y="1052.0" width="221.3" height="2.6" fill="#9a98fc"/>
<rect x="735.0" y="1052.0" width="47.8" height="45.2" fill="#9a98fc"/>
<text x="747.8" y="1082.8" font-size="24.71" textLength="21.5" lengthAdjust="spacingAndGlyphs" fill="#0a0a0a" stroke="#0a0a0a" stroke-width="0.3">C4</text>
<text x="816.3" y="1086.0" font-size="27.91" textLength="26.1" lengthAdjust="spacingAndGlyphs" fill="#fff">20</text>
<text x="848.0" y="1086.0" font-size="21.22" textLength="32.4" lengthAdjust="spacingAndGlyphs" fill="#fff">mV/</text>
<text x="936.7" y="1072.2" font-size="22.38" textLength="15.4" lengthAdjust="spacingAndGlyphs" fill="#fff">Ω</text>
<text x="939.9" y="1094.5" font-size="13.95" textLength="13.8" lengthAdjust="spacingAndGlyphs" fill="#d8d8d8">1:1</text>
<rect x="958.8" y="1052.0" width="442.2" height="45.2" fill="#2b353d"/>
<path d="M1403.3 1097.2 V1051.4 L1446 1012.6 L1487 1050 V1097.2 Z" fill="#2b353d"/>
<path d="M1446 1016.6 L1481.8 1052.2 L1446 1086.2 L1410.4 1052.2 Z" fill="none" stroke="#ff8800" stroke-width="2.4"/>
<path d="M1446 1025.6 L1472.6 1052.2 L1446 1077.6 L1419.4 1052.2 Z" fill="none" stroke="#1e9eff" stroke-width="5.4"/>
<path d="M1457.4 1039 Q1448.6 1046 1446.8 1054 Q1440 1056.6 1433.8 1064.4" fill="none" stroke="#1e9eff" stroke-width="2.6"/>
<text x="1434.2" y="1052.4" font-size="15.50" font-weight="bold" fill="#1e9eff">R</text>
<text x="1447.6" y="1066.0" font-size="16.50" font-weight="bold" fill="#1e9eff">S</text>
<text x="1424.2" y="1095.8" font-size="19.48" font-weight="bold" textLength="43.2" lengthAdjust="spacingAndGlyphs" fill="#fff">Menu</text>
<defs>
<filter id="fSh" x="-40%" y="-50%" width="180%" height="200%"><feGaussianBlur stdDeviation="8.5"/></filter>
<filter id="fShK" x="-50%" y="-50%" width="200%" height="200%"><feGaussianBlur stdDeviation="12"/></filter>
<linearGradient id="bGrey" x1="0" y1="0" x2="0" y2="1"><stop offset="0" stop-color="#c1c2cb"/><stop offset="1" stop-color="#a7a8b3"/></linearGradient>
<linearGradient id="bDark" x1="0" y1="0" x2="0" y2="1"><stop offset="0" stop-color="#949494"/><stop offset="1" stop-color="#888888"/></linearGradient>
<linearGradient id="bWhite" x1="0" y1="0" x2="0" y2="1"><stop offset="0" stop-color="#fbfbfb"/><stop offset="1" stop-color="#e6e6e8"/></linearGradient>
<linearGradient id="bGreen" x1="0" y1="0" x2="0" y2="1"><stop offset="0" stop-color="#93f693"/><stop offset="1" stop-color="#7ce67c"/></linearGradient>
<linearGradient id="bTeal" x1="0" y1="0" x2="0" y2="1"><stop offset="0" stop-color="#3bb2a2"/><stop offset="1" stop-color="#33a595"/></linearGradient>
<linearGradient id="bCh1" x1="0" y1="0" x2="0" y2="1"><stop offset="0" stop-color="#f6f484"/><stop offset="1" stop-color="#efec74"/></linearGradient>
<linearGradient id="bCh2" x1="0" y1="0" x2="0" y2="1"><stop offset="0" stop-color="#aef588"/><stop offset="1" stop-color="#a2ec78"/></linearGradient>
<linearGradient id="bCh3" x1="0" y1="0" x2="0" y2="1"><stop offset="0" stop-color="#f7b690"/><stop offset="1" stop-color="#f0aa82"/></linearGradient>
<linearGradient id="bCh4" x1="0" y1="0" x2="0" y2="1"><stop offset="0" stop-color="#cbdcf8"/><stop offset="1" stop-color="#bfd4f4"/></linearGradient>
<linearGradient id="kRim" x1="0.25" y1="0.05" x2="0.75" y2="0.97"><stop offset="0" stop-color="#c6c7d0"/><stop offset="0.38" stop-color="#a6a7b2"/><stop offset="0.62" stop-color="#5e5f6a"/><stop offset="0.86" stop-color="#2c2d35"/><stop offset="1" stop-color="#24252c"/></linearGradient>
<radialGradient id="kFace" cx="0.45" cy="0.38" r="0.7"><stop offset="0" stop-color="#b9bac5"/><stop offset="0.85" stop-color="#b4b5c0"/><stop offset="1" stop-color="#acadb8"/></radialGradient>
<linearGradient id="kBevel" x1="0.2" y1="0.1" x2="0.8" y2="0.95"><stop offset="0" stop-color="#c3c4ce"/><stop offset="0.5" stop-color="#b0b1bc"/><stop offset="1" stop-color="#8b8c98"/></linearGradient>
<linearGradient id="kRing" x1="0.2" y1="0" x2="0.8" y2="1"><stop offset="0" stop-color="#c6dbf8"/><stop offset="0.6" stop-color="#b2ccf1"/><stop offset="1" stop-color="#98b8e6"/></linearGradient>
<linearGradient id="kOut" x1="0.3" y1="0" x2="0.7" y2="1"><stop offset="0" stop-color="#8e8f9a"/><stop offset="0.5" stop-color="#5a5b66"/><stop offset="1" stop-color="#2c2d36"/></linearGradient>
<linearGradient id="gBlueP" x1="0" y1="0" x2="1" y2="0"><stop offset="0" stop-color="#4b6fa8"/><stop offset="0.5" stop-color="#4f75ae"/><stop offset="1" stop-color="#4b6fa8"/></linearGradient>
</defs>
<rect x="1584.0" y="184.0" width="373.0" height="958.6" fill="url(#gBlueP)"/>
<rect x="1956.6" y="184.0" width="373.4" height="958.6" fill="#2f344c"/>
<g filter="url(#fSh)" opacity="0.55"><rect x="1609.6" y="227.2" width="92.6" height="70.6" rx="14" fill="#1c3468"/><rect x="1609.6" y="338.3" width="92.6" height="70.6" rx="14" fill="#1c3468"/><rect x="1609.6" y="449.5" width="92.6" height="70.6" rx="14" fill="#1c3468"/><rect x="1609.6" y="591.9" width="92.6" height="70.6" rx="14" fill="#1c3468"/><rect x="1609.6" y="705.7" width="92.6" height="70.6" rx="14" fill="#1c3468"/><rect x="1609.6" y="819.8" width="92.6" height="70.6" rx="14" fill="#1c3468"/><rect x="1609.6" y="933.4" width="92.6" height="70.6" rx="14" fill="#1c3468"/><rect x="1609.6" y="1047.5" width="92.6" height="70.6" rx="14" fill="#1c3468"/><rect x="1726.9" y="1047.5" width="92.6" height="70.6" rx="14" fill="#1c3468"/><rect x="1844.2" y="1047.5" width="92.6" height="70.6" rx="14" fill="#1c3468"/></g>
<g filter="url(#fShK)" opacity="0.88"><circle cx="1833.8" cy="293.6" r="46.6" fill="#142a60"/><circle cx="1834.0" cy="490.0" r="56.3" fill="#142a60"/><circle cx="1834.0" cy="698.9" r="63.6" fill="#142a60"/><circle cx="1834.0" cy="953.9" r="73.7" fill="#142a60"/></g>
<g filter="url(#fSh)" opacity="0.72"><rect x="1976.9" y="227.0" width="92.6" height="70.6" rx="14" fill="#10121c"/><rect x="1976.9" y="308.3" width="92.6" height="70.6" rx="14" fill="#10121c"/><rect x="1976.9" y="389.7" width="92.6" height="70.6" rx="14" fill="#10121c"/><rect x="2211.1" y="227.0" width="92.6" height="70.6" rx="14" fill="#10121c"/><rect x="2211.1" y="308.3" width="92.6" height="70.6" rx="14" fill="#10121c"/><rect x="2211.1" y="389.7" width="92.6" height="70.6" rx="14" fill="#10121c"/><rect x="1976.9" y="532.1" width="92.6" height="70.6" rx="14" fill="#10121c"/><rect x="2093.9" y="532.1" width="92.6" height="70.6" rx="14" fill="#10121c"/><rect x="2211.1" y="532.1" width="92.6" height="70.6" rx="14" fill="#10121c"/><rect x="1976.9" y="613.4" width="92.6" height="70.6" rx="14" fill="#10121c"/><rect x="2093.9" y="613.4" width="92.6" height="70.6" rx="14" fill="#10121c"/><rect x="2211.1" y="613.4" width="92.6" height="70.6" rx="14" fill="#10121c"/><rect x="1976.9" y="884.9" width="92.6" height="70.6" rx="14" fill="#10121c"/><rect x="2093.9" y="884.9" width="92.6" height="70.6" rx="14" fill="#10121c"/><rect x="2211.1" y="884.9" width="92.6" height="70.6" rx="14" fill="#10121c"/><rect x="1976.9" y="966.1" width="92.6" height="70.6" rx="14" fill="#10121c"/><rect x="2093.9" y="966.1" width="92.6" height="70.6" rx="14" fill="#10121c"/><rect x="2211.1" y="966.1" width="92.6" height="70.6" rx="14" fill="#10121c"/><rect x="1976.9" y="1047.7" width="92.6" height="70.6" rx="14" fill="#10121c"/><rect x="2093.9" y="1047.7" width="92.6" height="70.6" rx="14" fill="#10121c"/><rect x="2211.1" y="1047.7" width="92.6" height="70.6" rx="14" fill="#10121c"/></g>
<g filter="url(#fShK)" opacity="0.85"><circle cx="2146.2" cy="358.7" r="46.4" fill="#0a0c15"/><circle cx="2146.2" cy="829.1" r="56.3" fill="#0a0c15"/></g>
<rect x="1597.0" y="543.4" width="347.0" height="4.4" fill="#f2f2f4"/>
<rect x="1970.0" y="483.2" width="346.6" height="4.4" fill="#f2f2f4"/>
<rect x="1970.0" y="705.2" width="346.6" height="4.4" fill="#f2f2f4"/>
<text x="1618.7" y="217.3" font-size="25.29" font-weight="bold" textLength="93.3" lengthAdjust="spacingAndGlyphs" fill="#f2f2f4" stroke="#f2f2f4" stroke-width="0.3">Horizontal</text>
<text x="1794.0" y="233.9" font-size="24.13" font-weight="bold" textLength="68.8" lengthAdjust="spacingAndGlyphs" fill="#f2f2f4" stroke="#f2f2f4" stroke-width="0.3">Position</text>
<text x="1805.6" y="410.6" font-size="23.55" font-weight="bold" textLength="45.6" lengthAdjust="spacingAndGlyphs" fill="#f2f2f4" stroke="#f2f2f4" stroke-width="0.3">Scale</text>
<text x="1618.6" y="582.3" font-size="25.29" font-weight="bold" textLength="70.4" lengthAdjust="spacingAndGlyphs" fill="#f2f2f4" stroke="#f2f2f4" stroke-width="0.3">Vertical</text>
<text x="1805.6" y="861.0" font-size="23.55" font-weight="bold" textLength="45.6" lengthAdjust="spacingAndGlyphs" fill="#f2f2f4" stroke="#f2f2f4" stroke-width="0.3">Scale</text>
<text x="1991.4" y="214.7" font-size="25.00" font-weight="bold" textLength="65.5" lengthAdjust="spacingAndGlyphs" fill="#f2f2f4" stroke="#f2f2f4" stroke-width="0.3">Trigger</text>
<text x="2114.3" y="297.8" font-size="22.38" font-weight="bold" textLength="52.6" lengthAdjust="spacingAndGlyphs" fill="#f2f2f4" stroke="#f2f2f4" stroke-width="0.3">Levels</text>
<text x="1991.4" y="522.3" font-size="25.29" font-weight="bold" textLength="58.8" lengthAdjust="spacingAndGlyphs" fill="#f2f2f4" stroke="#f2f2f4" stroke-width="0.3">Action</text>
<text x="1991.4" y="741.4" font-size="25.00" font-weight="bold" textLength="77.0" lengthAdjust="spacingAndGlyphs" fill="#f2f2f4" stroke="#f2f2f4" stroke-width="0.3">Analysis</text>
<rect x="1614.6" y="240.2" width="82.6" height="54.6" rx="8" fill="#9c9da6"/><rect x="1615.9" y="241.5" width="80.0" height="52.0" rx="6.8" fill="url(#bGrey)" stroke="#55565e" stroke-width="0.9"/><text x="1632.6" y="275.2" font-size="22.67" font-weight="bold" textLength="46.7" lengthAdjust="spacingAndGlyphs" fill="#000" stroke="#000" stroke-width="0.35">Zoom</text>
<rect x="1614.6" y="351.3" width="82.6" height="54.6" rx="8" fill="#9c9da6"/><rect x="1615.9" y="352.6" width="80.0" height="52.0" rx="6.8" fill="url(#bGrey)" stroke="#55565e" stroke-width="0.9"/><text x="1635.2" y="375.1" font-size="22.67" font-weight="bold" textLength="41.4" lengthAdjust="spacingAndGlyphs" fill="#000" stroke="#000" stroke-width="0.35">Hori-</text><text x="1630.5" y="397.4" font-size="22.67" font-weight="bold" textLength="50.8" lengthAdjust="spacingAndGlyphs" fill="#000" stroke="#000" stroke-width="0.35">zontal</text>
<rect x="1614.6" y="462.5" width="82.6" height="54.6" rx="8" fill="#9c9da6"/><rect x="1615.9" y="463.8" width="80.0" height="52.0" rx="6.8" fill="url(#bGrey)" stroke="#55565e" stroke-width="0.9"/><text x="1628.2" y="485.4" font-size="22.67" font-weight="bold" textLength="55.3" lengthAdjust="spacingAndGlyphs" fill="#000" stroke="#000" stroke-width="0.35">Acqui-</text><text x="1632.8" y="508.2" font-size="22.67" font-weight="bold" textLength="46.3" lengthAdjust="spacingAndGlyphs" fill="#000" stroke="#000" stroke-width="0.35">sition</text>
<rect x="1614.6" y="604.9" width="82.6" height="54.6" rx="8" fill="#d0cc68"/><rect x="1615.9" y="606.2" width="80.0" height="52.0" rx="6.8" fill="url(#bCh1)" stroke="#d8d56c" stroke-width="0.9"/><text x="1640.2" y="640.0" font-size="22.67" font-weight="bold" textLength="31.3" lengthAdjust="spacingAndGlyphs" fill="#000" stroke="#000" stroke-width="0.35">Ch1</text>
<rect x="1614.6" y="718.7" width="82.6" height="54.6" rx="8" fill="#8ccc6c"/><rect x="1615.9" y="720.0" width="80.0" height="52.0" rx="6.8" fill="url(#bCh2)" stroke="#94d672" stroke-width="0.9"/><text x="1639.7" y="753.8" font-size="22.67" font-weight="bold" textLength="32.4" lengthAdjust="spacingAndGlyphs" fill="#000" stroke="#000" stroke-width="0.35">Ch2</text>
<rect x="1614.6" y="832.8" width="82.6" height="54.6" rx="8" fill="#d09474"/><rect x="1615.9" y="834.1" width="80.0" height="52.0" rx="6.8" fill="url(#bCh3)" stroke="#dc9c78" stroke-width="0.9"/><text x="1639.7" y="867.9" font-size="22.67" font-weight="bold" textLength="32.4" lengthAdjust="spacingAndGlyphs" fill="#000" stroke="#000" stroke-width="0.35">Ch3</text>
<rect x="1614.6" y="946.4" width="82.6" height="54.6" rx="8" fill="#a4b8d8"/><rect x="1615.9" y="947.7" width="80.0" height="52.0" rx="6.8" fill="url(#bCh4)" stroke="#aec4e6" stroke-width="0.9"/><text x="1639.5" y="981.5" font-size="22.67" font-weight="bold" textLength="32.8" lengthAdjust="spacingAndGlyphs" fill="#000" stroke="#000" stroke-width="0.35">Ch4</text>
<rect x="1614.6" y="1060.5" width="82.6" height="54.6" rx="8" fill="#7c7c7e"/><rect x="1615.9" y="1061.8" width="80.0" height="52.0" rx="6.8" fill="url(#bDark)" stroke="#5c5c5e" stroke-width="0.9"/><text x="1632.9" y="1093.8" font-size="22.67" font-weight="bold" textLength="46.0" lengthAdjust="spacingAndGlyphs" fill="#000" stroke="#000" stroke-width="0.35">Logic</text>
<rect x="1731.9" y="1060.5" width="82.6" height="54.6" rx="8" fill="#7c7c7e"/><rect x="1733.2" y="1061.8" width="80.0" height="52.0" rx="6.8" fill="url(#bDark)" stroke="#5c5c5e" stroke-width="0.9"/><text x="1759.4" y="1096.0" font-size="22.67" font-weight="bold" textLength="27.7" lengthAdjust="spacingAndGlyphs" fill="#000" stroke="#000" stroke-width="0.35">Ref</text>
<rect x="1849.2" y="1060.5" width="82.6" height="54.6" rx="8" fill="#7c7c7e"/><rect x="1850.5" y="1061.8" width="80.0" height="52.0" rx="6.8" fill="url(#bDark)" stroke="#5c5c5e" stroke-width="0.9"/><text x="1868.2" y="1096.0" font-size="22.67" font-weight="bold" textLength="44.6" lengthAdjust="spacingAndGlyphs" fill="#000" stroke="#000" stroke-width="0.35">Math</text>
<rect x="1981.9" y="240.0" width="82.6" height="54.6" rx="8" fill="#9c9da6"/><rect x="1983.2" y="241.3" width="80.0" height="52.0" rx="6.8" fill="url(#bGrey)" stroke="#55565e" stroke-width="0.9"/><text x="1993.0" y="273.0" font-size="22.67" font-weight="bold" textLength="60.5" lengthAdjust="spacingAndGlyphs" fill="#000" stroke="#000" stroke-width="0.35">Trigger</text>
<rect x="1981.9" y="321.3" width="82.6" height="54.6" rx="8" fill="#c8c8cc"/><rect x="1983.2" y="322.6" width="80.0" height="52.0" rx="6.8" fill="url(#bWhite)" stroke="#a0a0a6" stroke-width="0.9"/><text x="1994.0" y="356.3" font-size="22.67" font-weight="bold" textLength="58.3" lengthAdjust="spacingAndGlyphs" fill="#000" stroke="#000" stroke-width="0.35">Source</text>
<rect x="1981.9" y="402.7" width="82.6" height="54.6" rx="8" fill="#c8c8cc"/><rect x="1983.2" y="404.0" width="80.0" height="52.0" rx="6.8" fill="url(#bWhite)" stroke="#a0a0a6" stroke-width="0.9"/><text x="2003.4" y="425.6" font-size="22.67" font-weight="bold" textLength="39.7" lengthAdjust="spacingAndGlyphs" fill="#000" stroke="#000" stroke-width="0.35">Auto</text><text x="2000.5" y="448.3" font-size="22.67" font-weight="bold" textLength="45.5" lengthAdjust="spacingAndGlyphs" fill="#000" stroke="#000" stroke-width="0.35">Norm</text>
<rect x="2216.1" y="240.0" width="82.6" height="54.6" rx="8" fill="#6ccc70"/><rect x="2217.4" y="241.3" width="80.0" height="52.0" rx="6.8" fill="url(#bGreen)" stroke="#62c466" stroke-width="0.9"/><text x="2241.1" y="261.8" font-size="22.67" font-weight="bold" textLength="32.7" lengthAdjust="spacingAndGlyphs" fill="#000" stroke="#000" stroke-width="0.35">Run</text><text x="2238.4" y="283.9" font-size="22.67" font-weight="bold" textLength="38.0" lengthAdjust="spacingAndGlyphs" fill="#000" stroke="#000" stroke-width="0.35">Stop</text>
<rect x="2216.1" y="321.3" width="82.6" height="54.6" rx="8" fill="#7c7c7e"/><rect x="2217.4" y="322.6" width="80.0" height="52.0" rx="6.8" fill="url(#bDark)" stroke="#5c5c5e" stroke-width="0.9"/><text x="2230.8" y="354.2" font-size="22.67" font-weight="bold" textLength="53.3" lengthAdjust="spacingAndGlyphs" fill="#000" stroke="#000" stroke-width="0.35">Single</text>
<rect x="2216.1" y="402.7" width="82.6" height="54.6" rx="8" fill="#9c9da6"/><rect x="2217.4" y="404.0" width="80.0" height="52.0" rx="6.8" fill="url(#bGrey)" stroke="#55565e" stroke-width="0.9"/><text x="2236.5" y="423.9" font-size="22.67" font-weight="bold" textLength="41.8" lengthAdjust="spacingAndGlyphs" fill="#000" stroke="#000" stroke-width="0.35">Force</text><text x="2229.8" y="446.7" font-size="22.67" font-weight="bold" textLength="55.2" lengthAdjust="spacingAndGlyphs" fill="#000" stroke="#000" stroke-width="0.35">Trigger</text>
<rect x="1981.9" y="545.1" width="82.6" height="54.6" rx="8" fill="#9c9da6"/><rect x="1983.2" y="546.4" width="80.0" height="52.0" rx="6.8" fill="url(#bGrey)" stroke="#55565e" stroke-width="0.9"/><path d="M2004.0 560.0 h8.6 l2.4 -3.6 q0.6 -0.8 1.6 -0.8 h11.4 q1 0 1.6 0.8 l2.4 3.6 h12.4 q3.2 0 3.2 3.2 v20.8 q0 3.2 -3.2 3.2 h-37.8 q-3.2 0 -3.2 -3.2 v-20.8 q0 -3.2 3.2 -3.2 z" fill="#07080a"/><rect x="2004.4" y="558.4" width="5.2" height="2.6" rx="0.8" fill="#07080a"/><circle cx="2023.3" cy="572.7" r="9.1" fill="none" stroke="#c6c7d0" stroke-width="2.2"/>
<rect x="2098.9" y="545.1" width="82.6" height="54.6" rx="8" fill="#9c9da6"/><rect x="2100.2" y="546.4" width="80.0" height="52.0" rx="6.8" fill="url(#bGrey)" stroke="#55565e" stroke-width="0.9"/><text x="2120.3" y="568.7" font-size="22.67" font-weight="bold" textLength="39.7" lengthAdjust="spacingAndGlyphs" fill="#000" stroke="#000" stroke-width="0.35">Save</text><text x="2120.9" y="591.1" font-size="22.67" font-weight="bold" textLength="38.5" lengthAdjust="spacingAndGlyphs" fill="#000" stroke="#000" stroke-width="0.35">Load</text>
<rect x="2216.1" y="545.1" width="82.6" height="54.6" rx="8" fill="#8e9698"/><rect x="2217.4" y="546.4" width="80.0" height="52.0" rx="6.8" fill="url(#bTeal)" stroke="#2a8276" stroke-width="0.9"/><text x="2224.9" y="580.0" font-size="22.67" font-weight="bold" textLength="65.0" lengthAdjust="spacingAndGlyphs" fill="#000" stroke="#000" stroke-width="0.35">Autoset</text>
<rect x="1981.9" y="626.4" width="82.6" height="54.6" rx="8" fill="#7c7c7e"/><rect x="1983.2" y="627.7" width="80.0" height="52.0" rx="6.8" fill="url(#bDark)" stroke="#5c5c5e" stroke-width="0.9"/><text x="2000.2" y="647.6" font-size="22.67" font-weight="bold" textLength="46.0" lengthAdjust="spacingAndGlyphs" fill="#000" stroke="#000" stroke-width="0.35">Touch</text><text x="2005.7" y="674.4" font-size="22.67" font-weight="bold" textLength="35.1" lengthAdjust="spacingAndGlyphs" fill="#000" stroke="#000" stroke-width="0.35">Lock</text>
<rect x="2098.9" y="626.4" width="82.6" height="54.6" rx="8" fill="#9c9da6"/><rect x="2100.2" y="627.7" width="80.0" height="52.0" rx="6.8" fill="url(#bGrey)" stroke="#55565e" stroke-width="0.9"/><text x="2118.8" y="650.1" font-size="22.67" font-weight="bold" textLength="42.7" lengthAdjust="spacingAndGlyphs" fill="#000" stroke="#000" stroke-width="0.35">Clear</text><text x="2111.4" y="672.0" font-size="22.67" font-weight="bold" textLength="57.6" lengthAdjust="spacingAndGlyphs" fill="#000" stroke="#000" stroke-width="0.35">Screen</text>
<rect x="2216.1" y="626.4" width="82.6" height="54.6" rx="8" fill="#8e9698"/><rect x="2217.4" y="627.7" width="80.0" height="52.0" rx="6.8" fill="url(#bTeal)" stroke="#2a8276" stroke-width="0.9"/><text x="2233.2" y="661.5" font-size="22.67" font-weight="bold" textLength="48.3" lengthAdjust="spacingAndGlyphs" fill="#000" stroke="#000" stroke-width="0.35">Preset</text>
<rect x="1981.9" y="897.9" width="82.6" height="54.6" rx="8" fill="#9c9da6"/><rect x="1983.2" y="899.2" width="80.0" height="52.0" rx="6.8" fill="url(#bGrey)" stroke="#55565e" stroke-width="0.9"/><text x="1995.5" y="933.3" font-size="22.67" font-weight="bold" textLength="55.3" lengthAdjust="spacingAndGlyphs" fill="#000" stroke="#000" stroke-width="0.35">Cursor</text>
<rect x="2098.9" y="897.9" width="82.6" height="54.6" rx="8" fill="#9c9da6"/><rect x="2100.2" y="899.2" width="80.0" height="52.0" rx="6.8" fill="url(#bGrey)" stroke="#55565e" stroke-width="0.9"/><text x="2116.9" y="933.3" font-size="22.67" font-weight="bold" textLength="46.6" lengthAdjust="spacingAndGlyphs" fill="#000" stroke="#000" stroke-width="0.35">Meas</text>
<rect x="2216.1" y="897.9" width="82.6" height="54.6" rx="8" fill="#9c9da6"/><rect x="2217.4" y="899.2" width="80.0" height="52.0" rx="6.8" fill="url(#bGrey)" stroke="#55565e" stroke-width="0.9"/><circle cx="2257.4" cy="925.2" r="7.5" fill="none" stroke="#0a0a0a" stroke-width="1.7"/><path d="M2262.7 919.9 A7.5 7.5 0 0 1 2252.1 930.5 Z" fill="#0a0a0a"/><line x1="2268.8" y1="925.2" x2="2274.0" y2="925.2" stroke="#0a0a0a" stroke-width="1.8"/><line x1="2267.3" y1="930.9" x2="2271.8" y2="933.5" stroke="#0a0a0a" stroke-width="1.8"/><line x1="2263.1" y1="935.1" x2="2265.7" y2="939.6" stroke="#0a0a0a" stroke-width="1.8"/><line x1="2257.4" y1="936.6" x2="2257.4" y2="941.8" stroke="#0a0a0a" stroke-width="1.8"/><line x1="2251.7" y1="935.1" x2="2249.1" y2="939.6" stroke="#0a0a0a" stroke-width="1.8"/><line x1="2247.5" y1="930.9" x2="2243.0" y2="933.5" stroke="#0a0a0a" stroke-width="1.8"/><line x1="2246.0" y1="925.2" x2="2240.8" y2="925.2" stroke="#0a0a0a" stroke-width="1.8"/><line x1="2247.5" y1="919.5" x2="2243.0" y2="916.9" stroke="#0a0a0a" stroke-width="1.8"/><line x1="2251.7" y1="915.3" x2="2249.1" y2="910.8" stroke="#0a0a0a" stroke-width="1.8"/><line x1="2257.4" y1="913.8" x2="2257.4" y2="908.6" stroke="#0a0a0a" stroke-width="1.8"/><line x1="2263.1" y1="915.3" x2="2265.7" y2="910.8" stroke="#0a0a0a" stroke-width="1.8"/><line x1="2267.3" y1="919.5" x2="2271.8" y2="916.9" stroke="#0a0a0a" stroke-width="1.8"/>
<rect x="1981.9" y="979.1" width="82.6" height="54.6" rx="8" fill="#9c9da6"/><rect x="1983.2" y="980.4" width="80.0" height="52.0" rx="6.8" fill="url(#bGrey)" stroke="#55565e" stroke-width="0.9"/><text x="1999.2" y="1000.3" font-size="22.67" font-weight="bold" textLength="48.1" lengthAdjust="spacingAndGlyphs" fill="#000" stroke="#000" stroke-width="0.35">Quick</text><text x="2000.2" y="1027.2" font-size="22.67" font-weight="bold" textLength="45.9" lengthAdjust="spacingAndGlyphs" fill="#000" stroke="#000" stroke-width="0.35">Meas</text>
<rect x="2098.9" y="979.1" width="82.6" height="54.6" rx="8" fill="#9c9da6"/><rect x="2100.2" y="980.4" width="80.0" height="52.0" rx="6.8" fill="url(#bGrey)" stroke="#55565e" stroke-width="0.9"/><text x="2111.2" y="1014.4" font-size="22.67" font-weight="bold" textLength="57.9" lengthAdjust="spacingAndGlyphs" fill="#000" stroke="#000" stroke-width="0.35">Search</text>
<rect x="2216.1" y="979.1" width="82.6" height="54.6" rx="8" fill="#9c9da6"/><rect x="2217.4" y="980.4" width="80.0" height="52.0" rx="6.8" fill="url(#bGrey)" stroke="#55565e" stroke-width="0.9"/><text x="2243.0" y="1014.4" font-size="22.67" font-weight="bold" textLength="28.9" lengthAdjust="spacingAndGlyphs" fill="#000" stroke="#000" stroke-width="0.35">FFT</text>
<rect x="1981.9" y="1060.7" width="82.6" height="54.6" rx="8" fill="#7c7c7e"/><rect x="1983.2" y="1062.0" width="80.0" height="52.0" rx="6.8" fill="url(#bDark)" stroke="#5c5c5e" stroke-width="0.9"/><text x="1991.7" y="1095.7" font-size="22.67" font-weight="bold" textLength="63.1" lengthAdjust="spacingAndGlyphs" fill="#000" stroke="#000" stroke-width="0.35">Protocol</text>
<rect x="2098.9" y="1060.7" width="82.6" height="54.6" rx="8" fill="#7c7c7e"/><rect x="2100.2" y="1062.0" width="80.0" height="52.0" rx="6.8" fill="url(#bDark)" stroke="#5c5c5e" stroke-width="0.9"/><text x="2124.2" y="1095.7" font-size="22.67" font-weight="bold" textLength="32.0" lengthAdjust="spacingAndGlyphs" fill="#000" stroke="#000" stroke-width="0.35">Gen</text>
<rect x="2216.1" y="1060.7" width="82.6" height="54.6" rx="8" fill="#9c9da6"/><rect x="2217.4" y="1062.0" width="80.0" height="52.0" rx="6.8" fill="url(#bGrey)" stroke="#55565e" stroke-width="0.9"/><rect x="2231.5" y="1072.3" width="12.5" height="12.5" fill="#07080a"/><rect x="2251.2" y="1072.3" width="12.5" height="12.5" fill="#07080a"/><rect x="2270.8" y="1072.3" width="12.5" height="12.5" fill="#07080a"/><rect x="2231.5" y="1091.3" width="12.5" height="12.5" fill="#07080a"/><rect x="2251.2" y="1091.3" width="12.5" height="12.5" fill="#07080a"/><rect x="2270.8" y="1091.3" width="12.5" height="12.5" fill="#07080a"/>
<rect x="2117.4" y="237.8" width="45.9" height="19.9" fill="#8b8d91"/>
<text x="2121.0" y="252.3" font-size="17.15" font-weight="bold" textLength="38.8" lengthAdjust="spacingAndGlyphs" fill="#2c2e34">Trig'd</text>
<circle cx="1827.8" cy="283.6" r="41.6" fill="url(#kRim)"/><circle cx="1827.4" cy="282.8" r="39.6" fill="url(#kBevel)"/><circle cx="1827.2" cy="282.4" r="29.5" fill="url(#kFace)"/><path d="M-4.6 -1.4 Q-2.4 0.8 0 4.2 Q2.4 0.8 4.6 -1.4 Q0 -3 -4.6 -1.4Z" fill="#45464f" opacity="0.62" transform="translate(1827.8 242.4) rotate(0.0)"/><path d="M-4.6 -1.4 Q-2.4 0.8 0 4.2 Q2.4 0.8 4.6 -1.4 Q0 -3 -4.6 -1.4Z" fill="#45464f" opacity="0.65" transform="translate(1863.5 263.0) rotate(60.0)"/><path d="M-4.6 -1.4 Q-2.4 0.8 0 4.2 Q2.4 0.8 4.6 -1.4 Q0 -3 -4.6 -1.4Z" fill="#45464f" opacity="0.88" transform="translate(1863.5 304.2) rotate(120.0)"/><path d="M-4.6 -1.4 Q-2.4 0.8 0 4.2 Q2.4 0.8 4.6 -1.4 Q0 -3 -4.6 -1.4Z" fill="#45464f" opacity="0.85" transform="translate(1827.8 324.8) rotate(180.0)"/><path d="M-4.6 -1.4 Q-2.4 0.8 0 4.2 Q2.4 0.8 4.6 -1.4 Q0 -3 -4.6 -1.4Z" fill="#45464f" opacity="0.62" transform="translate(1792.1 304.2) rotate(240.0)"/><path d="M-4.6 -1.4 Q-2.4 0.8 0 4.2 Q2.4 0.8 4.6 -1.4 Q0 -3 -4.6 -1.4Z" fill="#45464f" opacity="0.62" transform="translate(1792.1 263.0) rotate(300.0)"/>
<circle cx="1828.0" cy="480.0" r="51.3" fill="url(#kRim)"/><circle cx="1827.6" cy="479.2" r="49.3" fill="url(#kBevel)"/><circle cx="1827.4" cy="478.8" r="36.4" fill="url(#kFace)"/><path d="M-4.6 -1.4 Q-2.4 0.8 0 4.2 Q2.4 0.8 4.6 -1.4 Q0 -3 -4.6 -1.4Z" fill="#45464f" opacity="0.62" transform="translate(1828.0 429.1) rotate(0.0)"/><path d="M-4.6 -1.4 Q-2.4 0.8 0 4.2 Q2.4 0.8 4.6 -1.4 Q0 -3 -4.6 -1.4Z" fill="#45464f" opacity="0.65" transform="translate(1872.1 454.6) rotate(60.0)"/><path d="M-4.6 -1.4 Q-2.4 0.8 0 4.2 Q2.4 0.8 4.6 -1.4 Q0 -3 -4.6 -1.4Z" fill="#45464f" opacity="0.88" transform="translate(1872.1 505.4) rotate(120.0)"/><path d="M-4.6 -1.4 Q-2.4 0.8 0 4.2 Q2.4 0.8 4.6 -1.4 Q0 -3 -4.6 -1.4Z" fill="#45464f" opacity="0.85" transform="translate(1828.0 530.9) rotate(180.0)"/><path d="M-4.6 -1.4 Q-2.4 0.8 0 4.2 Q2.4 0.8 4.6 -1.4 Q0 -3 -4.6 -1.4Z" fill="#45464f" opacity="0.62" transform="translate(1783.9 505.4) rotate(240.0)"/><path d="M-4.6 -1.4 Q-2.4 0.8 0 4.2 Q2.4 0.8 4.6 -1.4 Q0 -3 -4.6 -1.4Z" fill="#45464f" opacity="0.62" transform="translate(1783.9 454.6) rotate(300.0)"/>
<circle cx="1828.0" cy="689.3" r="58.6" fill="url(#kRing)"/><circle cx="1828.0" cy="689.3" r="45.6" fill="#abc5ec" opacity="0.75"/><circle cx="1829.2" cy="691.7" r="43.2" fill="#5d7fb8" opacity="0.55" filter="url(#fBlur2)"/><circle cx="1828.0" cy="689.3" r="42.9" fill="url(#kOut)"/>
<circle cx="1828.0" cy="689.4" r="41.4" fill="url(#kRim)"/><circle cx="1827.6" cy="688.6" r="39.4" fill="url(#kBevel)"/><circle cx="1827.4" cy="688.2" r="29.4" fill="url(#kFace)"/><path d="M-4.6 -1.4 Q-2.4 0.8 0 4.2 Q2.4 0.8 4.6 -1.4 Q0 -3 -4.6 -1.4Z" fill="#45464f" opacity="0.62" transform="translate(1840.0 650.2) rotate(17.0)"/><path d="M-4.6 -1.4 Q-2.4 0.8 0 4.2 Q2.4 0.8 4.6 -1.4 Q0 -3 -4.6 -1.4Z" fill="#45464f" opacity="0.73" transform="translate(1867.9 680.2) rotate(77.0)"/><path d="M-4.6 -1.4 Q-2.4 0.8 0 4.2 Q2.4 0.8 4.6 -1.4 Q0 -3 -4.6 -1.4Z" fill="#45464f" opacity="0.90" transform="translate(1856.0 719.4) rotate(137.0)"/><path d="M-4.6 -1.4 Q-2.4 0.8 0 4.2 Q2.4 0.8 4.6 -1.4 Q0 -3 -4.6 -1.4Z" fill="#45464f" opacity="0.79" transform="translate(1816.0 728.6) rotate(197.0)"/><path d="M-4.6 -1.4 Q-2.4 0.8 0 4.2 Q2.4 0.8 4.6 -1.4 Q0 -3 -4.6 -1.4Z" fill="#45464f" opacity="0.62" transform="translate(1788.1 698.6) rotate(257.0)"/><path d="M-4.6 -1.4 Q-2.4 0.8 0 4.2 Q2.4 0.8 4.6 -1.4 Q0 -3 -4.6 -1.4Z" fill="#45464f" opacity="0.62" transform="translate(1800.0 659.4) rotate(317.0)"/>
<circle cx="1828.0" cy="943.9" r="68.7" fill="url(#kRing)"/><circle cx="1828.0" cy="943.9" r="55.2" fill="#abc5ec" opacity="0.75"/><circle cx="1829.2" cy="946.3" r="52.8" fill="#5d7fb8" opacity="0.55" filter="url(#fBlur2)"/><circle cx="1828.0" cy="943.9" r="52.5" fill="url(#kOut)"/>
<circle cx="1828.0" cy="943.9" r="51.0" fill="url(#kRim)"/><circle cx="1827.6" cy="943.1" r="49.0" fill="url(#kBevel)"/><circle cx="1827.4" cy="942.7" r="36.2" fill="url(#kFace)"/><path d="M-4.6 -1.4 Q-2.4 0.8 0 4.2 Q2.4 0.8 4.6 -1.4 Q0 -3 -4.6 -1.4Z" fill="#45464f" opacity="0.62" transform="translate(1828.0 893.3) rotate(0.0)"/><path d="M-4.6 -1.4 Q-2.4 0.8 0 4.2 Q2.4 0.8 4.6 -1.4 Q0 -3 -4.6 -1.4Z" fill="#45464f" opacity="0.65" transform="translate(1871.8 918.6) rotate(60.0)"/><path d="M-4.6 -1.4 Q-2.4 0.8 0 4.2 Q2.4 0.8 4.6 -1.4 Q0 -3 -4.6 -1.4Z" fill="#45464f" opacity="0.88" transform="translate(1871.8 969.2) rotate(120.0)"/><path d="M-4.6 -1.4 Q-2.4 0.8 0 4.2 Q2.4 0.8 4.6 -1.4 Q0 -3 -4.6 -1.4Z" fill="#45464f" opacity="0.85" transform="translate(1828.0 994.5) rotate(180.0)"/><path d="M-4.6 -1.4 Q-2.4 0.8 0 4.2 Q2.4 0.8 4.6 -1.4 Q0 -3 -4.6 -1.4Z" fill="#45464f" opacity="0.62" transform="translate(1784.2 969.2) rotate(240.0)"/><path d="M-4.6 -1.4 Q-2.4 0.8 0 4.2 Q2.4 0.8 4.6 -1.4 Q0 -3 -4.6 -1.4Z" fill="#45464f" opacity="0.62" transform="translate(1784.2 918.6) rotate(300.0)"/>
<circle cx="2140.2" cy="348.7" r="41.4" fill="url(#kRim)"/><circle cx="2139.8" cy="347.9" r="39.4" fill="url(#kBevel)"/><circle cx="2139.6" cy="347.5" r="29.4" fill="url(#kFace)"/><path d="M-4.6 -1.4 Q-2.4 0.8 0 4.2 Q2.4 0.8 4.6 -1.4 Q0 -3 -4.6 -1.4Z" fill="#45464f" opacity="0.62" transform="translate(2167.1 317.8) rotate(41.0)"/><path d="M-4.6 -1.4 Q-2.4 0.8 0 4.2 Q2.4 0.8 4.6 -1.4 Q0 -3 -4.6 -1.4Z" fill="#45464f" opacity="0.83" transform="translate(2180.4 356.5) rotate(101.0)"/><path d="M-4.6 -1.4 Q-2.4 0.8 0 4.2 Q2.4 0.8 4.6 -1.4 Q0 -3 -4.6 -1.4Z" fill="#45464f" opacity="0.89" transform="translate(2153.5 387.5) rotate(161.0)"/><path d="M-4.6 -1.4 Q-2.4 0.8 0 4.2 Q2.4 0.8 4.6 -1.4 Q0 -3 -4.6 -1.4Z" fill="#45464f" opacity="0.69" transform="translate(2113.3 379.6) rotate(221.0)"/><path d="M-4.6 -1.4 Q-2.4 0.8 0 4.2 Q2.4 0.8 4.6 -1.4 Q0 -3 -4.6 -1.4Z" fill="#45464f" opacity="0.62" transform="translate(2100.0 340.9) rotate(281.0)"/><path d="M-4.6 -1.4 Q-2.4 0.8 0 4.2 Q2.4 0.8 4.6 -1.4 Q0 -3 -4.6 -1.4Z" fill="#45464f" opacity="0.62" transform="translate(2126.9 309.9) rotate(341.0)"/>
<circle cx="2140.2" cy="819.1" r="51.3" fill="url(#kRim)"/><circle cx="2139.8" cy="818.3" r="49.3" fill="url(#kBevel)"/><circle cx="2139.6" cy="817.9" r="36.4" fill="url(#kFace)"/><path d="M-4.6 -1.4 Q-2.4 0.8 0 4.2 Q2.4 0.8 4.6 -1.4 Q0 -3 -4.6 -1.4Z" fill="#45464f" opacity="0.62" transform="translate(2173.6 780.7) rotate(41.0)"/><path d="M-4.6 -1.4 Q-2.4 0.8 0 4.2 Q2.4 0.8 4.6 -1.4 Q0 -3 -4.6 -1.4Z" fill="#45464f" opacity="0.83" transform="translate(2190.2 828.8) rotate(101.0)"/><path d="M-4.6 -1.4 Q-2.4 0.8 0 4.2 Q2.4 0.8 4.6 -1.4 Q0 -3 -4.6 -1.4Z" fill="#45464f" opacity="0.89" transform="translate(2156.8 867.2) rotate(161.0)"/><path d="M-4.6 -1.4 Q-2.4 0.8 0 4.2 Q2.4 0.8 4.6 -1.4 Q0 -3 -4.6 -1.4Z" fill="#45464f" opacity="0.69" transform="translate(2106.8 857.5) rotate(221.0)"/><path d="M-4.6 -1.4 Q-2.4 0.8 0 4.2 Q2.4 0.8 4.6 -1.4 Q0 -3 -4.6 -1.4Z" fill="#45464f" opacity="0.62" transform="translate(2090.2 809.4) rotate(281.0)"/><path d="M-4.6 -1.4 Q-2.4 0.8 0 4.2 Q2.4 0.8 4.6 -1.4 Q0 -3 -4.6 -1.4Z" fill="#45464f" opacity="0.62" transform="translate(2123.6 771.0) rotate(341.0)"/>
<path d="M1784.3 252.2 L1792.7 244.5 V259.9 Z" fill="#e6e8ee"/>
<path d="M1872.2 252.2 L1863.8 244.5 V259.9 Z" fill="#e6e8ee"/>
<path d="M1787.2 313.8 h3.2 v2.6 h6 q-3.6 1.6 -7.6 5.8 q-4 -4.2 -7.6 -5.8 h6 z" fill="#e6e8ee"/><path d="M1785.1 322.9 h7.4 l2.4 7 h4.2 v1.5 h-18.4 v-1.5 h4.2 z" fill="#e6e8ee"/>
<path d="M1779.0 436.4 L1771.4 429.1 V443.7 Z" fill="#e6e8ee"/>
<path d="M1781.0 436.4 L1788.6 429.1 V443.7 Z" fill="#e6e8ee"/>
<path d="M1867.6 436.4 L1875.2 429.1 V443.7 Z" fill="#e6e8ee"/>
<path d="M1884.8 436.4 L1877.2 429.1 V443.7 Z" fill="#e6e8ee"/>
<path d="M1778.0 519.8 h3.2 v2.6 h6 q-3.6 1.6 -7.6 5.8 q-4 -4.2 -7.6 -5.8 h6 z" fill="#e6e8ee"/><path d="M1775.9 528.9 h7.4 l2.4 7 h4.2 v1.5 h-18.4 v-1.5 h4.2 z" fill="#e6e8ee"/>
<path d="M1772.2 647.5 L1764.0 639.2 H1780.4 Z" fill="#e6e8ee"/>
<path d="M1884.3 639.8 L1876.2 648.0 H1892.4 Z" fill="#e6e8ee"/>
<path d="M1775.9 731.0 h3.2 v2.6 h6 q-3.6 1.6 -7.6 5.8 q-4 -4.2 -7.6 -5.8 h6 z" fill="#e6e8ee"/><path d="M1773.8 740.1 h7.4 l2.4 7 h4.2 v1.5 h-18.4 v-1.5 h4.2 z" fill="#e6e8ee"/>
<path d="M1770.9 879.6 L1763.6 872.0 H1778.2 Z" fill="#e6e8ee"/>
<path d="M1770.9 881.6 L1763.6 889.2 H1778.2 Z" fill="#e6e8ee"/>
<path d="M1885.0 871.4 L1877.7 879.0 H1892.3 Z" fill="#e6e8ee"/>
<path d="M1885.0 889.4 L1877.7 881.8 H1892.3 Z" fill="#e6e8ee"/>
<path d="M1766.4 995.8 h3.2 v2.6 h6 q-3.6 1.6 -7.6 5.8 q-4 -4.2 -7.6 -5.8 h6 z" fill="#e6e8ee"/><path d="M1764.3 1004.9 h7.4 l2.4 7 h4.2 v1.5 h-18.4 v-1.5 h4.2 z" fill="#e6e8ee"/>
<path d="M2094.2 321.1 L2086.1 312.9 H2102.3 Z" fill="#e6e8ee"/>
<path d="M2186.1 313.5 L2177.9 321.8 H2194.3 Z" fill="#e6e8ee"/>
<path d="M2092.8 379.2 h3.2 v2.6 h6 q-3.6 1.6 -7.6 5.8 q-4 -4.2 -7.6 -5.8 h6 z" fill="#e6e8ee"/><path d="M2090.7 388.3 h7.4 l2.4 7 h4.2 v1.5 h-18.4 v-1.5 h4.2 z" fill="#e6e8ee"/>
<path d="M2090.4 859.0 h3.2 v2.6 h6 q-3.6 1.6 -7.6 5.8 q-4 -4.2 -7.6 -5.8 h6 z" fill="#e6e8ee"/><path d="M2088.3 868.1 h7.4 l2.4 7 h4.2 v1.5 h-18.4 v-1.5 h4.2 z" fill="#e6e8ee"/>
<path d="M2035.6 823.1 A13 13 0 1 1 2027.8 808.3" fill="none" stroke="#e8aa7c" stroke-width="4"/>
<path d="M2029 801.4 L2039.6 811.4 L2026 815.4 Z" fill="#e8aa7c"/>
<text x="1861.3" y="314.9" font-size="13.37" font-weight="bold" textLength="24.8" lengthAdjust="spacingAndGlyphs" fill="#e8eaf0">Push</text>
<text x="1861.3" y="330.8" font-size="13.37" font-weight="bold" textLength="35.2" lengthAdjust="spacingAndGlyphs" fill="#e8eaf0">to Zero</text>
<text x="1874.4" y="520.2" font-size="13.37" font-weight="bold" textLength="34.6" lengthAdjust="spacingAndGlyphs" fill="#e8eaf0">Coarse</text>
<text x="1874.4" y="536.6" font-size="13.37" font-weight="bold" textLength="21.6" lengthAdjust="spacingAndGlyphs" fill="#e8eaf0">Fine</text>
<text x="1882.0" y="732.4" font-size="13.37" font-weight="bold" textLength="25.4" lengthAdjust="spacingAndGlyphs" fill="#e8eaf0">Push</text>
<text x="1882.0" y="748.0" font-size="13.37" font-weight="bold" textLength="35.4" lengthAdjust="spacingAndGlyphs" fill="#e8eaf0">to Zero</text>
<text x="1888.6" y="996.4" font-size="13.37" font-weight="bold" textLength="34.8" lengthAdjust="spacingAndGlyphs" fill="#e8eaf0">Coarse</text>
<text x="1888.6" y="1012.4" font-size="13.37" font-weight="bold" textLength="21.6" lengthAdjust="spacingAndGlyphs" fill="#e8eaf0">Fine</text>
<text x="2179.9" y="380.1" font-size="13.37" font-weight="bold" textLength="25.4" lengthAdjust="spacingAndGlyphs" fill="#e8eaf0">Push</text>
<text x="2164.8" y="396.2" font-size="13.37" font-weight="bold" textLength="40.5" lengthAdjust="spacingAndGlyphs" fill="#e8eaf0">for 50%</text>
<text x="2194.7" y="860.1" font-size="13.37" font-weight="bold" textLength="25.2" lengthAdjust="spacingAndGlyphs" fill="#e8eaf0">Push</text>
<text x="2175.3" y="876.1" font-size="13.37" font-weight="bold" textLength="44.6" lengthAdjust="spacingAndGlyphs" fill="#e8eaf0">to Select</text>
<rect x="13.5" y="1174.5" width="124.0" height="22.0" rx="3.5" fill="#e9e9ed" stroke="#8f8f9d" stroke-width="1"/>
<text x="19.3" y="1190.4" font-size="14.24" textLength="112.0" lengthAdjust="spacingAndGlyphs" fill="#111">Instrument Home</text>
<text x="148.4" y="1190.4" font-size="17.71" font-family="Liberation Serif" textLength="87.6" lengthAdjust="spacingAndGlyphs" fill="#111">Autoscale:</text>
<rect x="245.4" y="1178.2" width="13.6" height="13.6" rx="2.2" fill="#3584e4"/>
<path d="M248.3 1185.2 L251 1188 L256.2 1182" fill="none" stroke="#fff" stroke-width="1.9" stroke-linecap="round" stroke-linejoin="round"/>
<rect x="0.0" y="29.0" width="3.0" height="1180.0" fill="#a7acc4"/>
<rect x="0.0" y="0.0" width="1.0" height="1209.0" fill="#4d5060"/>
<rect x="2461.0" y="27.0" width="3.0" height="1182.0" fill="#a7acc4"/>
<rect x="2463.0" y="0.0" width="1.0" height="1209.0" fill="#4d5060"/>
<rect x="0.0" y="1206.0" width="2464.0" height="3.0" fill="#a7acc4"/>
<rect x="0.0" y="1208.0" width="2464.0" height="1.0" fill="#4d5060"/>
<path d="M0 0 H4 Q0.5 0.5 0 4 Z" fill="#000"/>
<path d="M2464 0 H2460 Q2463.5 0.5 2464 4 Z" fill="#000"/>
</svg>
</body></html>
